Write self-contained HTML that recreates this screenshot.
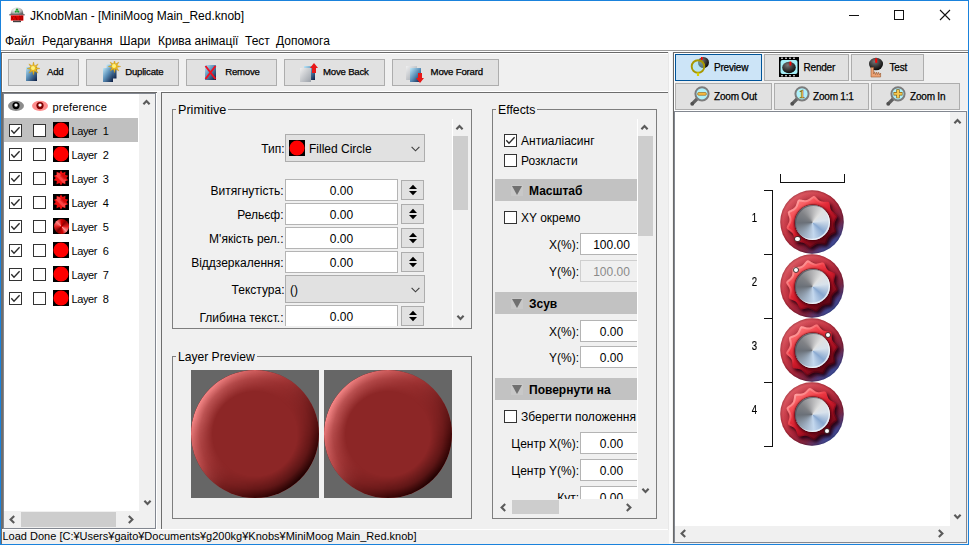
<!DOCTYPE html>
<html><head><meta charset="utf-8">
<style>
*{box-sizing:border-box;margin:0;padding:0}
html,body{width:969px;height:545px;overflow:hidden;background:#f0f0f0;font-family:"Liberation Sans",sans-serif;font-size:12px;color:#000}
div,span,svg{position:absolute}
.t{white-space:nowrap;line-height:14px}
.s10{font-size:10px;line-height:12px;letter-spacing:-0.2px;-webkit-text-stroke:0.25px #000}
.btn{background:#e1e1e1;border:1px solid #adadad}
.fld{background:#fff;border:1px solid #b4b4b4;text-align:center;line-height:22px;white-space:nowrap;overflow:hidden}
.cb{width:13px;height:13px;border:1px solid #333;background:#fff}
.hdr{background:#c2c2c2;height:22px}
.gb{border:1px solid #7e7e7e}
.thumb{background:#cdcdcd}
.lay{font-size:11px;letter-spacing:-0.4px;word-spacing:3px;line-height:14px;white-space:nowrap}
</style></head><body>

<div style="left:0;top:0;width:969px;height:545px;border:1px solid #1a82dc"></div>
<div style="left:1px;top:1px;width:967px;height:49px;background:#fff"></div>
<div style="left:1px;top:50px;width:967px;height:1px;background:#9a9a9a"></div>
<div style="left:1px;top:51px;width:967px;height:1px;background:#fff"></div>
<div style="left:1px;top:52px;width:668px;height:1px;background:#696969"></div>
<div style="left:1px;top:52px;width:1px;height:40px;background:#696969"></div>
<div style="left:2px;top:53px;width:666px;height:1px;background:#fff"></div>
<div style="left:2px;top:53px;width:1px;height:39px;background:#fff"></div>
<svg style="left:9px;top:7px" width="16" height="16" viewBox="0 0 16 16">
<defs><radialGradient id="dome" cx="0.38" cy="0.3" r="0.75"><stop offset="0" stop-color="#ffffff"/><stop offset="0.6" stop-color="#b8b8b8"/><stop offset="1" stop-color="#606060"/></radialGradient></defs>
<path d="M1.5 7.6 Q1.5 0.6 8 0.6 Q14.5 0.6 14.5 7.6 Z" fill="url(#dome)"/>
<rect x="0.3" y="7.2" width="15.4" height="1.2" fill="#5a5a5a"/>
<rect x="1.8" y="8.4" width="12.6" height="5.2" fill="#ff0000"/>
<path d="M2.8 9v4M3.3 11l1.5-2M3.3 11l1.5 2M6 9v4M6 9l2 4M8 9v4M10 9.2h1.2v3.6h-1.2zM12.2 9v4h1.3v-4z" stroke="#500000" stroke-width="0.45" fill="none"/>
<rect x="4" y="13.6" width="8" height="1.6" fill="#404040"/>
<circle cx="8" cy="2.6" r="1.2" fill="#1a9a2a"/><circle cx="6.8" cy="4.6" r="1.1" fill="#1a9a2a"/><circle cx="9.2" cy="4.6" r="1.1" fill="#1a9a2a"/>
</svg>
<div class="t" style="left:30px;top:9px">JKnobMan - [MiniMoog Main_Red.knob]</div>
<div style="left:849px;top:15px;width:10px;height:1px;background:#111"></div>
<div style="left:894px;top:10px;width:10px;height:10px;border:1px solid #111"></div>
<svg style="left:939px;top:9px" width="12" height="12" viewBox="0 0 12 12"><path d="M1 1L11 11M11 1L1 11" stroke="#111" stroke-width="1.1"/></svg>
<div class="t" style="left:5px;top:33.5px">Файл</div>
<div class="t" style="left:42px;top:33.5px">Редагування</div>
<div class="t" style="left:119.5px;top:33.5px">Шари</div>
<div class="t" style="left:158px;top:33.5px">Крива анімації</div>
<div class="t" style="left:245px;top:33.5px">Тест</div>
<div class="t" style="left:276px;top:33.5px">Допомога</div>
<div class="btn" style="left:8px;top:59px;width:71px;height:27px"></div>
<svg style="left:24px;top:62px" width="20" height="21"><defs><linearGradient id="g1" x1="0" y1="0" x2="1" y2="1"><stop offset="0" stop-color="#bfe8f8"/><stop offset="0.45" stop-color="#5a8fb8"/><stop offset="1" stop-color="#0a1a40"/></linearGradient></defs><rect x="2" y="5" width="11" height="14" fill="url(#g1)"/><path d="M9.50,0.00 L10.54,3.98 L14.10,1.90 L12.02,5.46 L16.00,6.50 L12.02,7.54 L14.10,11.10 L10.54,9.02 L9.50,13.00 L8.46,9.02 L4.90,11.10 L6.98,7.54 L3.00,6.50 L6.98,5.46 L4.90,1.90 L8.46,3.98Z" fill="#e8b820" stroke="#c89010" stroke-width="0.4"/><circle cx="9.0" cy="6.0" r="2" fill="#fff27a"/></svg>
<div class="t s10" style="left:47px;top:66.3px;font-size:9.6px">Add</div>
<div class="btn" style="left:86px;top:59px;width:93px;height:27px"></div>
<svg style="left:101px;top:61px" width="22" height="22"><defs><linearGradient id="g2b" x1="0" y1="0" x2="1" y2="1"><stop offset="0" stop-color="#bfe8f8"/><stop offset="0.45" stop-color="#5a8fb8"/><stop offset="1" stop-color="#0a1a40"/></linearGradient></defs><rect x="5.5" y="3.5" width="10" height="14" fill="url(#g2b)"/><defs><linearGradient id="g2a" x1="0" y1="0" x2="1" y2="1"><stop offset="0" stop-color="#bfe8f8"/><stop offset="0.45" stop-color="#5a8fb8"/><stop offset="1" stop-color="#0a1a40"/></linearGradient></defs><rect x="2" y="7" width="10" height="14" fill="url(#g2a)"/><path d="M13.50,-0.70 L14.50,3.09 L17.88,1.12 L15.91,4.50 L19.70,5.50 L15.91,6.50 L17.88,9.88 L14.50,7.91 L13.50,11.70 L12.50,7.91 L9.12,9.88 L11.09,6.50 L7.30,5.50 L11.09,4.50 L9.12,1.12 L12.50,3.09Z" fill="#e8b820" stroke="#c89010" stroke-width="0.4"/><circle cx="13.0" cy="5.0" r="2" fill="#fff27a"/></svg>
<div class="t s10" style="left:125.2px;top:66.3px;font-size:9.6px">Duplicate</div>
<div class="btn" style="left:186px;top:59px;width:91px;height:27px"></div>
<svg style="left:203px;top:63px" width="16" height="19"><defs><linearGradient id="g3" x1="0" y1="0" x2="1" y2="1"><stop offset="0" stop-color="#bfe8f8"/><stop offset="0.45" stop-color="#5a8fb8"/><stop offset="1" stop-color="#0a1a40"/></linearGradient></defs><rect x="2" y="2" width="11" height="15" fill="url(#g3)"/><path d="M2.5 3L12.5 16M12.5 3L2.5 16" stroke="#f01020" stroke-width="2"/></svg>
<div class="t s10" style="left:225.2px;top:66.3px;font-size:9.6px">Remove</div>
<div class="btn" style="left:284px;top:59px;width:101px;height:27px"></div>
<svg style="left:299px;top:62px" width="22" height="22"><defs><linearGradient id="g4" x1="0" y1="0" x2="1" y2="1"><stop offset="0" stop-color="#bfe8f8"/><stop offset="0.5" stop-color="#5a8fb8"/><stop offset="1" stop-color="#0a1a40"/></linearGradient><linearGradient id="g4g" x1="0" y1="0" x2="1" y2="1"><stop offset="0" stop-color="#f0f0f0"/><stop offset="1" stop-color="#9aa0a8"/></linearGradient></defs><rect x="5" y="4" width="11" height="14" fill="url(#g4)"/><rect x="1" y="6" width="11" height="14" fill="url(#g4g)"/><path d="M15 1L19 6H17V11H13V6H11Z" fill="#e81818"/></svg>
<div class="t s10" style="left:323px;top:66.3px;font-size:9.6px">Move Back</div>
<div class="btn" style="left:392px;top:59px;width:107px;height:27px"></div>
<svg style="left:405px;top:62px" width="22" height="22"><defs><linearGradient id="g5" x1="0" y1="0" x2="1" y2="1"><stop offset="0" stop-color="#bfe8f8"/><stop offset="0.5" stop-color="#5a8fb8"/><stop offset="1" stop-color="#0a1a40"/></linearGradient><linearGradient id="g5g" x1="0" y1="0" x2="1" y2="1"><stop offset="0" stop-color="#f0f0f0"/><stop offset="1" stop-color="#9aa0a8"/></linearGradient></defs><rect x="1" y="4" width="11" height="14" fill="url(#g5g)"/><rect x="5" y="6" width="11" height="14" fill="url(#g5)"/><path d="M15 21L19 16H17V11H13V16H11Z" fill="#e81818"/></svg>
<div class="t s10" style="left:430.6px;top:66.3px;font-size:9.6px">Move Forard</div>
<div style="left:2px;top:91px;width:666px;height:1px;background:#fff"></div>
<div style="left:1px;top:92px;width:2px;height:437px;background:#6d6d6d"></div>
<div style="left:3px;top:93px;width:153px;height:436px;border:1px solid #828790"></div>
<div style="left:156px;top:93px;width:1px;height:437px;background:#fff"></div>
<div style="left:1px;top:92px;width:156px;height:1px;background:#696969"></div>
<div style="left:1px;top:529px;width:667px;height:1px;background:#fff"></div>
<div style="left:1px;top:529px;width:1px;height:15px;background:#6d6d6d"></div>
<div style="left:4px;top:94px;width:135px;height:417px;background:#fff"></div>
<div style="left:139px;top:94px;width:16px;height:417px;background:#f0f0f0"></div>
<svg style="left:141.8px;top:99px" width="9" height="6" viewBox="0 0 9 6"><path d="M1.4 5.3L4.5 2L7.6 5.3" fill="none" stroke="#5a5a5a" stroke-width="2.1"/></svg>
<svg style="left:142.5px;top:499.5px" width="9" height="6" viewBox="0 0 9 6"><path d="M1.4 0.7L4.5 4L7.6 0.7" fill="none" stroke="#5a5a5a" stroke-width="2.1"/></svg>
<div style="left:4px;top:511px;width:151px;height:17px;background:#f0f0f0"></div>
<div class="thumb" style="left:21px;top:512px;width:95px;height:15px"></div>
<svg style="left:9px;top:515px" width="6" height="9" viewBox="0 0 6 9"><path d="M5.2 1.1L1.6 4.5L5.2 7.9" fill="none" stroke="#5a5a5a" stroke-width="2.1"/></svg>
<svg style="left:128px;top:515px" width="6" height="9" viewBox="0 0 6 9"><path d="M0.8 1.1L4.4 4.5L0.8 7.9" fill="none" stroke="#5a5a5a" stroke-width="2.1"/></svg>
<svg style="left:8px;top:100px" width="16" height="12" viewBox="0 0 16 12"><ellipse cx="8" cy="5.8" rx="8" ry="5.1" fill="#8c8c8c"/><circle cx="8" cy="5.6" r="3.6" fill="#000"/><circle cx="8" cy="5.1" r="1.7" fill="#fff"/></svg>
<svg style="left:32px;top:100px" width="16" height="12" viewBox="0 0 16 12"><ellipse cx="8" cy="5.8" rx="8" ry="5.1" fill="#ff8c8c"/><circle cx="8" cy="5.6" r="3.6" fill="#800000"/><circle cx="8" cy="5.1" r="1.7" fill="#fff"/></svg>
<div class="t" style="left:52.5px;top:100px;font-size:11px;letter-spacing:0.2px">preference</div>
<div style="left:4px;top:118px;width:134px;height:24px;background:#c0c0c0"></div>
<div class="cb" style="left:9px;top:124px"></div>
<svg style="left:9px;top:124px" width="13" height="13" viewBox="0 0 13 13"><path d="M2.3 6.3L5 9.3L10.6 3.2" fill="none" stroke="#2a2a2a" stroke-width="1.35"/></svg>
<div class="cb" style="left:33px;top:124px"></div>
<svg style="left:53px;top:122px" width="16" height="16" viewBox="0 0 16 16"><rect width="16" height="16" fill="#000"/><circle cx="8" cy="8" r="7.6" fill="#ff0000"/></svg>
<div class="lay" style="left:71.5px;top:123.5px">Layer 1</div>
<div class="cb" style="left:9px;top:148px"></div>
<svg style="left:9px;top:148px" width="13" height="13" viewBox="0 0 13 13"><path d="M2.3 6.3L5 9.3L10.6 3.2" fill="none" stroke="#2a2a2a" stroke-width="1.35"/></svg>
<div class="cb" style="left:33px;top:148px"></div>
<svg style="left:53px;top:146px" width="16" height="16" viewBox="0 0 16 16"><rect width="16" height="16" fill="#000"/><circle cx="8" cy="8" r="7.6" fill="#ff0000"/></svg>
<div class="lay" style="left:71.5px;top:147.5px">Layer 2</div>
<div class="cb" style="left:9px;top:172px"></div>
<svg style="left:9px;top:172px" width="13" height="13" viewBox="0 0 13 13"><path d="M2.3 6.3L5 9.3L10.6 3.2" fill="none" stroke="#2a2a2a" stroke-width="1.35"/></svg>
<div class="cb" style="left:33px;top:172px"></div>
<svg style="left:53px;top:170px" width="16" height="16" viewBox="0 0 16 16"><rect width="16" height="16" fill="#000"/><defs><clipPath id="bc2"><path d="M8.00,0.40 L9.61,3.05 L12.47,1.85 L12.21,4.94 L15.23,5.65 L13.20,8.00 L15.23,10.35 L12.21,11.06 L12.47,14.15 L9.61,12.95 L8.00,15.60 L6.39,12.95 L3.53,14.15 L3.79,11.06 L0.77,10.35 L2.80,8.00 L0.77,5.65 L3.79,4.94 L3.53,1.85 L6.39,3.05Z"/></clipPath></defs><path d="M8.00,0.40 L9.61,3.05 L12.47,1.85 L12.21,4.94 L15.23,5.65 L13.20,8.00 L15.23,10.35 L12.21,11.06 L12.47,14.15 L9.61,12.95 L8.00,15.60 L6.39,12.95 L3.53,14.15 L3.79,11.06 L0.77,10.35 L2.80,8.00 L0.77,5.65 L3.79,4.94 L3.53,1.85 L6.39,3.05Z" fill="#f01010"/><g clip-path="url(#bc2)"><path d="M2 5L5 2L14 11L11 14Z" fill="#ff5050" opacity="0.8"/><path d="M7 6L10 3L14 7L11 10Z" fill="#c00000" opacity="0.5"/></g></svg>
<div class="lay" style="left:71.5px;top:171.5px">Layer 3</div>
<div class="cb" style="left:9px;top:196px"></div>
<svg style="left:9px;top:196px" width="13" height="13" viewBox="0 0 13 13"><path d="M2.3 6.3L5 9.3L10.6 3.2" fill="none" stroke="#2a2a2a" stroke-width="1.35"/></svg>
<div class="cb" style="left:33px;top:196px"></div>
<svg style="left:53px;top:194px" width="16" height="16" viewBox="0 0 16 16"><rect width="16" height="16" fill="#000"/><defs><clipPath id="bc3"><path d="M8.00,0.40 L9.61,3.05 L12.47,1.85 L12.21,4.94 L15.23,5.65 L13.20,8.00 L15.23,10.35 L12.21,11.06 L12.47,14.15 L9.61,12.95 L8.00,15.60 L6.39,12.95 L3.53,14.15 L3.79,11.06 L0.77,10.35 L2.80,8.00 L0.77,5.65 L3.79,4.94 L3.53,1.85 L6.39,3.05Z"/></clipPath></defs><path d="M8.00,0.40 L9.61,3.05 L12.47,1.85 L12.21,4.94 L15.23,5.65 L13.20,8.00 L15.23,10.35 L12.21,11.06 L12.47,14.15 L9.61,12.95 L8.00,15.60 L6.39,12.95 L3.53,14.15 L3.79,11.06 L0.77,10.35 L2.80,8.00 L0.77,5.65 L3.79,4.94 L3.53,1.85 L6.39,3.05Z" fill="#f01010"/><g clip-path="url(#bc3)"><path d="M2 5L5 2L14 11L11 14Z" fill="#ff5050" opacity="0.8"/><path d="M7 6L10 3L14 7L11 10Z" fill="#c00000" opacity="0.5"/></g></svg>
<div class="lay" style="left:71.5px;top:195.5px">Layer 4</div>
<div class="cb" style="left:9px;top:220px"></div>
<svg style="left:9px;top:220px" width="13" height="13" viewBox="0 0 13 13"><path d="M2.3 6.3L5 9.3L10.6 3.2" fill="none" stroke="#2a2a2a" stroke-width="1.35"/></svg>
<div class="cb" style="left:33px;top:220px"></div>
<div style="left:53px;top:218px;width:16px;height:16px;background:#000"></div>
<div style="left:53.5px;top:218.5px;width:15px;height:15px;border-radius:50%;background:conic-gradient(from 0deg,#d00000 0deg,#900000 40deg,#e02020 90deg,#ff9090 135deg,#d00000 170deg,#800000 220deg,#e02020 270deg,#ff8080 315deg,#d00000 360deg)"></div>
<div class="lay" style="left:71.5px;top:219.5px">Layer 5</div>
<div class="cb" style="left:9px;top:244px"></div>
<svg style="left:9px;top:244px" width="13" height="13" viewBox="0 0 13 13"><path d="M2.3 6.3L5 9.3L10.6 3.2" fill="none" stroke="#2a2a2a" stroke-width="1.35"/></svg>
<div class="cb" style="left:33px;top:244px"></div>
<svg style="left:53px;top:242px" width="16" height="16" viewBox="0 0 16 16"><rect width="16" height="16" fill="#000"/><circle cx="8" cy="8" r="7.6" fill="#ff0000"/></svg>
<div class="lay" style="left:71.5px;top:243.5px">Layer 6</div>
<div class="cb" style="left:9px;top:268px"></div>
<svg style="left:9px;top:268px" width="13" height="13" viewBox="0 0 13 13"><path d="M2.3 6.3L5 9.3L10.6 3.2" fill="none" stroke="#2a2a2a" stroke-width="1.35"/></svg>
<div class="cb" style="left:33px;top:268px"></div>
<svg style="left:53px;top:266px" width="16" height="16" viewBox="0 0 16 16"><rect width="16" height="16" fill="#000"/><circle cx="8" cy="8" r="7.6" fill="#ff0000"/></svg>
<div class="lay" style="left:71.5px;top:267.5px">Layer 7</div>
<div class="cb" style="left:9px;top:292px"></div>
<svg style="left:9px;top:292px" width="13" height="13" viewBox="0 0 13 13"><path d="M2.3 6.3L5 9.3L10.6 3.2" fill="none" stroke="#2a2a2a" stroke-width="1.35"/></svg>
<div class="cb" style="left:33px;top:292px"></div>
<svg style="left:53px;top:290px" width="16" height="16" viewBox="0 0 16 16"><rect width="16" height="16" fill="#000"/><circle cx="8" cy="8" r="7.6" fill="#ff0000"/></svg>
<div class="lay" style="left:71.5px;top:291.5px">Layer 8</div>
<div style="left:161px;top:92px;width:507px;height:437px;border-left:1px solid #6d6d6d;border-top:1px solid #6d6d6d"></div>
<div class="gb" style="left:172px;top:109px;width:300px;height:220px"></div>
<div class="t" style="left:176px;top:104px;padding:0 2px;background:#f0f0f0;line-height:12px;font-size:12.6px">Primitive</div>
<div style="left:452px;top:119px;width:1px;height:208px;background:#fff"></div>
<div class="thumb" style="left:453px;top:136px;width:15px;height:74px"></div>
<svg style="left:455.3px;top:124px" width="9" height="6" viewBox="0 0 9 6"><path d="M1.4 5.3L4.5 2L7.6 5.3" fill="none" stroke="#5a5a5a" stroke-width="2.1"/></svg>
<svg style="left:456px;top:315px" width="9" height="6" viewBox="0 0 9 6"><path d="M1.4 0.7L4.5 4L7.6 0.7" fill="none" stroke="#5a5a5a" stroke-width="2.1"/></svg>
<div class="t" style="right:684.5px;top:142px;">Тип:</div>
<div class="btn" style="left:285px;top:134px;width:140px;height:28px"></div>
<svg style="left:289px;top:140px" width="16" height="16" viewBox="0 0 16 16"><rect width="16" height="16" fill="#000"/><circle cx="8" cy="8" r="7.6" fill="#ff0000"/></svg>
<div class="t" style="left:309px;top:142px">Filled Circle</div>
<svg style="left:410.5px;top:145.5px" width="9" height="6" viewBox="0 0 9 6"><path d="M0.6 0.8L4.5 4.8L8.4 0.8" fill="none" stroke="#404040" stroke-width="1.15"/></svg>
<div class="t" style="right:685.5px;top:184px;">Витягнутість:</div>
<div class="fld" style="left:285px;top:179px;width:113px;height:22px">0.00</div>
<div class="btn" style="left:401px;top:180px;width:23px;height:20px"></div><svg style="left:408px;top:184px" width="10" height="12" viewBox="0 0 10 12"><path d="M1 5L5 0.8L9 5Z M1 7L5 11.2L9 7Z" fill="#000"/></svg>
<div class="t" style="right:685.5px;top:208px;">Рельєф:</div>
<div class="fld" style="left:285px;top:203px;width:113px;height:22px">0.00</div>
<div class="btn" style="left:401px;top:204px;width:23px;height:20px"></div><svg style="left:408px;top:208px" width="10" height="12" viewBox="0 0 10 12"><path d="M1 5L5 0.8L9 5Z M1 7L5 11.2L9 7Z" fill="#000"/></svg>
<div class="t" style="right:685.5px;top:232px;">М'якість рел.:</div>
<div class="fld" style="left:285px;top:227px;width:113px;height:22px">0.00</div>
<div class="btn" style="left:401px;top:228px;width:23px;height:20px"></div><svg style="left:408px;top:232px" width="10" height="12" viewBox="0 0 10 12"><path d="M1 5L5 0.8L9 5Z M1 7L5 11.2L9 7Z" fill="#000"/></svg>
<div class="t" style="right:685.5px;top:256px;">Віддзеркалення:</div>
<div class="fld" style="left:285px;top:251px;width:113px;height:22px">0.00</div>
<div class="btn" style="left:401px;top:252px;width:23px;height:20px"></div><svg style="left:408px;top:256px" width="10" height="12" viewBox="0 0 10 12"><path d="M1 5L5 0.8L9 5Z M1 7L5 11.2L9 7Z" fill="#000"/></svg>
<div class="t" style="right:684.5px;top:283px;">Текстура:</div>
<div class="btn" style="left:285px;top:275px;width:140px;height:28px"></div>
<div class="t" style="left:290px;top:283px">()</div>
<svg style="left:410.5px;top:286.5px" width="9" height="6" viewBox="0 0 9 6"><path d="M0.6 0.8L4.5 4.8L8.4 0.8" fill="none" stroke="#404040" stroke-width="1.15"/></svg>
<div style="left:173px;top:303px;width:279px;height:23px;overflow:hidden">
<div class="t" style="right:168.5px;top:8px">Глибина текст.:</div>
<div class="fld" style="left:112px;top:2px;width:113px;height:22px">0.00</div>
<div class="btn" style="left:228px;top:3px;width:23px;height:20px"></div><svg style="left:235px;top:7px" width="10" height="12" viewBox="0 0 10 12"><path d="M1 5L5 0.8L9 5Z M1 7L5 11.2L9 7Z" fill="#000"/></svg>
</div>
<div class="gb" style="left:172px;top:356px;width:300px;height:163px"></div>
<div class="t" style="left:176px;top:351px;padding:0 2px;background:#f0f0f0;line-height:12px;font-size:12.1px">Layer Preview</div>
<div style="left:191px;top:370px;width:128px;height:128px;background:#666"></div>
<div style="left:191px;top:370px;width:128px;height:128px;border-radius:50%;background:#8c2626"></div>
<div style="left:191px;top:370px;width:128px;height:128px;border-radius:50%;background:conic-gradient(from 0deg, rgba(232,115,115,0.75) 0deg, rgba(205,85,85,0.35) 30deg, rgba(30,0,0,0.25) 60deg, rgba(40,0,0,0.85) 95deg, rgba(25,0,0,1) 135deg, rgba(40,0,0,0.85) 180deg, rgba(30,0,0,0.25) 212deg, rgba(240,120,120,0.45) 240deg, rgba(250,140,140,1) 285deg, rgba(250,140,140,0.95) 318deg, rgba(232,115,115,0.75) 360deg);-webkit-mask-image:radial-gradient(closest-side, transparent 66%, rgba(0,0,0,0.45) 86%, black 100%);mask-image:radial-gradient(closest-side, transparent 66%, rgba(0,0,0,0.45) 86%, black 100%)"></div>
<div style="left:324px;top:370px;width:128px;height:128px;background:#666"></div>
<div style="left:324px;top:370px;width:128px;height:128px;border-radius:50%;background:#8c2626"></div>
<div style="left:324px;top:370px;width:128px;height:128px;border-radius:50%;background:conic-gradient(from 0deg, rgba(232,115,115,0.75) 0deg, rgba(205,85,85,0.35) 30deg, rgba(30,0,0,0.25) 60deg, rgba(40,0,0,0.85) 95deg, rgba(25,0,0,1) 135deg, rgba(40,0,0,0.85) 180deg, rgba(30,0,0,0.25) 212deg, rgba(240,120,120,0.45) 240deg, rgba(250,140,140,1) 285deg, rgba(250,140,140,0.95) 318deg, rgba(232,115,115,0.75) 360deg);-webkit-mask-image:radial-gradient(closest-side, transparent 66%, rgba(0,0,0,0.45) 86%, black 100%);mask-image:radial-gradient(closest-side, transparent 66%, rgba(0,0,0,0.45) 86%, black 100%)"></div>
<div class="gb" style="left:492px;top:109px;width:165px;height:410px"></div>
<div class="t" style="left:496px;top:104px;padding:0 2px;background:#f0f0f0;line-height:12px;font-size:12.3px">Effects</div>
<div style="left:493px;top:119px;width:144px;height:380px;overflow:hidden">
<div class="cb" style="left:11px;top:15px"></div>
<svg style="left:11px;top:15px" width="13" height="13" viewBox="0 0 13 13"><path d="M2.3 6.3L5 9.3L10.6 3.2" fill="none" stroke="#2a2a2a" stroke-width="1.35"/></svg>
<div class="t" style="left:28px;top:15px">Антиаліасинг</div>
<div class="cb" style="left:11px;top:35px"></div>
<div class="t" style="left:28px;top:35px">Розкласти</div>
<div class="hdr" style="left:2px;top:60px;width:142px"></div>
<svg style="left:18px;top:66px" width="12" height="11" viewBox="0 0 12 11"><rect x="-1" y="-2" width="14" height="15" fill="#c8c8c8"/><path d="M1 1H11L6 10Z" fill="#707070"/></svg>
<div class="t" style="left:36px;top:65px;font-weight:bold">Масштаб</div>
<div class="cb" style="left:11px;top:92px"></div>
<div class="t" style="left:28px;top:92px">XY окремо</div>
<div class="t" style="right:58px;top:119px">X(%):</div>
<div class="fld" style="left:87px;top:114px;width:63px;height:22px;">100.00</div>
<div class="t" style="right:58px;top:146px">Y(%):</div>
<div class="fld" style="left:87px;top:141px;width:63px;height:22px;background:#f0f0f0;color:#8a8a8a;border-color:#cfcfcf">100.00</div>
<div class="hdr" style="left:2px;top:173px;width:142px"></div>
<svg style="left:18px;top:179px" width="12" height="11" viewBox="0 0 12 11"><rect x="-1" y="-2" width="14" height="15" fill="#c8c8c8"/><path d="M1 1H11L6 10Z" fill="#707070"/></svg>
<div class="t" style="left:36px;top:178px;font-weight:bold">Зсув</div>
<div class="t" style="right:58px;top:206px">X(%):</div>
<div class="fld" style="left:87px;top:201px;width:63px;height:22px;">0.00</div>
<div class="t" style="right:58px;top:232px">Y(%):</div>
<div class="fld" style="left:87px;top:227px;width:63px;height:22px;">0.00</div>
<div class="hdr" style="left:2px;top:259px;width:142px"></div>
<svg style="left:18px;top:265px" width="12" height="11" viewBox="0 0 12 11"><rect x="-1" y="-2" width="14" height="15" fill="#c8c8c8"/><path d="M1 1H11L6 10Z" fill="#707070"/></svg>
<div class="t" style="left:36px;top:264px;font-weight:bold">Повернути на</div>
<div class="cb" style="left:11px;top:291px"></div>
<div class="t" style="left:28px;top:291px">Зберегти положення</div>
<div class="t" style="right:58px;top:318px">Центр X(%):</div>
<div class="fld" style="left:87px;top:313px;width:63px;height:22px;">0.00</div>
<div class="t" style="right:58px;top:345px">Центр Y(%):</div>
<div class="fld" style="left:87px;top:340px;width:63px;height:22px;">0.00</div>
<div class="t" style="right:58px;top:372px">Кут:</div>
<div class="fld" style="left:87px;top:367px;width:63px;height:22px;">0.00</div>
</div>
<div style="left:637px;top:119px;width:1px;height:380px;background:#fff"></div>
<div class="thumb" style="left:638px;top:136px;width:15px;height:100px"></div>
<svg style="left:640.3px;top:124px" width="9" height="6" viewBox="0 0 9 6"><path d="M1.4 5.3L4.5 2L7.6 5.3" fill="none" stroke="#5a5a5a" stroke-width="2.1"/></svg>
<svg style="left:641px;top:488px" width="9" height="6" viewBox="0 0 9 6"><path d="M1.4 0.7L4.5 4L7.6 0.7" fill="none" stroke="#5a5a5a" stroke-width="2.1"/></svg>
<div class="thumb" style="left:512px;top:500px;width:47px;height:14px"></div>
<svg style="left:500px;top:502.5px" width="6" height="9" viewBox="0 0 6 9"><path d="M5.2 1.1L1.6 4.5L5.2 7.9" fill="none" stroke="#5a5a5a" stroke-width="2.1"/></svg>
<svg style="left:626px;top:502.5px" width="6" height="9" viewBox="0 0 6 9"><path d="M0.8 1.1L4.4 4.5L0.8 7.9" fill="none" stroke="#5a5a5a" stroke-width="2.1"/></svg>
<div style="left:668px;top:52px;width:1px;height:478px;background:#e8e8e8"></div>
<div style="left:669px;top:52px;width:3px;height:492px;background:#fbfbfb"></div>
<div style="left:673px;top:52px;width:295px;height:492px;background:#f0f0f0"></div>
<div style="left:673px;top:52px;width:295px;height:1px;background:#696969"></div>
<div style="left:673px;top:52px;width:1px;height:491px;background:#696969"></div>
<div style="left:674px;top:53px;width:293px;height:1px;background:#fff"></div>
<div style="left:674px;top:53px;width:1px;height:58px;background:#fff"></div>
<div class="btn" style="left:675px;top:54px;width:87px;height:27px;background:#cce4f7;border-color:#005499"></div>
<svg style="left:688px;top:56px" width="22" height="22" viewBox="0 0 22 22"><defs><radialGradient id="pb" cx="0.35" cy="0.3" r="0.7"><stop offset="0" stop-color="#777"/><stop offset="1" stop-color="#111"/></radialGradient></defs><circle cx="15.5" cy="6.5" r="5.5" fill="url(#pb)"/><rect x="13" y="1" width="1.6" height="3" fill="#f00"/><circle cx="10" cy="10.5" r="6.3" fill="#9ee3ee" fill-opacity="0.45" stroke="#a89800" stroke-width="1.9"/><path d="M10 16.5V20" stroke="#d8d000" stroke-width="2.2"/></svg>
<div class="t s10" style="left:714px;top:62px">Preview</div>
<div class="btn" style="left:764px;top:54px;width:85px;height:27px;"></div>
<svg style="left:779px;top:57px" width="20" height="20" viewBox="0 0 20 20"><rect width="20" height="20" fill="#000"/><path d="M2 1.2h2M6 1.2h2M10 1.2h2M14 1.2h2M2 18.8h2M6 18.8h2M10 18.8h2M14 18.8h2" stroke="#fff" stroke-width="1"/><rect x="1.5" y="3" width="17" height="14" rx="2" fill="#a6f0f8"/><defs><radialGradient id="rb" cx="0.4" cy="0.3" r="0.7"><stop offset="0" stop-color="#777"/><stop offset="1" stop-color="#0a0a0a"/></radialGradient></defs><ellipse cx="10" cy="10.5" rx="6.8" ry="5.8" fill="url(#rb)"/><rect x="10.5" y="4.5" width="1.8" height="4" fill="#f00"/></svg>
<div class="t s10" style="left:803.5px;top:62px">Render</div>
<div class="btn" style="left:851px;top:54px;width:73px;height:27px;"></div>
<svg style="left:867px;top:56px" width="18" height="22" viewBox="0 0 18 22"><defs><radialGradient id="tb" cx="0.4" cy="0.3" r="0.7"><stop offset="0" stop-color="#777"/><stop offset="1" stop-color="#0a0a0a"/></radialGradient></defs><ellipse cx="9" cy="8" rx="7" ry="6.3" fill="url(#tb)"/><rect x="8.2" y="2.3" width="2" height="4.5" fill="#f00"/><path d="M4 11.5H6.6V18L7.6 15.8L8.6 18.6L9.6 16L10.6 18.6L11.6 16.2L12.6 18.8L13.6 17V21H4Z" fill="#eca274" stroke="#9a5a30" stroke-width="0.6"/></svg>
<div class="t s10" style="left:889.5px;top:62px">Test</div>
<div class="btn" style="left:675px;top:83px;width:97px;height:27px;"></div>
<svg style="left:689px;top:85px" width="22" height="22" viewBox="0 0 22 22"><path d="M8.5 13.5L3 19" stroke="#606060" stroke-width="3.2"/><circle cx="3.2" cy="18.8" r="1.9" fill="#505050"/><circle cx="13" cy="8.8" r="6.6" fill="#aef0fa" stroke="#7c7c7c" stroke-width="2"/><rect x="8.6" y="7.5" width="8.8" height="2.8" rx="1.2" fill="#f4b840" stroke="#906010" stroke-width="0.6"/></svg>
<div class="t s10" style="left:714px;top:91px">Zoom Out</div>
<div class="btn" style="left:774px;top:83px;width:95px;height:27px;"></div>
<svg style="left:789px;top:85px" width="22" height="22" viewBox="0 0 22 22"><path d="M8.5 13.5L3 19" stroke="#606060" stroke-width="3.2"/><circle cx="3.2" cy="18.8" r="1.9" fill="#505050"/><circle cx="13" cy="8.8" r="6.6" fill="#aef0fa" stroke="#7c7c7c" stroke-width="2"/><text x="13" y="13.2" font-size="11.5" font-weight="bold" text-anchor="middle" fill="#f2c850" stroke="#7a5a10" stroke-width="0.5" font-family="Liberation Serif">1</text></svg>
<div class="t s10" style="left:813px;top:91px">Zoom 1:1</div>
<div class="btn" style="left:871px;top:83px;width:89px;height:27px;"></div>
<svg style="left:885px;top:85px" width="22" height="22" viewBox="0 0 22 22"><path d="M8.5 13.5L3 19" stroke="#606060" stroke-width="3.2"/><circle cx="3.2" cy="18.8" r="1.9" fill="#505050"/><circle cx="13" cy="8.8" r="6.6" fill="#aef0fa" stroke="#7c7c7c" stroke-width="2"/><path d="M13 4.3V13.3M8.5 8.8H17.5" stroke="#8a6010" stroke-width="3.4"/><path d="M13 4.9V12.7M9.1 8.8H16.9" stroke="#f4c850" stroke-width="2"/></svg>
<div class="t s10" style="left:910px;top:91px">Zoom In</div>
<div style="left:674px;top:110px;width:293px;height:1px;background:#fff"></div>
<div style="left:674px;top:111px;width:293px;height:432px;border:1px solid #828790"></div>
<div style="left:675px;top:112px;width:275px;height:414px;background:#fff"></div>
<svg style="left:953.3px;top:118px" width="9" height="6" viewBox="0 0 9 6"><path d="M1.4 5.3L4.5 2L7.6 5.3" fill="none" stroke="#5a5a5a" stroke-width="2.1"/></svg>
<svg style="left:953.3px;top:514px" width="9" height="6" viewBox="0 0 9 6"><path d="M1.4 0.7L4.5 4L7.6 0.7" fill="none" stroke="#5a5a5a" stroke-width="2.1"/></svg>
<svg style="left:680px;top:529px" width="6" height="9" viewBox="0 0 6 9"><path d="M5.2 1.1L1.6 4.5L5.2 7.9" fill="none" stroke="#5a5a5a" stroke-width="2.1"/></svg>
<svg style="left:938px;top:529px" width="6" height="9" viewBox="0 0 6 9"><path d="M0.8 1.1L4.4 4.5L0.8 7.9" fill="none" stroke="#5a5a5a" stroke-width="2.1"/></svg>
<div style="left:780px;top:174px;width:65px;height:9px;border:1px solid #111;border-top:none"></div>
<div style="left:772px;top:190px;width:1px;height:257px;background:#111"></div>
<div style="left:764px;top:190px;width:9px;height:1px;background:#111"></div>
<div style="left:764px;top:254px;width:9px;height:1px;background:#111"></div>
<div style="left:764px;top:318px;width:9px;height:1px;background:#111"></div>
<div style="left:764px;top:382px;width:9px;height:1px;background:#111"></div>
<div style="left:764px;top:446px;width:9px;height:1px;background:#111"></div>
<div class="t" style="left:750.5px;top:211px;font-size:12px;transform:scaleX(0.8);-webkit-text-stroke:0.2px #000">1</div>
<div class="t" style="left:750.5px;top:275px;font-size:12px;transform:scaleX(0.8);-webkit-text-stroke:0.2px #000">2</div>
<div class="t" style="left:750.5px;top:339px;font-size:12px;transform:scaleX(0.8);-webkit-text-stroke:0.2px #000">3</div>
<div class="t" style="left:750.5px;top:403px;font-size:12px;transform:scaleX(0.8);-webkit-text-stroke:0.2px #000">4</div>
<svg style="left:780px;top:190px" width="64" height="64" viewBox="0 0 64 64"><defs>
<linearGradient id="ko0" x1="0.15" y1="0.1" x2="0.85" y2="0.9"><stop offset="0" stop-color="#dc5a64"/><stop offset="0.35" stop-color="#c43442"/><stop offset="0.58" stop-color="#9c1c32"/><stop offset="0.76" stop-color="#6c1a3a"/><stop offset="0.9" stop-color="#383a84"/><stop offset="1" stop-color="#1a52b4"/></linearGradient>
<radialGradient id="kr0" cx="0.5" cy="0.5" r="0.5"><stop offset="0.62" stop-color="#400008" stop-opacity="0.35"/><stop offset="0.8" stop-color="#400008" stop-opacity="0.05"/><stop offset="0.9" stop-color="#ff9090" stop-opacity="0.06"/><stop offset="1" stop-color="#400008" stop-opacity="0.3"/></radialGradient>
<linearGradient id="kg0" x1="0.2" y1="0.08" x2="0.8" y2="0.92"><stop offset="0" stop-color="#ff7c7c"/><stop offset="0.28" stop-color="#f03c46"/><stop offset="0.5" stop-color="#d41c2c"/><stop offset="0.72" stop-color="#a00e20"/><stop offset="1" stop-color="#4c0616"/></linearGradient>
<linearGradient id="kh0" x1="0.1" y1="0.1" x2="0.7" y2="0.7"><stop offset="0" stop-color="#ffb0b0" stop-opacity="0.9"/><stop offset="0.6" stop-color="#ff9090" stop-opacity="0"/></linearGradient>
<linearGradient id="kd0" x1="0.3" y1="0.3" x2="0.9" y2="0.9"><stop offset="0.4" stop-color="#400010" stop-opacity="0"/><stop offset="1" stop-color="#400010" stop-opacity="0.8"/></linearGradient>
<clipPath id="kc0"><path d="M32.00,6.89 L32.40,6.63 L32.80,6.40 L33.22,6.22 L33.63,6.10 L34.04,6.08 L34.44,6.17 L34.83,6.36 L35.21,6.61 L35.57,6.91 L35.92,7.22 L36.27,7.55 L36.60,7.88 L36.93,8.21 L37.25,8.53 L37.56,8.84 L37.87,9.15 L38.17,9.44 L38.48,9.71 L38.78,9.97 L39.08,10.21 L39.39,10.43 L39.69,10.63 L40.01,10.81 L40.32,10.98 L40.65,11.12 L40.98,11.25 L41.32,11.35 L41.67,11.44 L42.04,11.52 L42.41,11.57 L42.79,11.62 L43.19,11.65 L43.60,11.67 L44.02,11.68 L44.45,11.68 L44.90,11.68 L45.35,11.67 L45.81,11.67 L46.28,11.67 L46.76,11.69 L47.23,11.71 L47.70,11.77 L48.14,11.86 L48.54,12.00 L48.89,12.23 L49.16,12.54 L49.36,12.92 L49.52,13.35 L49.64,13.80 L49.74,14.26 L49.82,14.73 L49.90,15.19 L49.97,15.65 L50.04,16.10 L50.11,16.53 L50.18,16.96 L50.26,17.37 L50.34,17.77 L50.43,18.16 L50.54,18.53 L50.66,18.89 L50.79,19.23 L50.93,19.56 L51.09,19.88 L51.27,20.19 L51.46,20.49 L51.68,20.78 L51.91,21.05 L52.16,21.33 L52.43,21.59 L52.71,21.85 L53.02,22.11 L53.34,22.37 L53.67,22.62 L54.02,22.88 L54.38,23.14 L54.75,23.40 L55.12,23.67 L55.50,23.95 L55.88,24.24 L56.25,24.54 L56.59,24.86 L56.90,25.19 L57.14,25.55 L57.28,25.93 L57.32,26.34 L57.26,26.77 L57.14,27.20 L56.97,27.64 L56.78,28.08 L56.57,28.50 L56.36,28.92 L56.15,29.33 L55.94,29.74 L55.74,30.13 L55.55,30.52 L55.37,30.90 L55.20,31.27 L55.05,31.64 L54.92,32.00 L54.80,32.36 L54.70,32.71 L54.62,33.07 L54.57,33.42 L54.53,33.77 L54.51,34.13 L54.52,34.49 L54.54,34.85 L54.58,35.21 L54.64,35.59 L54.72,35.97 L54.82,36.35 L54.92,36.75 L55.04,37.15 L55.17,37.56 L55.31,37.99 L55.46,38.42 L55.60,38.86 L55.74,39.30 L55.88,39.76 L56.00,40.22 L56.09,40.67 L56.15,41.12 L56.13,41.55 L56.02,41.95 L55.81,42.30 L55.51,42.62 L55.15,42.90 L54.76,43.15 L54.35,43.39 L53.94,43.61 L53.52,43.83 L53.10,44.04 L52.70,44.24 L52.30,44.44 L51.92,44.64 L51.55,44.84 L51.20,45.05 L50.86,45.26 L50.54,45.47 L50.23,45.69 L49.95,45.92 L49.68,46.16 L49.42,46.41 L49.19,46.68 L48.96,46.95 L48.76,47.25 L48.56,47.55 L48.38,47.87 L48.21,48.21 L48.05,48.56 L47.90,48.93 L47.75,49.31 L47.61,49.71 L47.48,50.12 L47.34,50.55 L47.20,50.98 L47.06,51.42 L46.92,51.87 L46.76,52.31 L46.59,52.76 L46.39,53.18 L46.17,53.57 L45.91,53.91 L45.58,54.17 L45.21,54.33 L44.78,54.41 L44.33,54.42 L43.86,54.40 L43.39,54.35 L42.92,54.29 L42.46,54.22 L42.00,54.14 L41.55,54.07 L41.11,54.00 L40.69,53.94 L40.27,53.88 L39.86,53.84 L39.47,53.81 L39.08,53.79 L38.70,53.79 L38.34,53.81 L37.98,53.85 L37.62,53.90 L37.28,53.98 L36.93,54.07 L36.59,54.18 L36.26,54.32 L35.92,54.47 L35.59,54.64 L35.25,54.84 L34.91,55.04 L34.57,55.27 L34.22,55.51 L33.87,55.76 L33.51,56.02 L33.15,56.29 L32.77,56.57 L32.39,56.84 L32.00,57.11 L31.60,57.37 L31.20,57.60 L30.78,57.78 L30.37,57.90 L29.96,57.92 L29.56,57.83 L29.17,57.64 L28.79,57.39 L28.43,57.09 L28.08,56.78 L27.73,56.45 L27.40,56.12 L27.07,55.79 L26.75,55.47 L26.44,55.16 L26.13,54.85 L25.83,54.56 L25.52,54.29 L25.22,54.03 L24.92,53.79 L24.61,53.57 L24.31,53.37 L23.99,53.19 L23.68,53.02 L23.35,52.88 L23.02,52.75 L22.68,52.65 L22.33,52.56 L21.96,52.48 L21.59,52.43 L21.21,52.38 L20.81,52.35 L20.40,52.33 L19.98,52.32 L19.55,52.32 L19.10,52.32 L18.65,52.33 L18.19,52.33 L17.72,52.33 L17.24,52.31 L16.77,52.29 L16.30,52.23 L15.86,52.14 L15.46,52.00 L15.11,51.77 L14.84,51.46 L14.64,51.08 L14.48,50.65 L14.36,50.20 L14.26,49.74 L14.18,49.27 L14.10,48.81 L14.03,48.35 L13.96,47.90 L13.89,47.47 L13.82,47.04 L13.74,46.63 L13.66,46.23 L13.57,45.84 L13.46,45.47 L13.34,45.11 L13.21,44.77 L13.07,44.44 L12.91,44.12 L12.73,43.81 L12.54,43.51 L12.32,43.22 L12.09,42.95 L11.84,42.67 L11.57,42.41 L11.29,42.15 L10.98,41.89 L10.66,41.63 L10.33,41.38 L9.98,41.12 L9.62,40.86 L9.25,40.60 L8.88,40.33 L8.50,40.05 L8.12,39.76 L7.75,39.46 L7.41,39.14 L7.10,38.81 L6.86,38.45 L6.72,38.07 L6.68,37.66 L6.74,37.23 L6.86,36.80 L7.03,36.36 L7.22,35.92 L7.43,35.50 L7.64,35.08 L7.85,34.67 L8.06,34.26 L8.26,33.87 L8.45,33.48 L8.63,33.10 L8.80,32.73 L8.95,32.36 L9.08,32.00 L9.20,31.64 L9.30,31.29 L9.38,30.93 L9.43,30.58 L9.47,30.23 L9.49,29.87 L9.48,29.51 L9.46,29.15 L9.42,28.79 L9.36,28.41 L9.28,28.03 L9.18,27.65 L9.08,27.25 L8.96,26.85 L8.83,26.44 L8.69,26.01 L8.54,25.58 L8.40,25.14 L8.26,24.70 L8.12,24.24 L8.00,23.78 L7.91,23.33 L7.85,22.88 L7.87,22.45 L7.98,22.05 L8.19,21.70 L8.49,21.38 L8.85,21.10 L9.24,20.85 L9.65,20.61 L10.06,20.39 L10.48,20.17 L10.90,19.96 L11.30,19.76 L11.70,19.56 L12.08,19.36 L12.45,19.16 L12.80,18.95 L13.14,18.74 L13.46,18.53 L13.77,18.31 L14.05,18.08 L14.32,17.84 L14.58,17.59 L14.81,17.32 L15.04,17.05 L15.24,16.75 L15.44,16.45 L15.62,16.13 L15.79,15.79 L15.95,15.44 L16.10,15.07 L16.25,14.69 L16.39,14.29 L16.52,13.88 L16.66,13.45 L16.80,13.02 L16.94,12.58 L17.08,12.13 L17.24,11.69 L17.41,11.24 L17.61,10.82 L17.83,10.43 L18.09,10.09 L18.42,9.83 L18.79,9.67 L19.22,9.59 L19.67,9.58 L20.14,9.60 L20.61,9.65 L21.08,9.71 L21.54,9.78 L22.00,9.86 L22.45,9.93 L22.89,10.00 L23.31,10.06 L23.73,10.12 L24.14,10.16 L24.53,10.19 L24.92,10.21 L25.30,10.21 L25.66,10.19 L26.02,10.15 L26.38,10.10 L26.72,10.02 L27.07,9.93 L27.41,9.82 L27.74,9.68 L28.08,9.53 L28.41,9.36 L28.75,9.16 L29.09,8.96 L29.43,8.73 L29.78,8.49 L30.13,8.24 L30.49,7.98 L30.85,7.71 L31.23,7.43 L31.61,7.16Z"/></clipPath>
<filter id="kb0" x="-30%" y="-30%" width="160%" height="160%"><feGaussianBlur stdDeviation="1.8"/></filter>
<filter id="ke0" x="-30%" y="-30%" width="160%" height="160%"><feGaussianBlur stdDeviation="1.1"/></filter>
</defs>
<circle cx="32" cy="32" r="31.7" fill="url(#ko0)"/>
<circle cx="32" cy="32" r="31.7" fill="url(#kr0)"/>
<path d="M32.00,6.89 L32.40,6.63 L32.80,6.40 L33.22,6.22 L33.63,6.10 L34.04,6.08 L34.44,6.17 L34.83,6.36 L35.21,6.61 L35.57,6.91 L35.92,7.22 L36.27,7.55 L36.60,7.88 L36.93,8.21 L37.25,8.53 L37.56,8.84 L37.87,9.15 L38.17,9.44 L38.48,9.71 L38.78,9.97 L39.08,10.21 L39.39,10.43 L39.69,10.63 L40.01,10.81 L40.32,10.98 L40.65,11.12 L40.98,11.25 L41.32,11.35 L41.67,11.44 L42.04,11.52 L42.41,11.57 L42.79,11.62 L43.19,11.65 L43.60,11.67 L44.02,11.68 L44.45,11.68 L44.90,11.68 L45.35,11.67 L45.81,11.67 L46.28,11.67 L46.76,11.69 L47.23,11.71 L47.70,11.77 L48.14,11.86 L48.54,12.00 L48.89,12.23 L49.16,12.54 L49.36,12.92 L49.52,13.35 L49.64,13.80 L49.74,14.26 L49.82,14.73 L49.90,15.19 L49.97,15.65 L50.04,16.10 L50.11,16.53 L50.18,16.96 L50.26,17.37 L50.34,17.77 L50.43,18.16 L50.54,18.53 L50.66,18.89 L50.79,19.23 L50.93,19.56 L51.09,19.88 L51.27,20.19 L51.46,20.49 L51.68,20.78 L51.91,21.05 L52.16,21.33 L52.43,21.59 L52.71,21.85 L53.02,22.11 L53.34,22.37 L53.67,22.62 L54.02,22.88 L54.38,23.14 L54.75,23.40 L55.12,23.67 L55.50,23.95 L55.88,24.24 L56.25,24.54 L56.59,24.86 L56.90,25.19 L57.14,25.55 L57.28,25.93 L57.32,26.34 L57.26,26.77 L57.14,27.20 L56.97,27.64 L56.78,28.08 L56.57,28.50 L56.36,28.92 L56.15,29.33 L55.94,29.74 L55.74,30.13 L55.55,30.52 L55.37,30.90 L55.20,31.27 L55.05,31.64 L54.92,32.00 L54.80,32.36 L54.70,32.71 L54.62,33.07 L54.57,33.42 L54.53,33.77 L54.51,34.13 L54.52,34.49 L54.54,34.85 L54.58,35.21 L54.64,35.59 L54.72,35.97 L54.82,36.35 L54.92,36.75 L55.04,37.15 L55.17,37.56 L55.31,37.99 L55.46,38.42 L55.60,38.86 L55.74,39.30 L55.88,39.76 L56.00,40.22 L56.09,40.67 L56.15,41.12 L56.13,41.55 L56.02,41.95 L55.81,42.30 L55.51,42.62 L55.15,42.90 L54.76,43.15 L54.35,43.39 L53.94,43.61 L53.52,43.83 L53.10,44.04 L52.70,44.24 L52.30,44.44 L51.92,44.64 L51.55,44.84 L51.20,45.05 L50.86,45.26 L50.54,45.47 L50.23,45.69 L49.95,45.92 L49.68,46.16 L49.42,46.41 L49.19,46.68 L48.96,46.95 L48.76,47.25 L48.56,47.55 L48.38,47.87 L48.21,48.21 L48.05,48.56 L47.90,48.93 L47.75,49.31 L47.61,49.71 L47.48,50.12 L47.34,50.55 L47.20,50.98 L47.06,51.42 L46.92,51.87 L46.76,52.31 L46.59,52.76 L46.39,53.18 L46.17,53.57 L45.91,53.91 L45.58,54.17 L45.21,54.33 L44.78,54.41 L44.33,54.42 L43.86,54.40 L43.39,54.35 L42.92,54.29 L42.46,54.22 L42.00,54.14 L41.55,54.07 L41.11,54.00 L40.69,53.94 L40.27,53.88 L39.86,53.84 L39.47,53.81 L39.08,53.79 L38.70,53.79 L38.34,53.81 L37.98,53.85 L37.62,53.90 L37.28,53.98 L36.93,54.07 L36.59,54.18 L36.26,54.32 L35.92,54.47 L35.59,54.64 L35.25,54.84 L34.91,55.04 L34.57,55.27 L34.22,55.51 L33.87,55.76 L33.51,56.02 L33.15,56.29 L32.77,56.57 L32.39,56.84 L32.00,57.11 L31.60,57.37 L31.20,57.60 L30.78,57.78 L30.37,57.90 L29.96,57.92 L29.56,57.83 L29.17,57.64 L28.79,57.39 L28.43,57.09 L28.08,56.78 L27.73,56.45 L27.40,56.12 L27.07,55.79 L26.75,55.47 L26.44,55.16 L26.13,54.85 L25.83,54.56 L25.52,54.29 L25.22,54.03 L24.92,53.79 L24.61,53.57 L24.31,53.37 L23.99,53.19 L23.68,53.02 L23.35,52.88 L23.02,52.75 L22.68,52.65 L22.33,52.56 L21.96,52.48 L21.59,52.43 L21.21,52.38 L20.81,52.35 L20.40,52.33 L19.98,52.32 L19.55,52.32 L19.10,52.32 L18.65,52.33 L18.19,52.33 L17.72,52.33 L17.24,52.31 L16.77,52.29 L16.30,52.23 L15.86,52.14 L15.46,52.00 L15.11,51.77 L14.84,51.46 L14.64,51.08 L14.48,50.65 L14.36,50.20 L14.26,49.74 L14.18,49.27 L14.10,48.81 L14.03,48.35 L13.96,47.90 L13.89,47.47 L13.82,47.04 L13.74,46.63 L13.66,46.23 L13.57,45.84 L13.46,45.47 L13.34,45.11 L13.21,44.77 L13.07,44.44 L12.91,44.12 L12.73,43.81 L12.54,43.51 L12.32,43.22 L12.09,42.95 L11.84,42.67 L11.57,42.41 L11.29,42.15 L10.98,41.89 L10.66,41.63 L10.33,41.38 L9.98,41.12 L9.62,40.86 L9.25,40.60 L8.88,40.33 L8.50,40.05 L8.12,39.76 L7.75,39.46 L7.41,39.14 L7.10,38.81 L6.86,38.45 L6.72,38.07 L6.68,37.66 L6.74,37.23 L6.86,36.80 L7.03,36.36 L7.22,35.92 L7.43,35.50 L7.64,35.08 L7.85,34.67 L8.06,34.26 L8.26,33.87 L8.45,33.48 L8.63,33.10 L8.80,32.73 L8.95,32.36 L9.08,32.00 L9.20,31.64 L9.30,31.29 L9.38,30.93 L9.43,30.58 L9.47,30.23 L9.49,29.87 L9.48,29.51 L9.46,29.15 L9.42,28.79 L9.36,28.41 L9.28,28.03 L9.18,27.65 L9.08,27.25 L8.96,26.85 L8.83,26.44 L8.69,26.01 L8.54,25.58 L8.40,25.14 L8.26,24.70 L8.12,24.24 L8.00,23.78 L7.91,23.33 L7.85,22.88 L7.87,22.45 L7.98,22.05 L8.19,21.70 L8.49,21.38 L8.85,21.10 L9.24,20.85 L9.65,20.61 L10.06,20.39 L10.48,20.17 L10.90,19.96 L11.30,19.76 L11.70,19.56 L12.08,19.36 L12.45,19.16 L12.80,18.95 L13.14,18.74 L13.46,18.53 L13.77,18.31 L14.05,18.08 L14.32,17.84 L14.58,17.59 L14.81,17.32 L15.04,17.05 L15.24,16.75 L15.44,16.45 L15.62,16.13 L15.79,15.79 L15.95,15.44 L16.10,15.07 L16.25,14.69 L16.39,14.29 L16.52,13.88 L16.66,13.45 L16.80,13.02 L16.94,12.58 L17.08,12.13 L17.24,11.69 L17.41,11.24 L17.61,10.82 L17.83,10.43 L18.09,10.09 L18.42,9.83 L18.79,9.67 L19.22,9.59 L19.67,9.58 L20.14,9.60 L20.61,9.65 L21.08,9.71 L21.54,9.78 L22.00,9.86 L22.45,9.93 L22.89,10.00 L23.31,10.06 L23.73,10.12 L24.14,10.16 L24.53,10.19 L24.92,10.21 L25.30,10.21 L25.66,10.19 L26.02,10.15 L26.38,10.10 L26.72,10.02 L27.07,9.93 L27.41,9.82 L27.74,9.68 L28.08,9.53 L28.41,9.36 L28.75,9.16 L29.09,8.96 L29.43,8.73 L29.78,8.49 L30.13,8.24 L30.49,7.98 L30.85,7.71 L31.23,7.43 L31.61,7.16Z" transform="translate(2,2.5)" fill="#200410" opacity="0.85" filter="url(#kb0)"/>
<path d="M32.00,6.89 L32.40,6.63 L32.80,6.40 L33.22,6.22 L33.63,6.10 L34.04,6.08 L34.44,6.17 L34.83,6.36 L35.21,6.61 L35.57,6.91 L35.92,7.22 L36.27,7.55 L36.60,7.88 L36.93,8.21 L37.25,8.53 L37.56,8.84 L37.87,9.15 L38.17,9.44 L38.48,9.71 L38.78,9.97 L39.08,10.21 L39.39,10.43 L39.69,10.63 L40.01,10.81 L40.32,10.98 L40.65,11.12 L40.98,11.25 L41.32,11.35 L41.67,11.44 L42.04,11.52 L42.41,11.57 L42.79,11.62 L43.19,11.65 L43.60,11.67 L44.02,11.68 L44.45,11.68 L44.90,11.68 L45.35,11.67 L45.81,11.67 L46.28,11.67 L46.76,11.69 L47.23,11.71 L47.70,11.77 L48.14,11.86 L48.54,12.00 L48.89,12.23 L49.16,12.54 L49.36,12.92 L49.52,13.35 L49.64,13.80 L49.74,14.26 L49.82,14.73 L49.90,15.19 L49.97,15.65 L50.04,16.10 L50.11,16.53 L50.18,16.96 L50.26,17.37 L50.34,17.77 L50.43,18.16 L50.54,18.53 L50.66,18.89 L50.79,19.23 L50.93,19.56 L51.09,19.88 L51.27,20.19 L51.46,20.49 L51.68,20.78 L51.91,21.05 L52.16,21.33 L52.43,21.59 L52.71,21.85 L53.02,22.11 L53.34,22.37 L53.67,22.62 L54.02,22.88 L54.38,23.14 L54.75,23.40 L55.12,23.67 L55.50,23.95 L55.88,24.24 L56.25,24.54 L56.59,24.86 L56.90,25.19 L57.14,25.55 L57.28,25.93 L57.32,26.34 L57.26,26.77 L57.14,27.20 L56.97,27.64 L56.78,28.08 L56.57,28.50 L56.36,28.92 L56.15,29.33 L55.94,29.74 L55.74,30.13 L55.55,30.52 L55.37,30.90 L55.20,31.27 L55.05,31.64 L54.92,32.00 L54.80,32.36 L54.70,32.71 L54.62,33.07 L54.57,33.42 L54.53,33.77 L54.51,34.13 L54.52,34.49 L54.54,34.85 L54.58,35.21 L54.64,35.59 L54.72,35.97 L54.82,36.35 L54.92,36.75 L55.04,37.15 L55.17,37.56 L55.31,37.99 L55.46,38.42 L55.60,38.86 L55.74,39.30 L55.88,39.76 L56.00,40.22 L56.09,40.67 L56.15,41.12 L56.13,41.55 L56.02,41.95 L55.81,42.30 L55.51,42.62 L55.15,42.90 L54.76,43.15 L54.35,43.39 L53.94,43.61 L53.52,43.83 L53.10,44.04 L52.70,44.24 L52.30,44.44 L51.92,44.64 L51.55,44.84 L51.20,45.05 L50.86,45.26 L50.54,45.47 L50.23,45.69 L49.95,45.92 L49.68,46.16 L49.42,46.41 L49.19,46.68 L48.96,46.95 L48.76,47.25 L48.56,47.55 L48.38,47.87 L48.21,48.21 L48.05,48.56 L47.90,48.93 L47.75,49.31 L47.61,49.71 L47.48,50.12 L47.34,50.55 L47.20,50.98 L47.06,51.42 L46.92,51.87 L46.76,52.31 L46.59,52.76 L46.39,53.18 L46.17,53.57 L45.91,53.91 L45.58,54.17 L45.21,54.33 L44.78,54.41 L44.33,54.42 L43.86,54.40 L43.39,54.35 L42.92,54.29 L42.46,54.22 L42.00,54.14 L41.55,54.07 L41.11,54.00 L40.69,53.94 L40.27,53.88 L39.86,53.84 L39.47,53.81 L39.08,53.79 L38.70,53.79 L38.34,53.81 L37.98,53.85 L37.62,53.90 L37.28,53.98 L36.93,54.07 L36.59,54.18 L36.26,54.32 L35.92,54.47 L35.59,54.64 L35.25,54.84 L34.91,55.04 L34.57,55.27 L34.22,55.51 L33.87,55.76 L33.51,56.02 L33.15,56.29 L32.77,56.57 L32.39,56.84 L32.00,57.11 L31.60,57.37 L31.20,57.60 L30.78,57.78 L30.37,57.90 L29.96,57.92 L29.56,57.83 L29.17,57.64 L28.79,57.39 L28.43,57.09 L28.08,56.78 L27.73,56.45 L27.40,56.12 L27.07,55.79 L26.75,55.47 L26.44,55.16 L26.13,54.85 L25.83,54.56 L25.52,54.29 L25.22,54.03 L24.92,53.79 L24.61,53.57 L24.31,53.37 L23.99,53.19 L23.68,53.02 L23.35,52.88 L23.02,52.75 L22.68,52.65 L22.33,52.56 L21.96,52.48 L21.59,52.43 L21.21,52.38 L20.81,52.35 L20.40,52.33 L19.98,52.32 L19.55,52.32 L19.10,52.32 L18.65,52.33 L18.19,52.33 L17.72,52.33 L17.24,52.31 L16.77,52.29 L16.30,52.23 L15.86,52.14 L15.46,52.00 L15.11,51.77 L14.84,51.46 L14.64,51.08 L14.48,50.65 L14.36,50.20 L14.26,49.74 L14.18,49.27 L14.10,48.81 L14.03,48.35 L13.96,47.90 L13.89,47.47 L13.82,47.04 L13.74,46.63 L13.66,46.23 L13.57,45.84 L13.46,45.47 L13.34,45.11 L13.21,44.77 L13.07,44.44 L12.91,44.12 L12.73,43.81 L12.54,43.51 L12.32,43.22 L12.09,42.95 L11.84,42.67 L11.57,42.41 L11.29,42.15 L10.98,41.89 L10.66,41.63 L10.33,41.38 L9.98,41.12 L9.62,40.86 L9.25,40.60 L8.88,40.33 L8.50,40.05 L8.12,39.76 L7.75,39.46 L7.41,39.14 L7.10,38.81 L6.86,38.45 L6.72,38.07 L6.68,37.66 L6.74,37.23 L6.86,36.80 L7.03,36.36 L7.22,35.92 L7.43,35.50 L7.64,35.08 L7.85,34.67 L8.06,34.26 L8.26,33.87 L8.45,33.48 L8.63,33.10 L8.80,32.73 L8.95,32.36 L9.08,32.00 L9.20,31.64 L9.30,31.29 L9.38,30.93 L9.43,30.58 L9.47,30.23 L9.49,29.87 L9.48,29.51 L9.46,29.15 L9.42,28.79 L9.36,28.41 L9.28,28.03 L9.18,27.65 L9.08,27.25 L8.96,26.85 L8.83,26.44 L8.69,26.01 L8.54,25.58 L8.40,25.14 L8.26,24.70 L8.12,24.24 L8.00,23.78 L7.91,23.33 L7.85,22.88 L7.87,22.45 L7.98,22.05 L8.19,21.70 L8.49,21.38 L8.85,21.10 L9.24,20.85 L9.65,20.61 L10.06,20.39 L10.48,20.17 L10.90,19.96 L11.30,19.76 L11.70,19.56 L12.08,19.36 L12.45,19.16 L12.80,18.95 L13.14,18.74 L13.46,18.53 L13.77,18.31 L14.05,18.08 L14.32,17.84 L14.58,17.59 L14.81,17.32 L15.04,17.05 L15.24,16.75 L15.44,16.45 L15.62,16.13 L15.79,15.79 L15.95,15.44 L16.10,15.07 L16.25,14.69 L16.39,14.29 L16.52,13.88 L16.66,13.45 L16.80,13.02 L16.94,12.58 L17.08,12.13 L17.24,11.69 L17.41,11.24 L17.61,10.82 L17.83,10.43 L18.09,10.09 L18.42,9.83 L18.79,9.67 L19.22,9.59 L19.67,9.58 L20.14,9.60 L20.61,9.65 L21.08,9.71 L21.54,9.78 L22.00,9.86 L22.45,9.93 L22.89,10.00 L23.31,10.06 L23.73,10.12 L24.14,10.16 L24.53,10.19 L24.92,10.21 L25.30,10.21 L25.66,10.19 L26.02,10.15 L26.38,10.10 L26.72,10.02 L27.07,9.93 L27.41,9.82 L27.74,9.68 L28.08,9.53 L28.41,9.36 L28.75,9.16 L29.09,8.96 L29.43,8.73 L29.78,8.49 L30.13,8.24 L30.49,7.98 L30.85,7.71 L31.23,7.43 L31.61,7.16Z" fill="url(#kg0)"/>
<g clip-path="url(#kc0)"><path d="M32.00,6.89 L32.40,6.63 L32.80,6.40 L33.22,6.22 L33.63,6.10 L34.04,6.08 L34.44,6.17 L34.83,6.36 L35.21,6.61 L35.57,6.91 L35.92,7.22 L36.27,7.55 L36.60,7.88 L36.93,8.21 L37.25,8.53 L37.56,8.84 L37.87,9.15 L38.17,9.44 L38.48,9.71 L38.78,9.97 L39.08,10.21 L39.39,10.43 L39.69,10.63 L40.01,10.81 L40.32,10.98 L40.65,11.12 L40.98,11.25 L41.32,11.35 L41.67,11.44 L42.04,11.52 L42.41,11.57 L42.79,11.62 L43.19,11.65 L43.60,11.67 L44.02,11.68 L44.45,11.68 L44.90,11.68 L45.35,11.67 L45.81,11.67 L46.28,11.67 L46.76,11.69 L47.23,11.71 L47.70,11.77 L48.14,11.86 L48.54,12.00 L48.89,12.23 L49.16,12.54 L49.36,12.92 L49.52,13.35 L49.64,13.80 L49.74,14.26 L49.82,14.73 L49.90,15.19 L49.97,15.65 L50.04,16.10 L50.11,16.53 L50.18,16.96 L50.26,17.37 L50.34,17.77 L50.43,18.16 L50.54,18.53 L50.66,18.89 L50.79,19.23 L50.93,19.56 L51.09,19.88 L51.27,20.19 L51.46,20.49 L51.68,20.78 L51.91,21.05 L52.16,21.33 L52.43,21.59 L52.71,21.85 L53.02,22.11 L53.34,22.37 L53.67,22.62 L54.02,22.88 L54.38,23.14 L54.75,23.40 L55.12,23.67 L55.50,23.95 L55.88,24.24 L56.25,24.54 L56.59,24.86 L56.90,25.19 L57.14,25.55 L57.28,25.93 L57.32,26.34 L57.26,26.77 L57.14,27.20 L56.97,27.64 L56.78,28.08 L56.57,28.50 L56.36,28.92 L56.15,29.33 L55.94,29.74 L55.74,30.13 L55.55,30.52 L55.37,30.90 L55.20,31.27 L55.05,31.64 L54.92,32.00 L54.80,32.36 L54.70,32.71 L54.62,33.07 L54.57,33.42 L54.53,33.77 L54.51,34.13 L54.52,34.49 L54.54,34.85 L54.58,35.21 L54.64,35.59 L54.72,35.97 L54.82,36.35 L54.92,36.75 L55.04,37.15 L55.17,37.56 L55.31,37.99 L55.46,38.42 L55.60,38.86 L55.74,39.30 L55.88,39.76 L56.00,40.22 L56.09,40.67 L56.15,41.12 L56.13,41.55 L56.02,41.95 L55.81,42.30 L55.51,42.62 L55.15,42.90 L54.76,43.15 L54.35,43.39 L53.94,43.61 L53.52,43.83 L53.10,44.04 L52.70,44.24 L52.30,44.44 L51.92,44.64 L51.55,44.84 L51.20,45.05 L50.86,45.26 L50.54,45.47 L50.23,45.69 L49.95,45.92 L49.68,46.16 L49.42,46.41 L49.19,46.68 L48.96,46.95 L48.76,47.25 L48.56,47.55 L48.38,47.87 L48.21,48.21 L48.05,48.56 L47.90,48.93 L47.75,49.31 L47.61,49.71 L47.48,50.12 L47.34,50.55 L47.20,50.98 L47.06,51.42 L46.92,51.87 L46.76,52.31 L46.59,52.76 L46.39,53.18 L46.17,53.57 L45.91,53.91 L45.58,54.17 L45.21,54.33 L44.78,54.41 L44.33,54.42 L43.86,54.40 L43.39,54.35 L42.92,54.29 L42.46,54.22 L42.00,54.14 L41.55,54.07 L41.11,54.00 L40.69,53.94 L40.27,53.88 L39.86,53.84 L39.47,53.81 L39.08,53.79 L38.70,53.79 L38.34,53.81 L37.98,53.85 L37.62,53.90 L37.28,53.98 L36.93,54.07 L36.59,54.18 L36.26,54.32 L35.92,54.47 L35.59,54.64 L35.25,54.84 L34.91,55.04 L34.57,55.27 L34.22,55.51 L33.87,55.76 L33.51,56.02 L33.15,56.29 L32.77,56.57 L32.39,56.84 L32.00,57.11 L31.60,57.37 L31.20,57.60 L30.78,57.78 L30.37,57.90 L29.96,57.92 L29.56,57.83 L29.17,57.64 L28.79,57.39 L28.43,57.09 L28.08,56.78 L27.73,56.45 L27.40,56.12 L27.07,55.79 L26.75,55.47 L26.44,55.16 L26.13,54.85 L25.83,54.56 L25.52,54.29 L25.22,54.03 L24.92,53.79 L24.61,53.57 L24.31,53.37 L23.99,53.19 L23.68,53.02 L23.35,52.88 L23.02,52.75 L22.68,52.65 L22.33,52.56 L21.96,52.48 L21.59,52.43 L21.21,52.38 L20.81,52.35 L20.40,52.33 L19.98,52.32 L19.55,52.32 L19.10,52.32 L18.65,52.33 L18.19,52.33 L17.72,52.33 L17.24,52.31 L16.77,52.29 L16.30,52.23 L15.86,52.14 L15.46,52.00 L15.11,51.77 L14.84,51.46 L14.64,51.08 L14.48,50.65 L14.36,50.20 L14.26,49.74 L14.18,49.27 L14.10,48.81 L14.03,48.35 L13.96,47.90 L13.89,47.47 L13.82,47.04 L13.74,46.63 L13.66,46.23 L13.57,45.84 L13.46,45.47 L13.34,45.11 L13.21,44.77 L13.07,44.44 L12.91,44.12 L12.73,43.81 L12.54,43.51 L12.32,43.22 L12.09,42.95 L11.84,42.67 L11.57,42.41 L11.29,42.15 L10.98,41.89 L10.66,41.63 L10.33,41.38 L9.98,41.12 L9.62,40.86 L9.25,40.60 L8.88,40.33 L8.50,40.05 L8.12,39.76 L7.75,39.46 L7.41,39.14 L7.10,38.81 L6.86,38.45 L6.72,38.07 L6.68,37.66 L6.74,37.23 L6.86,36.80 L7.03,36.36 L7.22,35.92 L7.43,35.50 L7.64,35.08 L7.85,34.67 L8.06,34.26 L8.26,33.87 L8.45,33.48 L8.63,33.10 L8.80,32.73 L8.95,32.36 L9.08,32.00 L9.20,31.64 L9.30,31.29 L9.38,30.93 L9.43,30.58 L9.47,30.23 L9.49,29.87 L9.48,29.51 L9.46,29.15 L9.42,28.79 L9.36,28.41 L9.28,28.03 L9.18,27.65 L9.08,27.25 L8.96,26.85 L8.83,26.44 L8.69,26.01 L8.54,25.58 L8.40,25.14 L8.26,24.70 L8.12,24.24 L8.00,23.78 L7.91,23.33 L7.85,22.88 L7.87,22.45 L7.98,22.05 L8.19,21.70 L8.49,21.38 L8.85,21.10 L9.24,20.85 L9.65,20.61 L10.06,20.39 L10.48,20.17 L10.90,19.96 L11.30,19.76 L11.70,19.56 L12.08,19.36 L12.45,19.16 L12.80,18.95 L13.14,18.74 L13.46,18.53 L13.77,18.31 L14.05,18.08 L14.32,17.84 L14.58,17.59 L14.81,17.32 L15.04,17.05 L15.24,16.75 L15.44,16.45 L15.62,16.13 L15.79,15.79 L15.95,15.44 L16.10,15.07 L16.25,14.69 L16.39,14.29 L16.52,13.88 L16.66,13.45 L16.80,13.02 L16.94,12.58 L17.08,12.13 L17.24,11.69 L17.41,11.24 L17.61,10.82 L17.83,10.43 L18.09,10.09 L18.42,9.83 L18.79,9.67 L19.22,9.59 L19.67,9.58 L20.14,9.60 L20.61,9.65 L21.08,9.71 L21.54,9.78 L22.00,9.86 L22.45,9.93 L22.89,10.00 L23.31,10.06 L23.73,10.12 L24.14,10.16 L24.53,10.19 L24.92,10.21 L25.30,10.21 L25.66,10.19 L26.02,10.15 L26.38,10.10 L26.72,10.02 L27.07,9.93 L27.41,9.82 L27.74,9.68 L28.08,9.53 L28.41,9.36 L28.75,9.16 L29.09,8.96 L29.43,8.73 L29.78,8.49 L30.13,8.24 L30.49,7.98 L30.85,7.71 L31.23,7.43 L31.61,7.16Z" fill="none" stroke="url(#kh0)" stroke-width="4"/><path d="M32.00,6.89 L32.40,6.63 L32.80,6.40 L33.22,6.22 L33.63,6.10 L34.04,6.08 L34.44,6.17 L34.83,6.36 L35.21,6.61 L35.57,6.91 L35.92,7.22 L36.27,7.55 L36.60,7.88 L36.93,8.21 L37.25,8.53 L37.56,8.84 L37.87,9.15 L38.17,9.44 L38.48,9.71 L38.78,9.97 L39.08,10.21 L39.39,10.43 L39.69,10.63 L40.01,10.81 L40.32,10.98 L40.65,11.12 L40.98,11.25 L41.32,11.35 L41.67,11.44 L42.04,11.52 L42.41,11.57 L42.79,11.62 L43.19,11.65 L43.60,11.67 L44.02,11.68 L44.45,11.68 L44.90,11.68 L45.35,11.67 L45.81,11.67 L46.28,11.67 L46.76,11.69 L47.23,11.71 L47.70,11.77 L48.14,11.86 L48.54,12.00 L48.89,12.23 L49.16,12.54 L49.36,12.92 L49.52,13.35 L49.64,13.80 L49.74,14.26 L49.82,14.73 L49.90,15.19 L49.97,15.65 L50.04,16.10 L50.11,16.53 L50.18,16.96 L50.26,17.37 L50.34,17.77 L50.43,18.16 L50.54,18.53 L50.66,18.89 L50.79,19.23 L50.93,19.56 L51.09,19.88 L51.27,20.19 L51.46,20.49 L51.68,20.78 L51.91,21.05 L52.16,21.33 L52.43,21.59 L52.71,21.85 L53.02,22.11 L53.34,22.37 L53.67,22.62 L54.02,22.88 L54.38,23.14 L54.75,23.40 L55.12,23.67 L55.50,23.95 L55.88,24.24 L56.25,24.54 L56.59,24.86 L56.90,25.19 L57.14,25.55 L57.28,25.93 L57.32,26.34 L57.26,26.77 L57.14,27.20 L56.97,27.64 L56.78,28.08 L56.57,28.50 L56.36,28.92 L56.15,29.33 L55.94,29.74 L55.74,30.13 L55.55,30.52 L55.37,30.90 L55.20,31.27 L55.05,31.64 L54.92,32.00 L54.80,32.36 L54.70,32.71 L54.62,33.07 L54.57,33.42 L54.53,33.77 L54.51,34.13 L54.52,34.49 L54.54,34.85 L54.58,35.21 L54.64,35.59 L54.72,35.97 L54.82,36.35 L54.92,36.75 L55.04,37.15 L55.17,37.56 L55.31,37.99 L55.46,38.42 L55.60,38.86 L55.74,39.30 L55.88,39.76 L56.00,40.22 L56.09,40.67 L56.15,41.12 L56.13,41.55 L56.02,41.95 L55.81,42.30 L55.51,42.62 L55.15,42.90 L54.76,43.15 L54.35,43.39 L53.94,43.61 L53.52,43.83 L53.10,44.04 L52.70,44.24 L52.30,44.44 L51.92,44.64 L51.55,44.84 L51.20,45.05 L50.86,45.26 L50.54,45.47 L50.23,45.69 L49.95,45.92 L49.68,46.16 L49.42,46.41 L49.19,46.68 L48.96,46.95 L48.76,47.25 L48.56,47.55 L48.38,47.87 L48.21,48.21 L48.05,48.56 L47.90,48.93 L47.75,49.31 L47.61,49.71 L47.48,50.12 L47.34,50.55 L47.20,50.98 L47.06,51.42 L46.92,51.87 L46.76,52.31 L46.59,52.76 L46.39,53.18 L46.17,53.57 L45.91,53.91 L45.58,54.17 L45.21,54.33 L44.78,54.41 L44.33,54.42 L43.86,54.40 L43.39,54.35 L42.92,54.29 L42.46,54.22 L42.00,54.14 L41.55,54.07 L41.11,54.00 L40.69,53.94 L40.27,53.88 L39.86,53.84 L39.47,53.81 L39.08,53.79 L38.70,53.79 L38.34,53.81 L37.98,53.85 L37.62,53.90 L37.28,53.98 L36.93,54.07 L36.59,54.18 L36.26,54.32 L35.92,54.47 L35.59,54.64 L35.25,54.84 L34.91,55.04 L34.57,55.27 L34.22,55.51 L33.87,55.76 L33.51,56.02 L33.15,56.29 L32.77,56.57 L32.39,56.84 L32.00,57.11 L31.60,57.37 L31.20,57.60 L30.78,57.78 L30.37,57.90 L29.96,57.92 L29.56,57.83 L29.17,57.64 L28.79,57.39 L28.43,57.09 L28.08,56.78 L27.73,56.45 L27.40,56.12 L27.07,55.79 L26.75,55.47 L26.44,55.16 L26.13,54.85 L25.83,54.56 L25.52,54.29 L25.22,54.03 L24.92,53.79 L24.61,53.57 L24.31,53.37 L23.99,53.19 L23.68,53.02 L23.35,52.88 L23.02,52.75 L22.68,52.65 L22.33,52.56 L21.96,52.48 L21.59,52.43 L21.21,52.38 L20.81,52.35 L20.40,52.33 L19.98,52.32 L19.55,52.32 L19.10,52.32 L18.65,52.33 L18.19,52.33 L17.72,52.33 L17.24,52.31 L16.77,52.29 L16.30,52.23 L15.86,52.14 L15.46,52.00 L15.11,51.77 L14.84,51.46 L14.64,51.08 L14.48,50.65 L14.36,50.20 L14.26,49.74 L14.18,49.27 L14.10,48.81 L14.03,48.35 L13.96,47.90 L13.89,47.47 L13.82,47.04 L13.74,46.63 L13.66,46.23 L13.57,45.84 L13.46,45.47 L13.34,45.11 L13.21,44.77 L13.07,44.44 L12.91,44.12 L12.73,43.81 L12.54,43.51 L12.32,43.22 L12.09,42.95 L11.84,42.67 L11.57,42.41 L11.29,42.15 L10.98,41.89 L10.66,41.63 L10.33,41.38 L9.98,41.12 L9.62,40.86 L9.25,40.60 L8.88,40.33 L8.50,40.05 L8.12,39.76 L7.75,39.46 L7.41,39.14 L7.10,38.81 L6.86,38.45 L6.72,38.07 L6.68,37.66 L6.74,37.23 L6.86,36.80 L7.03,36.36 L7.22,35.92 L7.43,35.50 L7.64,35.08 L7.85,34.67 L8.06,34.26 L8.26,33.87 L8.45,33.48 L8.63,33.10 L8.80,32.73 L8.95,32.36 L9.08,32.00 L9.20,31.64 L9.30,31.29 L9.38,30.93 L9.43,30.58 L9.47,30.23 L9.49,29.87 L9.48,29.51 L9.46,29.15 L9.42,28.79 L9.36,28.41 L9.28,28.03 L9.18,27.65 L9.08,27.25 L8.96,26.85 L8.83,26.44 L8.69,26.01 L8.54,25.58 L8.40,25.14 L8.26,24.70 L8.12,24.24 L8.00,23.78 L7.91,23.33 L7.85,22.88 L7.87,22.45 L7.98,22.05 L8.19,21.70 L8.49,21.38 L8.85,21.10 L9.24,20.85 L9.65,20.61 L10.06,20.39 L10.48,20.17 L10.90,19.96 L11.30,19.76 L11.70,19.56 L12.08,19.36 L12.45,19.16 L12.80,18.95 L13.14,18.74 L13.46,18.53 L13.77,18.31 L14.05,18.08 L14.32,17.84 L14.58,17.59 L14.81,17.32 L15.04,17.05 L15.24,16.75 L15.44,16.45 L15.62,16.13 L15.79,15.79 L15.95,15.44 L16.10,15.07 L16.25,14.69 L16.39,14.29 L16.52,13.88 L16.66,13.45 L16.80,13.02 L16.94,12.58 L17.08,12.13 L17.24,11.69 L17.41,11.24 L17.61,10.82 L17.83,10.43 L18.09,10.09 L18.42,9.83 L18.79,9.67 L19.22,9.59 L19.67,9.58 L20.14,9.60 L20.61,9.65 L21.08,9.71 L21.54,9.78 L22.00,9.86 L22.45,9.93 L22.89,10.00 L23.31,10.06 L23.73,10.12 L24.14,10.16 L24.53,10.19 L24.92,10.21 L25.30,10.21 L25.66,10.19 L26.02,10.15 L26.38,10.10 L26.72,10.02 L27.07,9.93 L27.41,9.82 L27.74,9.68 L28.08,9.53 L28.41,9.36 L28.75,9.16 L29.09,8.96 L29.43,8.73 L29.78,8.49 L30.13,8.24 L30.49,7.98 L30.85,7.71 L31.23,7.43 L31.61,7.16Z" fill="none" stroke="url(#kd0)" stroke-width="3"/>
<circle cx="33" cy="33.5" r="19" fill="#500010" opacity="0.75" filter="url(#ke0)"/></g>
</svg>
<div style="left:794.5px;top:204.5px;width:35px;height:35px;border-radius:50%;background:conic-gradient(from 0deg,#b4b4b6 0deg,#e0e0e0 40deg,#d8e2ec 80deg,#88a8d0 130deg,#c4d8ee 175deg,#9cacbe 215deg,#6a7078 268deg,#808286 312deg,#b4b4b6 360deg);box-shadow:inset -1px -1px 0 0.2px rgba(255,255,255,0.7),inset 1px 1px 0 0 rgba(70,70,80,0.6),0 0 0 0.5px rgba(60,0,0,0.5)"></div>
<div style="left:795.3px;top:236.8px;width:4.4px;height:4.4px;border-radius:50%;background:#fff;box-shadow:0 0 0 0.8px #333"></div>
<svg style="left:780px;top:254px" width="64" height="64" viewBox="0 0 64 64"><defs>
<linearGradient id="ko1" x1="0.15" y1="0.1" x2="0.85" y2="0.9"><stop offset="0" stop-color="#dc5a64"/><stop offset="0.35" stop-color="#c43442"/><stop offset="0.58" stop-color="#9c1c32"/><stop offset="0.76" stop-color="#6c1a3a"/><stop offset="0.9" stop-color="#383a84"/><stop offset="1" stop-color="#1a52b4"/></linearGradient>
<radialGradient id="kr1" cx="0.5" cy="0.5" r="0.5"><stop offset="0.62" stop-color="#400008" stop-opacity="0.35"/><stop offset="0.8" stop-color="#400008" stop-opacity="0.05"/><stop offset="0.9" stop-color="#ff9090" stop-opacity="0.06"/><stop offset="1" stop-color="#400008" stop-opacity="0.3"/></radialGradient>
<linearGradient id="kg1" x1="0.2" y1="0.08" x2="0.8" y2="0.92"><stop offset="0" stop-color="#ff7c7c"/><stop offset="0.28" stop-color="#f03c46"/><stop offset="0.5" stop-color="#d41c2c"/><stop offset="0.72" stop-color="#a00e20"/><stop offset="1" stop-color="#4c0616"/></linearGradient>
<linearGradient id="kh1" x1="0.1" y1="0.1" x2="0.7" y2="0.7"><stop offset="0" stop-color="#ffb0b0" stop-opacity="0.9"/><stop offset="0.6" stop-color="#ff9090" stop-opacity="0"/></linearGradient>
<linearGradient id="kd1" x1="0.3" y1="0.3" x2="0.9" y2="0.9"><stop offset="0.4" stop-color="#400010" stop-opacity="0"/><stop offset="1" stop-color="#400010" stop-opacity="0.8"/></linearGradient>
<clipPath id="kc1"><path d="M32.00,8.40 L32.37,8.60 L32.73,8.79 L33.09,8.97 L33.44,9.12 L33.79,9.26 L34.14,9.38 L34.49,9.48 L34.83,9.57 L35.18,9.63 L35.54,9.67 L35.89,9.69 L36.26,9.69 L36.62,9.67 L37.00,9.63 L37.38,9.58 L37.77,9.51 L38.17,9.43 L38.58,9.34 L39.00,9.23 L39.43,9.12 L39.87,9.01 L40.32,8.89 L40.78,8.77 L41.24,8.67 L41.70,8.57 L42.17,8.51 L42.62,8.48 L43.05,8.52 L43.44,8.65 L43.78,8.88 L44.08,9.19 L44.33,9.57 L44.56,9.97 L44.78,10.40 L44.98,10.83 L45.16,11.26 L45.35,11.68 L45.52,12.10 L45.70,12.51 L45.87,12.90 L46.05,13.29 L46.23,13.65 L46.42,14.00 L46.61,14.34 L46.81,14.66 L47.02,14.96 L47.25,15.25 L47.48,15.52 L47.73,15.77 L47.99,16.01 L48.27,16.24 L48.56,16.45 L48.87,16.65 L49.19,16.84 L49.53,17.03 L49.89,17.20 L50.26,17.37 L50.65,17.53 L51.05,17.70 L51.46,17.86 L51.89,18.02 L52.32,18.19 L52.75,18.37 L53.19,18.55 L53.62,18.75 L54.03,18.97 L54.41,19.22 L54.74,19.50 L54.98,19.83 L55.12,20.22 L55.17,20.65 L55.16,21.10 L55.11,21.56 L55.04,22.03 L54.94,22.50 L54.84,22.96 L54.74,23.41 L54.64,23.85 L54.54,24.28 L54.45,24.71 L54.37,25.12 L54.30,25.52 L54.24,25.92 L54.20,26.30 L54.18,26.68 L54.17,27.04 L54.18,27.41 L54.21,27.76 L54.26,28.11 L54.33,28.46 L54.43,28.81 L54.54,29.15 L54.67,29.50 L54.82,29.84 L54.99,30.19 L55.17,30.54 L55.37,30.90 L55.59,31.26 L55.82,31.63 L56.06,32.00 L56.30,32.38 L56.55,32.77 L56.80,33.17 L57.05,33.58 L57.28,33.99 L57.48,34.41 L57.65,34.83 L57.74,35.25 L57.74,35.66 L57.63,36.06 L57.42,36.44 L57.15,36.80 L56.83,37.14 L56.50,37.48 L56.15,37.80 L55.80,38.11 L55.45,38.41 L55.10,38.71 L54.77,39.01 L54.45,39.29 L54.14,39.58 L53.85,39.87 L53.57,40.15 L53.31,40.44 L53.07,40.73 L52.85,41.02 L52.65,41.32 L52.46,41.63 L52.30,41.94 L52.15,42.27 L52.02,42.60 L51.91,42.94 L51.81,43.30 L51.73,43.67 L51.66,44.05 L51.60,44.44 L51.56,44.85 L51.52,45.27 L51.49,45.70 L51.46,46.14 L51.44,46.59 L51.41,47.06 L51.38,47.52 L51.34,48.00 L51.28,48.47 L51.20,48.93 L51.08,49.37 L50.91,49.76 L50.67,50.09 L50.35,50.35 L49.96,50.53 L49.53,50.66 L49.07,50.76 L48.60,50.83 L48.13,50.88 L47.66,50.93 L47.20,50.97 L46.75,51.01 L46.30,51.05 L45.87,51.10 L45.46,51.15 L45.05,51.21 L44.66,51.27 L44.28,51.35 L43.92,51.45 L43.56,51.55 L43.22,51.68 L42.89,51.82 L42.58,51.97 L42.27,52.15 L41.97,52.34 L41.67,52.55 L41.38,52.79 L41.10,53.03 L40.82,53.30 L40.55,53.59 L40.27,53.89 L39.99,54.21 L39.72,54.54 L39.43,54.88 L39.15,55.23 L38.85,55.59 L38.55,55.95 L38.24,56.31 L37.92,56.66 L37.58,56.98 L37.23,57.27 L36.86,57.49 L36.47,57.61 L36.06,57.63 L35.64,57.55 L35.21,57.40 L34.78,57.21 L34.36,56.99 L33.95,56.76 L33.54,56.52 L33.15,56.28 L32.76,56.05 L32.37,55.82 L32.00,55.60 L31.63,55.40 L31.27,55.21 L30.91,55.03 L30.56,54.88 L30.21,54.74 L29.86,54.62 L29.51,54.52 L29.17,54.43 L28.82,54.37 L28.46,54.33 L28.11,54.31 L27.74,54.31 L27.38,54.33 L27.00,54.37 L26.62,54.42 L26.23,54.49 L25.83,54.57 L25.42,54.66 L25.00,54.77 L24.57,54.88 L24.13,54.99 L23.68,55.11 L23.22,55.23 L22.76,55.33 L22.30,55.43 L21.83,55.49 L21.38,55.52 L20.95,55.48 L20.56,55.35 L20.22,55.12 L19.92,54.81 L19.67,54.43 L19.44,54.03 L19.22,53.60 L19.02,53.17 L18.84,52.74 L18.65,52.32 L18.48,51.90 L18.30,51.49 L18.13,51.10 L17.95,50.71 L17.77,50.35 L17.58,50.00 L17.39,49.66 L17.19,49.34 L16.98,49.04 L16.75,48.75 L16.52,48.48 L16.27,48.23 L16.01,47.99 L15.73,47.76 L15.44,47.55 L15.13,47.35 L14.81,47.16 L14.47,46.97 L14.11,46.80 L13.74,46.63 L13.35,46.47 L12.95,46.30 L12.54,46.14 L12.11,45.98 L11.68,45.81 L11.25,45.63 L10.81,45.45 L10.38,45.25 L9.97,45.03 L9.59,44.78 L9.26,44.50 L9.02,44.17 L8.88,43.78 L8.83,43.35 L8.84,42.90 L8.89,42.44 L8.96,41.97 L9.06,41.50 L9.16,41.04 L9.26,40.59 L9.36,40.15 L9.46,39.72 L9.55,39.29 L9.63,38.88 L9.70,38.48 L9.76,38.08 L9.80,37.70 L9.82,37.32 L9.83,36.96 L9.82,36.59 L9.79,36.24 L9.74,35.89 L9.67,35.54 L9.57,35.19 L9.46,34.85 L9.33,34.50 L9.18,34.16 L9.01,33.81 L8.83,33.46 L8.63,33.10 L8.41,32.74 L8.18,32.37 L7.94,32.00 L7.70,31.62 L7.45,31.23 L7.20,30.83 L6.95,30.42 L6.72,30.01 L6.52,29.59 L6.35,29.17 L6.26,28.75 L6.26,28.34 L6.37,27.94 L6.58,27.56 L6.85,27.20 L7.17,26.86 L7.50,26.52 L7.85,26.20 L8.20,25.89 L8.55,25.59 L8.90,25.29 L9.23,24.99 L9.55,24.71 L9.86,24.42 L10.15,24.13 L10.43,23.85 L10.69,23.56 L10.93,23.27 L11.15,22.98 L11.35,22.68 L11.54,22.37 L11.70,22.06 L11.85,21.73 L11.98,21.40 L12.09,21.06 L12.19,20.70 L12.27,20.33 L12.34,19.95 L12.40,19.56 L12.44,19.15 L12.48,18.73 L12.51,18.30 L12.54,17.86 L12.56,17.41 L12.59,16.94 L12.62,16.48 L12.66,16.00 L12.72,15.53 L12.80,15.07 L12.92,14.63 L13.09,14.24 L13.33,13.91 L13.65,13.65 L14.04,13.47 L14.47,13.34 L14.93,13.24 L15.40,13.17 L15.87,13.12 L16.34,13.07 L16.80,13.03 L17.25,12.99 L17.70,12.95 L18.13,12.90 L18.54,12.85 L18.95,12.79 L19.34,12.73 L19.72,12.65 L20.08,12.55 L20.44,12.45 L20.78,12.32 L21.11,12.18 L21.42,12.03 L21.73,11.85 L22.03,11.66 L22.33,11.45 L22.62,11.21 L22.90,10.97 L23.18,10.70 L23.45,10.41 L23.73,10.11 L24.01,9.79 L24.28,9.46 L24.57,9.12 L24.85,8.77 L25.15,8.41 L25.45,8.05 L25.76,7.69 L26.08,7.34 L26.42,7.02 L26.77,6.73 L27.14,6.51 L27.53,6.39 L27.94,6.37 L28.36,6.45 L28.79,6.60 L29.22,6.79 L29.64,7.01 L30.05,7.24 L30.46,7.48 L30.85,7.72 L31.24,7.95 L31.63,8.18Z"/></clipPath>
<filter id="kb1" x="-30%" y="-30%" width="160%" height="160%"><feGaussianBlur stdDeviation="1.8"/></filter>
<filter id="ke1" x="-30%" y="-30%" width="160%" height="160%"><feGaussianBlur stdDeviation="1.1"/></filter>
</defs>
<circle cx="32" cy="32" r="31.7" fill="url(#ko1)"/>
<circle cx="32" cy="32" r="31.7" fill="url(#kr1)"/>
<path d="M32.00,8.40 L32.37,8.60 L32.73,8.79 L33.09,8.97 L33.44,9.12 L33.79,9.26 L34.14,9.38 L34.49,9.48 L34.83,9.57 L35.18,9.63 L35.54,9.67 L35.89,9.69 L36.26,9.69 L36.62,9.67 L37.00,9.63 L37.38,9.58 L37.77,9.51 L38.17,9.43 L38.58,9.34 L39.00,9.23 L39.43,9.12 L39.87,9.01 L40.32,8.89 L40.78,8.77 L41.24,8.67 L41.70,8.57 L42.17,8.51 L42.62,8.48 L43.05,8.52 L43.44,8.65 L43.78,8.88 L44.08,9.19 L44.33,9.57 L44.56,9.97 L44.78,10.40 L44.98,10.83 L45.16,11.26 L45.35,11.68 L45.52,12.10 L45.70,12.51 L45.87,12.90 L46.05,13.29 L46.23,13.65 L46.42,14.00 L46.61,14.34 L46.81,14.66 L47.02,14.96 L47.25,15.25 L47.48,15.52 L47.73,15.77 L47.99,16.01 L48.27,16.24 L48.56,16.45 L48.87,16.65 L49.19,16.84 L49.53,17.03 L49.89,17.20 L50.26,17.37 L50.65,17.53 L51.05,17.70 L51.46,17.86 L51.89,18.02 L52.32,18.19 L52.75,18.37 L53.19,18.55 L53.62,18.75 L54.03,18.97 L54.41,19.22 L54.74,19.50 L54.98,19.83 L55.12,20.22 L55.17,20.65 L55.16,21.10 L55.11,21.56 L55.04,22.03 L54.94,22.50 L54.84,22.96 L54.74,23.41 L54.64,23.85 L54.54,24.28 L54.45,24.71 L54.37,25.12 L54.30,25.52 L54.24,25.92 L54.20,26.30 L54.18,26.68 L54.17,27.04 L54.18,27.41 L54.21,27.76 L54.26,28.11 L54.33,28.46 L54.43,28.81 L54.54,29.15 L54.67,29.50 L54.82,29.84 L54.99,30.19 L55.17,30.54 L55.37,30.90 L55.59,31.26 L55.82,31.63 L56.06,32.00 L56.30,32.38 L56.55,32.77 L56.80,33.17 L57.05,33.58 L57.28,33.99 L57.48,34.41 L57.65,34.83 L57.74,35.25 L57.74,35.66 L57.63,36.06 L57.42,36.44 L57.15,36.80 L56.83,37.14 L56.50,37.48 L56.15,37.80 L55.80,38.11 L55.45,38.41 L55.10,38.71 L54.77,39.01 L54.45,39.29 L54.14,39.58 L53.85,39.87 L53.57,40.15 L53.31,40.44 L53.07,40.73 L52.85,41.02 L52.65,41.32 L52.46,41.63 L52.30,41.94 L52.15,42.27 L52.02,42.60 L51.91,42.94 L51.81,43.30 L51.73,43.67 L51.66,44.05 L51.60,44.44 L51.56,44.85 L51.52,45.27 L51.49,45.70 L51.46,46.14 L51.44,46.59 L51.41,47.06 L51.38,47.52 L51.34,48.00 L51.28,48.47 L51.20,48.93 L51.08,49.37 L50.91,49.76 L50.67,50.09 L50.35,50.35 L49.96,50.53 L49.53,50.66 L49.07,50.76 L48.60,50.83 L48.13,50.88 L47.66,50.93 L47.20,50.97 L46.75,51.01 L46.30,51.05 L45.87,51.10 L45.46,51.15 L45.05,51.21 L44.66,51.27 L44.28,51.35 L43.92,51.45 L43.56,51.55 L43.22,51.68 L42.89,51.82 L42.58,51.97 L42.27,52.15 L41.97,52.34 L41.67,52.55 L41.38,52.79 L41.10,53.03 L40.82,53.30 L40.55,53.59 L40.27,53.89 L39.99,54.21 L39.72,54.54 L39.43,54.88 L39.15,55.23 L38.85,55.59 L38.55,55.95 L38.24,56.31 L37.92,56.66 L37.58,56.98 L37.23,57.27 L36.86,57.49 L36.47,57.61 L36.06,57.63 L35.64,57.55 L35.21,57.40 L34.78,57.21 L34.36,56.99 L33.95,56.76 L33.54,56.52 L33.15,56.28 L32.76,56.05 L32.37,55.82 L32.00,55.60 L31.63,55.40 L31.27,55.21 L30.91,55.03 L30.56,54.88 L30.21,54.74 L29.86,54.62 L29.51,54.52 L29.17,54.43 L28.82,54.37 L28.46,54.33 L28.11,54.31 L27.74,54.31 L27.38,54.33 L27.00,54.37 L26.62,54.42 L26.23,54.49 L25.83,54.57 L25.42,54.66 L25.00,54.77 L24.57,54.88 L24.13,54.99 L23.68,55.11 L23.22,55.23 L22.76,55.33 L22.30,55.43 L21.83,55.49 L21.38,55.52 L20.95,55.48 L20.56,55.35 L20.22,55.12 L19.92,54.81 L19.67,54.43 L19.44,54.03 L19.22,53.60 L19.02,53.17 L18.84,52.74 L18.65,52.32 L18.48,51.90 L18.30,51.49 L18.13,51.10 L17.95,50.71 L17.77,50.35 L17.58,50.00 L17.39,49.66 L17.19,49.34 L16.98,49.04 L16.75,48.75 L16.52,48.48 L16.27,48.23 L16.01,47.99 L15.73,47.76 L15.44,47.55 L15.13,47.35 L14.81,47.16 L14.47,46.97 L14.11,46.80 L13.74,46.63 L13.35,46.47 L12.95,46.30 L12.54,46.14 L12.11,45.98 L11.68,45.81 L11.25,45.63 L10.81,45.45 L10.38,45.25 L9.97,45.03 L9.59,44.78 L9.26,44.50 L9.02,44.17 L8.88,43.78 L8.83,43.35 L8.84,42.90 L8.89,42.44 L8.96,41.97 L9.06,41.50 L9.16,41.04 L9.26,40.59 L9.36,40.15 L9.46,39.72 L9.55,39.29 L9.63,38.88 L9.70,38.48 L9.76,38.08 L9.80,37.70 L9.82,37.32 L9.83,36.96 L9.82,36.59 L9.79,36.24 L9.74,35.89 L9.67,35.54 L9.57,35.19 L9.46,34.85 L9.33,34.50 L9.18,34.16 L9.01,33.81 L8.83,33.46 L8.63,33.10 L8.41,32.74 L8.18,32.37 L7.94,32.00 L7.70,31.62 L7.45,31.23 L7.20,30.83 L6.95,30.42 L6.72,30.01 L6.52,29.59 L6.35,29.17 L6.26,28.75 L6.26,28.34 L6.37,27.94 L6.58,27.56 L6.85,27.20 L7.17,26.86 L7.50,26.52 L7.85,26.20 L8.20,25.89 L8.55,25.59 L8.90,25.29 L9.23,24.99 L9.55,24.71 L9.86,24.42 L10.15,24.13 L10.43,23.85 L10.69,23.56 L10.93,23.27 L11.15,22.98 L11.35,22.68 L11.54,22.37 L11.70,22.06 L11.85,21.73 L11.98,21.40 L12.09,21.06 L12.19,20.70 L12.27,20.33 L12.34,19.95 L12.40,19.56 L12.44,19.15 L12.48,18.73 L12.51,18.30 L12.54,17.86 L12.56,17.41 L12.59,16.94 L12.62,16.48 L12.66,16.00 L12.72,15.53 L12.80,15.07 L12.92,14.63 L13.09,14.24 L13.33,13.91 L13.65,13.65 L14.04,13.47 L14.47,13.34 L14.93,13.24 L15.40,13.17 L15.87,13.12 L16.34,13.07 L16.80,13.03 L17.25,12.99 L17.70,12.95 L18.13,12.90 L18.54,12.85 L18.95,12.79 L19.34,12.73 L19.72,12.65 L20.08,12.55 L20.44,12.45 L20.78,12.32 L21.11,12.18 L21.42,12.03 L21.73,11.85 L22.03,11.66 L22.33,11.45 L22.62,11.21 L22.90,10.97 L23.18,10.70 L23.45,10.41 L23.73,10.11 L24.01,9.79 L24.28,9.46 L24.57,9.12 L24.85,8.77 L25.15,8.41 L25.45,8.05 L25.76,7.69 L26.08,7.34 L26.42,7.02 L26.77,6.73 L27.14,6.51 L27.53,6.39 L27.94,6.37 L28.36,6.45 L28.79,6.60 L29.22,6.79 L29.64,7.01 L30.05,7.24 L30.46,7.48 L30.85,7.72 L31.24,7.95 L31.63,8.18Z" transform="translate(2,2.5)" fill="#200410" opacity="0.85" filter="url(#kb1)"/>
<path d="M32.00,8.40 L32.37,8.60 L32.73,8.79 L33.09,8.97 L33.44,9.12 L33.79,9.26 L34.14,9.38 L34.49,9.48 L34.83,9.57 L35.18,9.63 L35.54,9.67 L35.89,9.69 L36.26,9.69 L36.62,9.67 L37.00,9.63 L37.38,9.58 L37.77,9.51 L38.17,9.43 L38.58,9.34 L39.00,9.23 L39.43,9.12 L39.87,9.01 L40.32,8.89 L40.78,8.77 L41.24,8.67 L41.70,8.57 L42.17,8.51 L42.62,8.48 L43.05,8.52 L43.44,8.65 L43.78,8.88 L44.08,9.19 L44.33,9.57 L44.56,9.97 L44.78,10.40 L44.98,10.83 L45.16,11.26 L45.35,11.68 L45.52,12.10 L45.70,12.51 L45.87,12.90 L46.05,13.29 L46.23,13.65 L46.42,14.00 L46.61,14.34 L46.81,14.66 L47.02,14.96 L47.25,15.25 L47.48,15.52 L47.73,15.77 L47.99,16.01 L48.27,16.24 L48.56,16.45 L48.87,16.65 L49.19,16.84 L49.53,17.03 L49.89,17.20 L50.26,17.37 L50.65,17.53 L51.05,17.70 L51.46,17.86 L51.89,18.02 L52.32,18.19 L52.75,18.37 L53.19,18.55 L53.62,18.75 L54.03,18.97 L54.41,19.22 L54.74,19.50 L54.98,19.83 L55.12,20.22 L55.17,20.65 L55.16,21.10 L55.11,21.56 L55.04,22.03 L54.94,22.50 L54.84,22.96 L54.74,23.41 L54.64,23.85 L54.54,24.28 L54.45,24.71 L54.37,25.12 L54.30,25.52 L54.24,25.92 L54.20,26.30 L54.18,26.68 L54.17,27.04 L54.18,27.41 L54.21,27.76 L54.26,28.11 L54.33,28.46 L54.43,28.81 L54.54,29.15 L54.67,29.50 L54.82,29.84 L54.99,30.19 L55.17,30.54 L55.37,30.90 L55.59,31.26 L55.82,31.63 L56.06,32.00 L56.30,32.38 L56.55,32.77 L56.80,33.17 L57.05,33.58 L57.28,33.99 L57.48,34.41 L57.65,34.83 L57.74,35.25 L57.74,35.66 L57.63,36.06 L57.42,36.44 L57.15,36.80 L56.83,37.14 L56.50,37.48 L56.15,37.80 L55.80,38.11 L55.45,38.41 L55.10,38.71 L54.77,39.01 L54.45,39.29 L54.14,39.58 L53.85,39.87 L53.57,40.15 L53.31,40.44 L53.07,40.73 L52.85,41.02 L52.65,41.32 L52.46,41.63 L52.30,41.94 L52.15,42.27 L52.02,42.60 L51.91,42.94 L51.81,43.30 L51.73,43.67 L51.66,44.05 L51.60,44.44 L51.56,44.85 L51.52,45.27 L51.49,45.70 L51.46,46.14 L51.44,46.59 L51.41,47.06 L51.38,47.52 L51.34,48.00 L51.28,48.47 L51.20,48.93 L51.08,49.37 L50.91,49.76 L50.67,50.09 L50.35,50.35 L49.96,50.53 L49.53,50.66 L49.07,50.76 L48.60,50.83 L48.13,50.88 L47.66,50.93 L47.20,50.97 L46.75,51.01 L46.30,51.05 L45.87,51.10 L45.46,51.15 L45.05,51.21 L44.66,51.27 L44.28,51.35 L43.92,51.45 L43.56,51.55 L43.22,51.68 L42.89,51.82 L42.58,51.97 L42.27,52.15 L41.97,52.34 L41.67,52.55 L41.38,52.79 L41.10,53.03 L40.82,53.30 L40.55,53.59 L40.27,53.89 L39.99,54.21 L39.72,54.54 L39.43,54.88 L39.15,55.23 L38.85,55.59 L38.55,55.95 L38.24,56.31 L37.92,56.66 L37.58,56.98 L37.23,57.27 L36.86,57.49 L36.47,57.61 L36.06,57.63 L35.64,57.55 L35.21,57.40 L34.78,57.21 L34.36,56.99 L33.95,56.76 L33.54,56.52 L33.15,56.28 L32.76,56.05 L32.37,55.82 L32.00,55.60 L31.63,55.40 L31.27,55.21 L30.91,55.03 L30.56,54.88 L30.21,54.74 L29.86,54.62 L29.51,54.52 L29.17,54.43 L28.82,54.37 L28.46,54.33 L28.11,54.31 L27.74,54.31 L27.38,54.33 L27.00,54.37 L26.62,54.42 L26.23,54.49 L25.83,54.57 L25.42,54.66 L25.00,54.77 L24.57,54.88 L24.13,54.99 L23.68,55.11 L23.22,55.23 L22.76,55.33 L22.30,55.43 L21.83,55.49 L21.38,55.52 L20.95,55.48 L20.56,55.35 L20.22,55.12 L19.92,54.81 L19.67,54.43 L19.44,54.03 L19.22,53.60 L19.02,53.17 L18.84,52.74 L18.65,52.32 L18.48,51.90 L18.30,51.49 L18.13,51.10 L17.95,50.71 L17.77,50.35 L17.58,50.00 L17.39,49.66 L17.19,49.34 L16.98,49.04 L16.75,48.75 L16.52,48.48 L16.27,48.23 L16.01,47.99 L15.73,47.76 L15.44,47.55 L15.13,47.35 L14.81,47.16 L14.47,46.97 L14.11,46.80 L13.74,46.63 L13.35,46.47 L12.95,46.30 L12.54,46.14 L12.11,45.98 L11.68,45.81 L11.25,45.63 L10.81,45.45 L10.38,45.25 L9.97,45.03 L9.59,44.78 L9.26,44.50 L9.02,44.17 L8.88,43.78 L8.83,43.35 L8.84,42.90 L8.89,42.44 L8.96,41.97 L9.06,41.50 L9.16,41.04 L9.26,40.59 L9.36,40.15 L9.46,39.72 L9.55,39.29 L9.63,38.88 L9.70,38.48 L9.76,38.08 L9.80,37.70 L9.82,37.32 L9.83,36.96 L9.82,36.59 L9.79,36.24 L9.74,35.89 L9.67,35.54 L9.57,35.19 L9.46,34.85 L9.33,34.50 L9.18,34.16 L9.01,33.81 L8.83,33.46 L8.63,33.10 L8.41,32.74 L8.18,32.37 L7.94,32.00 L7.70,31.62 L7.45,31.23 L7.20,30.83 L6.95,30.42 L6.72,30.01 L6.52,29.59 L6.35,29.17 L6.26,28.75 L6.26,28.34 L6.37,27.94 L6.58,27.56 L6.85,27.20 L7.17,26.86 L7.50,26.52 L7.85,26.20 L8.20,25.89 L8.55,25.59 L8.90,25.29 L9.23,24.99 L9.55,24.71 L9.86,24.42 L10.15,24.13 L10.43,23.85 L10.69,23.56 L10.93,23.27 L11.15,22.98 L11.35,22.68 L11.54,22.37 L11.70,22.06 L11.85,21.73 L11.98,21.40 L12.09,21.06 L12.19,20.70 L12.27,20.33 L12.34,19.95 L12.40,19.56 L12.44,19.15 L12.48,18.73 L12.51,18.30 L12.54,17.86 L12.56,17.41 L12.59,16.94 L12.62,16.48 L12.66,16.00 L12.72,15.53 L12.80,15.07 L12.92,14.63 L13.09,14.24 L13.33,13.91 L13.65,13.65 L14.04,13.47 L14.47,13.34 L14.93,13.24 L15.40,13.17 L15.87,13.12 L16.34,13.07 L16.80,13.03 L17.25,12.99 L17.70,12.95 L18.13,12.90 L18.54,12.85 L18.95,12.79 L19.34,12.73 L19.72,12.65 L20.08,12.55 L20.44,12.45 L20.78,12.32 L21.11,12.18 L21.42,12.03 L21.73,11.85 L22.03,11.66 L22.33,11.45 L22.62,11.21 L22.90,10.97 L23.18,10.70 L23.45,10.41 L23.73,10.11 L24.01,9.79 L24.28,9.46 L24.57,9.12 L24.85,8.77 L25.15,8.41 L25.45,8.05 L25.76,7.69 L26.08,7.34 L26.42,7.02 L26.77,6.73 L27.14,6.51 L27.53,6.39 L27.94,6.37 L28.36,6.45 L28.79,6.60 L29.22,6.79 L29.64,7.01 L30.05,7.24 L30.46,7.48 L30.85,7.72 L31.24,7.95 L31.63,8.18Z" fill="url(#kg1)"/>
<g clip-path="url(#kc1)"><path d="M32.00,8.40 L32.37,8.60 L32.73,8.79 L33.09,8.97 L33.44,9.12 L33.79,9.26 L34.14,9.38 L34.49,9.48 L34.83,9.57 L35.18,9.63 L35.54,9.67 L35.89,9.69 L36.26,9.69 L36.62,9.67 L37.00,9.63 L37.38,9.58 L37.77,9.51 L38.17,9.43 L38.58,9.34 L39.00,9.23 L39.43,9.12 L39.87,9.01 L40.32,8.89 L40.78,8.77 L41.24,8.67 L41.70,8.57 L42.17,8.51 L42.62,8.48 L43.05,8.52 L43.44,8.65 L43.78,8.88 L44.08,9.19 L44.33,9.57 L44.56,9.97 L44.78,10.40 L44.98,10.83 L45.16,11.26 L45.35,11.68 L45.52,12.10 L45.70,12.51 L45.87,12.90 L46.05,13.29 L46.23,13.65 L46.42,14.00 L46.61,14.34 L46.81,14.66 L47.02,14.96 L47.25,15.25 L47.48,15.52 L47.73,15.77 L47.99,16.01 L48.27,16.24 L48.56,16.45 L48.87,16.65 L49.19,16.84 L49.53,17.03 L49.89,17.20 L50.26,17.37 L50.65,17.53 L51.05,17.70 L51.46,17.86 L51.89,18.02 L52.32,18.19 L52.75,18.37 L53.19,18.55 L53.62,18.75 L54.03,18.97 L54.41,19.22 L54.74,19.50 L54.98,19.83 L55.12,20.22 L55.17,20.65 L55.16,21.10 L55.11,21.56 L55.04,22.03 L54.94,22.50 L54.84,22.96 L54.74,23.41 L54.64,23.85 L54.54,24.28 L54.45,24.71 L54.37,25.12 L54.30,25.52 L54.24,25.92 L54.20,26.30 L54.18,26.68 L54.17,27.04 L54.18,27.41 L54.21,27.76 L54.26,28.11 L54.33,28.46 L54.43,28.81 L54.54,29.15 L54.67,29.50 L54.82,29.84 L54.99,30.19 L55.17,30.54 L55.37,30.90 L55.59,31.26 L55.82,31.63 L56.06,32.00 L56.30,32.38 L56.55,32.77 L56.80,33.17 L57.05,33.58 L57.28,33.99 L57.48,34.41 L57.65,34.83 L57.74,35.25 L57.74,35.66 L57.63,36.06 L57.42,36.44 L57.15,36.80 L56.83,37.14 L56.50,37.48 L56.15,37.80 L55.80,38.11 L55.45,38.41 L55.10,38.71 L54.77,39.01 L54.45,39.29 L54.14,39.58 L53.85,39.87 L53.57,40.15 L53.31,40.44 L53.07,40.73 L52.85,41.02 L52.65,41.32 L52.46,41.63 L52.30,41.94 L52.15,42.27 L52.02,42.60 L51.91,42.94 L51.81,43.30 L51.73,43.67 L51.66,44.05 L51.60,44.44 L51.56,44.85 L51.52,45.27 L51.49,45.70 L51.46,46.14 L51.44,46.59 L51.41,47.06 L51.38,47.52 L51.34,48.00 L51.28,48.47 L51.20,48.93 L51.08,49.37 L50.91,49.76 L50.67,50.09 L50.35,50.35 L49.96,50.53 L49.53,50.66 L49.07,50.76 L48.60,50.83 L48.13,50.88 L47.66,50.93 L47.20,50.97 L46.75,51.01 L46.30,51.05 L45.87,51.10 L45.46,51.15 L45.05,51.21 L44.66,51.27 L44.28,51.35 L43.92,51.45 L43.56,51.55 L43.22,51.68 L42.89,51.82 L42.58,51.97 L42.27,52.15 L41.97,52.34 L41.67,52.55 L41.38,52.79 L41.10,53.03 L40.82,53.30 L40.55,53.59 L40.27,53.89 L39.99,54.21 L39.72,54.54 L39.43,54.88 L39.15,55.23 L38.85,55.59 L38.55,55.95 L38.24,56.31 L37.92,56.66 L37.58,56.98 L37.23,57.27 L36.86,57.49 L36.47,57.61 L36.06,57.63 L35.64,57.55 L35.21,57.40 L34.78,57.21 L34.36,56.99 L33.95,56.76 L33.54,56.52 L33.15,56.28 L32.76,56.05 L32.37,55.82 L32.00,55.60 L31.63,55.40 L31.27,55.21 L30.91,55.03 L30.56,54.88 L30.21,54.74 L29.86,54.62 L29.51,54.52 L29.17,54.43 L28.82,54.37 L28.46,54.33 L28.11,54.31 L27.74,54.31 L27.38,54.33 L27.00,54.37 L26.62,54.42 L26.23,54.49 L25.83,54.57 L25.42,54.66 L25.00,54.77 L24.57,54.88 L24.13,54.99 L23.68,55.11 L23.22,55.23 L22.76,55.33 L22.30,55.43 L21.83,55.49 L21.38,55.52 L20.95,55.48 L20.56,55.35 L20.22,55.12 L19.92,54.81 L19.67,54.43 L19.44,54.03 L19.22,53.60 L19.02,53.17 L18.84,52.74 L18.65,52.32 L18.48,51.90 L18.30,51.49 L18.13,51.10 L17.95,50.71 L17.77,50.35 L17.58,50.00 L17.39,49.66 L17.19,49.34 L16.98,49.04 L16.75,48.75 L16.52,48.48 L16.27,48.23 L16.01,47.99 L15.73,47.76 L15.44,47.55 L15.13,47.35 L14.81,47.16 L14.47,46.97 L14.11,46.80 L13.74,46.63 L13.35,46.47 L12.95,46.30 L12.54,46.14 L12.11,45.98 L11.68,45.81 L11.25,45.63 L10.81,45.45 L10.38,45.25 L9.97,45.03 L9.59,44.78 L9.26,44.50 L9.02,44.17 L8.88,43.78 L8.83,43.35 L8.84,42.90 L8.89,42.44 L8.96,41.97 L9.06,41.50 L9.16,41.04 L9.26,40.59 L9.36,40.15 L9.46,39.72 L9.55,39.29 L9.63,38.88 L9.70,38.48 L9.76,38.08 L9.80,37.70 L9.82,37.32 L9.83,36.96 L9.82,36.59 L9.79,36.24 L9.74,35.89 L9.67,35.54 L9.57,35.19 L9.46,34.85 L9.33,34.50 L9.18,34.16 L9.01,33.81 L8.83,33.46 L8.63,33.10 L8.41,32.74 L8.18,32.37 L7.94,32.00 L7.70,31.62 L7.45,31.23 L7.20,30.83 L6.95,30.42 L6.72,30.01 L6.52,29.59 L6.35,29.17 L6.26,28.75 L6.26,28.34 L6.37,27.94 L6.58,27.56 L6.85,27.20 L7.17,26.86 L7.50,26.52 L7.85,26.20 L8.20,25.89 L8.55,25.59 L8.90,25.29 L9.23,24.99 L9.55,24.71 L9.86,24.42 L10.15,24.13 L10.43,23.85 L10.69,23.56 L10.93,23.27 L11.15,22.98 L11.35,22.68 L11.54,22.37 L11.70,22.06 L11.85,21.73 L11.98,21.40 L12.09,21.06 L12.19,20.70 L12.27,20.33 L12.34,19.95 L12.40,19.56 L12.44,19.15 L12.48,18.73 L12.51,18.30 L12.54,17.86 L12.56,17.41 L12.59,16.94 L12.62,16.48 L12.66,16.00 L12.72,15.53 L12.80,15.07 L12.92,14.63 L13.09,14.24 L13.33,13.91 L13.65,13.65 L14.04,13.47 L14.47,13.34 L14.93,13.24 L15.40,13.17 L15.87,13.12 L16.34,13.07 L16.80,13.03 L17.25,12.99 L17.70,12.95 L18.13,12.90 L18.54,12.85 L18.95,12.79 L19.34,12.73 L19.72,12.65 L20.08,12.55 L20.44,12.45 L20.78,12.32 L21.11,12.18 L21.42,12.03 L21.73,11.85 L22.03,11.66 L22.33,11.45 L22.62,11.21 L22.90,10.97 L23.18,10.70 L23.45,10.41 L23.73,10.11 L24.01,9.79 L24.28,9.46 L24.57,9.12 L24.85,8.77 L25.15,8.41 L25.45,8.05 L25.76,7.69 L26.08,7.34 L26.42,7.02 L26.77,6.73 L27.14,6.51 L27.53,6.39 L27.94,6.37 L28.36,6.45 L28.79,6.60 L29.22,6.79 L29.64,7.01 L30.05,7.24 L30.46,7.48 L30.85,7.72 L31.24,7.95 L31.63,8.18Z" fill="none" stroke="url(#kh1)" stroke-width="4"/><path d="M32.00,8.40 L32.37,8.60 L32.73,8.79 L33.09,8.97 L33.44,9.12 L33.79,9.26 L34.14,9.38 L34.49,9.48 L34.83,9.57 L35.18,9.63 L35.54,9.67 L35.89,9.69 L36.26,9.69 L36.62,9.67 L37.00,9.63 L37.38,9.58 L37.77,9.51 L38.17,9.43 L38.58,9.34 L39.00,9.23 L39.43,9.12 L39.87,9.01 L40.32,8.89 L40.78,8.77 L41.24,8.67 L41.70,8.57 L42.17,8.51 L42.62,8.48 L43.05,8.52 L43.44,8.65 L43.78,8.88 L44.08,9.19 L44.33,9.57 L44.56,9.97 L44.78,10.40 L44.98,10.83 L45.16,11.26 L45.35,11.68 L45.52,12.10 L45.70,12.51 L45.87,12.90 L46.05,13.29 L46.23,13.65 L46.42,14.00 L46.61,14.34 L46.81,14.66 L47.02,14.96 L47.25,15.25 L47.48,15.52 L47.73,15.77 L47.99,16.01 L48.27,16.24 L48.56,16.45 L48.87,16.65 L49.19,16.84 L49.53,17.03 L49.89,17.20 L50.26,17.37 L50.65,17.53 L51.05,17.70 L51.46,17.86 L51.89,18.02 L52.32,18.19 L52.75,18.37 L53.19,18.55 L53.62,18.75 L54.03,18.97 L54.41,19.22 L54.74,19.50 L54.98,19.83 L55.12,20.22 L55.17,20.65 L55.16,21.10 L55.11,21.56 L55.04,22.03 L54.94,22.50 L54.84,22.96 L54.74,23.41 L54.64,23.85 L54.54,24.28 L54.45,24.71 L54.37,25.12 L54.30,25.52 L54.24,25.92 L54.20,26.30 L54.18,26.68 L54.17,27.04 L54.18,27.41 L54.21,27.76 L54.26,28.11 L54.33,28.46 L54.43,28.81 L54.54,29.15 L54.67,29.50 L54.82,29.84 L54.99,30.19 L55.17,30.54 L55.37,30.90 L55.59,31.26 L55.82,31.63 L56.06,32.00 L56.30,32.38 L56.55,32.77 L56.80,33.17 L57.05,33.58 L57.28,33.99 L57.48,34.41 L57.65,34.83 L57.74,35.25 L57.74,35.66 L57.63,36.06 L57.42,36.44 L57.15,36.80 L56.83,37.14 L56.50,37.48 L56.15,37.80 L55.80,38.11 L55.45,38.41 L55.10,38.71 L54.77,39.01 L54.45,39.29 L54.14,39.58 L53.85,39.87 L53.57,40.15 L53.31,40.44 L53.07,40.73 L52.85,41.02 L52.65,41.32 L52.46,41.63 L52.30,41.94 L52.15,42.27 L52.02,42.60 L51.91,42.94 L51.81,43.30 L51.73,43.67 L51.66,44.05 L51.60,44.44 L51.56,44.85 L51.52,45.27 L51.49,45.70 L51.46,46.14 L51.44,46.59 L51.41,47.06 L51.38,47.52 L51.34,48.00 L51.28,48.47 L51.20,48.93 L51.08,49.37 L50.91,49.76 L50.67,50.09 L50.35,50.35 L49.96,50.53 L49.53,50.66 L49.07,50.76 L48.60,50.83 L48.13,50.88 L47.66,50.93 L47.20,50.97 L46.75,51.01 L46.30,51.05 L45.87,51.10 L45.46,51.15 L45.05,51.21 L44.66,51.27 L44.28,51.35 L43.92,51.45 L43.56,51.55 L43.22,51.68 L42.89,51.82 L42.58,51.97 L42.27,52.15 L41.97,52.34 L41.67,52.55 L41.38,52.79 L41.10,53.03 L40.82,53.30 L40.55,53.59 L40.27,53.89 L39.99,54.21 L39.72,54.54 L39.43,54.88 L39.15,55.23 L38.85,55.59 L38.55,55.95 L38.24,56.31 L37.92,56.66 L37.58,56.98 L37.23,57.27 L36.86,57.49 L36.47,57.61 L36.06,57.63 L35.64,57.55 L35.21,57.40 L34.78,57.21 L34.36,56.99 L33.95,56.76 L33.54,56.52 L33.15,56.28 L32.76,56.05 L32.37,55.82 L32.00,55.60 L31.63,55.40 L31.27,55.21 L30.91,55.03 L30.56,54.88 L30.21,54.74 L29.86,54.62 L29.51,54.52 L29.17,54.43 L28.82,54.37 L28.46,54.33 L28.11,54.31 L27.74,54.31 L27.38,54.33 L27.00,54.37 L26.62,54.42 L26.23,54.49 L25.83,54.57 L25.42,54.66 L25.00,54.77 L24.57,54.88 L24.13,54.99 L23.68,55.11 L23.22,55.23 L22.76,55.33 L22.30,55.43 L21.83,55.49 L21.38,55.52 L20.95,55.48 L20.56,55.35 L20.22,55.12 L19.92,54.81 L19.67,54.43 L19.44,54.03 L19.22,53.60 L19.02,53.17 L18.84,52.74 L18.65,52.32 L18.48,51.90 L18.30,51.49 L18.13,51.10 L17.95,50.71 L17.77,50.35 L17.58,50.00 L17.39,49.66 L17.19,49.34 L16.98,49.04 L16.75,48.75 L16.52,48.48 L16.27,48.23 L16.01,47.99 L15.73,47.76 L15.44,47.55 L15.13,47.35 L14.81,47.16 L14.47,46.97 L14.11,46.80 L13.74,46.63 L13.35,46.47 L12.95,46.30 L12.54,46.14 L12.11,45.98 L11.68,45.81 L11.25,45.63 L10.81,45.45 L10.38,45.25 L9.97,45.03 L9.59,44.78 L9.26,44.50 L9.02,44.17 L8.88,43.78 L8.83,43.35 L8.84,42.90 L8.89,42.44 L8.96,41.97 L9.06,41.50 L9.16,41.04 L9.26,40.59 L9.36,40.15 L9.46,39.72 L9.55,39.29 L9.63,38.88 L9.70,38.48 L9.76,38.08 L9.80,37.70 L9.82,37.32 L9.83,36.96 L9.82,36.59 L9.79,36.24 L9.74,35.89 L9.67,35.54 L9.57,35.19 L9.46,34.85 L9.33,34.50 L9.18,34.16 L9.01,33.81 L8.83,33.46 L8.63,33.10 L8.41,32.74 L8.18,32.37 L7.94,32.00 L7.70,31.62 L7.45,31.23 L7.20,30.83 L6.95,30.42 L6.72,30.01 L6.52,29.59 L6.35,29.17 L6.26,28.75 L6.26,28.34 L6.37,27.94 L6.58,27.56 L6.85,27.20 L7.17,26.86 L7.50,26.52 L7.85,26.20 L8.20,25.89 L8.55,25.59 L8.90,25.29 L9.23,24.99 L9.55,24.71 L9.86,24.42 L10.15,24.13 L10.43,23.85 L10.69,23.56 L10.93,23.27 L11.15,22.98 L11.35,22.68 L11.54,22.37 L11.70,22.06 L11.85,21.73 L11.98,21.40 L12.09,21.06 L12.19,20.70 L12.27,20.33 L12.34,19.95 L12.40,19.56 L12.44,19.15 L12.48,18.73 L12.51,18.30 L12.54,17.86 L12.56,17.41 L12.59,16.94 L12.62,16.48 L12.66,16.00 L12.72,15.53 L12.80,15.07 L12.92,14.63 L13.09,14.24 L13.33,13.91 L13.65,13.65 L14.04,13.47 L14.47,13.34 L14.93,13.24 L15.40,13.17 L15.87,13.12 L16.34,13.07 L16.80,13.03 L17.25,12.99 L17.70,12.95 L18.13,12.90 L18.54,12.85 L18.95,12.79 L19.34,12.73 L19.72,12.65 L20.08,12.55 L20.44,12.45 L20.78,12.32 L21.11,12.18 L21.42,12.03 L21.73,11.85 L22.03,11.66 L22.33,11.45 L22.62,11.21 L22.90,10.97 L23.18,10.70 L23.45,10.41 L23.73,10.11 L24.01,9.79 L24.28,9.46 L24.57,9.12 L24.85,8.77 L25.15,8.41 L25.45,8.05 L25.76,7.69 L26.08,7.34 L26.42,7.02 L26.77,6.73 L27.14,6.51 L27.53,6.39 L27.94,6.37 L28.36,6.45 L28.79,6.60 L29.22,6.79 L29.64,7.01 L30.05,7.24 L30.46,7.48 L30.85,7.72 L31.24,7.95 L31.63,8.18Z" fill="none" stroke="url(#kd1)" stroke-width="3"/>
<circle cx="33" cy="33.5" r="19" fill="#500010" opacity="0.75" filter="url(#ke1)"/></g>
</svg>
<div style="left:794.5px;top:268.5px;width:35px;height:35px;border-radius:50%;background:conic-gradient(from 0deg,#b4b4b6 0deg,#e0e0e0 40deg,#d8e2ec 80deg,#88a8d0 130deg,#c4d8ee 175deg,#9cacbe 215deg,#6a7078 268deg,#808286 312deg,#b4b4b6 360deg);box-shadow:inset -1px -1px 0 0.2px rgba(255,255,255,0.7),inset 1px 1px 0 0 rgba(70,70,80,0.6),0 0 0 0.5px rgba(60,0,0,0.5)"></div>
<div style="left:793.5px;top:268.0px;width:4.4px;height:4.4px;border-radius:50%;background:#fff;box-shadow:0 0 0 0.8px #333"></div>
<svg style="left:780px;top:318px" width="64" height="64" viewBox="0 0 64 64"><defs>
<linearGradient id="ko2" x1="0.15" y1="0.1" x2="0.85" y2="0.9"><stop offset="0" stop-color="#dc5a64"/><stop offset="0.35" stop-color="#c43442"/><stop offset="0.58" stop-color="#9c1c32"/><stop offset="0.76" stop-color="#6c1a3a"/><stop offset="0.9" stop-color="#383a84"/><stop offset="1" stop-color="#1a52b4"/></linearGradient>
<radialGradient id="kr2" cx="0.5" cy="0.5" r="0.5"><stop offset="0.62" stop-color="#400008" stop-opacity="0.35"/><stop offset="0.8" stop-color="#400008" stop-opacity="0.05"/><stop offset="0.9" stop-color="#ff9090" stop-opacity="0.06"/><stop offset="1" stop-color="#400008" stop-opacity="0.3"/></radialGradient>
<linearGradient id="kg2" x1="0.2" y1="0.08" x2="0.8" y2="0.92"><stop offset="0" stop-color="#ff7c7c"/><stop offset="0.28" stop-color="#f03c46"/><stop offset="0.5" stop-color="#d41c2c"/><stop offset="0.72" stop-color="#a00e20"/><stop offset="1" stop-color="#4c0616"/></linearGradient>
<linearGradient id="kh2" x1="0.1" y1="0.1" x2="0.7" y2="0.7"><stop offset="0" stop-color="#ffb0b0" stop-opacity="0.9"/><stop offset="0.6" stop-color="#ff9090" stop-opacity="0"/></linearGradient>
<linearGradient id="kd2" x1="0.3" y1="0.3" x2="0.9" y2="0.9"><stop offset="0.4" stop-color="#400010" stop-opacity="0"/><stop offset="1" stop-color="#400010" stop-opacity="0.8"/></linearGradient>
<clipPath id="kc2"><path d="M32.00,8.61 L32.37,8.41 L32.75,8.20 L33.13,7.98 L33.53,7.75 L33.93,7.52 L34.34,7.29 L34.75,7.07 L35.18,6.86 L35.61,6.67 L36.04,6.52 L36.46,6.44 L36.87,6.46 L37.26,6.59 L37.63,6.81 L37.98,7.10 L38.31,7.43 L38.63,7.78 L38.93,8.14 L39.23,8.51 L39.52,8.87 L39.80,9.23 L40.07,9.57 L40.35,9.91 L40.62,10.23 L40.89,10.54 L41.16,10.83 L41.44,11.10 L41.71,11.36 L42.00,11.60 L42.29,11.81 L42.58,12.01 L42.89,12.20 L43.20,12.36 L43.53,12.50 L43.87,12.63 L44.22,12.75 L44.58,12.85 L44.96,12.94 L45.35,13.01 L45.75,13.08 L46.17,13.13 L46.59,13.19 L47.03,13.23 L47.49,13.28 L47.95,13.33 L48.41,13.38 L48.88,13.45 L49.35,13.52 L49.81,13.63 L50.24,13.76 L50.63,13.95 L50.95,14.20 L51.20,14.53 L51.36,14.93 L51.47,15.37 L51.55,15.83 L51.60,16.30 L51.63,16.77 L51.66,17.24 L51.68,17.70 L51.69,18.16 L51.71,18.60 L51.74,19.04 L51.77,19.46 L51.81,19.86 L51.85,20.26 L51.92,20.64 L51.99,21.01 L52.08,21.37 L52.19,21.71 L52.31,22.05 L52.45,22.38 L52.61,22.69 L52.79,23.00 L52.98,23.31 L53.20,23.61 L53.43,23.90 L53.69,24.19 L53.96,24.48 L54.25,24.77 L54.55,25.06 L54.87,25.36 L55.19,25.66 L55.53,25.96 L55.87,26.27 L56.22,26.59 L56.56,26.91 L56.90,27.25 L57.21,27.60 L57.48,27.96 L57.68,28.34 L57.79,28.74 L57.80,29.15 L57.70,29.57 L57.53,29.99 L57.32,30.41 L57.08,30.82 L56.83,31.22 L56.58,31.61 L56.32,32.00 L56.07,32.38 L55.82,32.75 L55.59,33.11 L55.37,33.47 L55.16,33.82 L54.96,34.17 L54.79,34.52 L54.63,34.86 L54.49,35.20 L54.38,35.54 L54.28,35.89 L54.20,36.23 L54.14,36.59 L54.10,36.94 L54.09,37.30 L54.08,37.67 L54.10,38.05 L54.14,38.43 L54.18,38.82 L54.25,39.23 L54.32,39.64 L54.40,40.07 L54.49,40.50 L54.59,40.94 L54.68,41.40 L54.78,41.86 L54.86,42.32 L54.93,42.79 L54.98,43.26 L54.98,43.71 L54.93,44.14 L54.78,44.53 L54.54,44.86 L54.22,45.14 L53.84,45.38 L53.42,45.59 L52.99,45.79 L52.55,45.97 L52.11,46.13 L51.68,46.30 L51.25,46.45 L50.83,46.61 L50.43,46.76 L50.04,46.92 L49.66,47.09 L49.30,47.25 L48.96,47.43 L48.63,47.62 L48.32,47.81 L48.02,48.02 L47.74,48.24 L47.47,48.47 L47.22,48.72 L46.98,48.99 L46.75,49.27 L46.53,49.57 L46.33,49.88 L46.13,50.21 L45.94,50.56 L45.75,50.92 L45.57,51.30 L45.38,51.69 L45.20,52.10 L45.02,52.51 L44.83,52.93 L44.63,53.36 L44.43,53.79 L44.21,54.21 L43.97,54.61 L43.71,54.98 L43.41,55.30 L43.07,55.53 L42.68,55.65 L42.25,55.69 L41.80,55.66 L41.34,55.59 L40.88,55.49 L40.42,55.38 L39.96,55.26 L39.52,55.13 L39.08,55.01 L38.65,54.89 L38.23,54.78 L37.82,54.68 L37.42,54.59 L37.03,54.51 L36.65,54.45 L36.27,54.41 L35.91,54.38 L35.54,54.38 L35.19,54.39 L34.83,54.42 L34.48,54.48 L34.13,54.55 L33.78,54.64 L33.43,54.76 L33.08,54.89 L32.72,55.04 L32.36,55.21 L32.00,55.39 L31.63,55.59 L31.25,55.80 L30.87,56.02 L30.47,56.25 L30.07,56.48 L29.66,56.71 L29.25,56.93 L28.82,57.14 L28.39,57.33 L27.96,57.48 L27.54,57.56 L27.13,57.54 L26.74,57.41 L26.37,57.19 L26.02,56.90 L25.69,56.57 L25.37,56.22 L25.07,55.86 L24.77,55.49 L24.48,55.13 L24.20,54.77 L23.93,54.43 L23.65,54.09 L23.38,53.77 L23.11,53.46 L22.84,53.17 L22.56,52.90 L22.29,52.64 L22.00,52.40 L21.71,52.19 L21.42,51.99 L21.11,51.80 L20.80,51.64 L20.47,51.50 L20.13,51.37 L19.78,51.25 L19.42,51.15 L19.04,51.06 L18.65,50.99 L18.25,50.92 L17.83,50.87 L17.41,50.81 L16.97,50.77 L16.51,50.72 L16.05,50.67 L15.59,50.62 L15.12,50.55 L14.65,50.48 L14.19,50.37 L13.76,50.24 L13.37,50.05 L13.05,49.80 L12.80,49.47 L12.64,49.07 L12.53,48.63 L12.45,48.17 L12.40,47.70 L12.37,47.23 L12.34,46.76 L12.32,46.30 L12.31,45.84 L12.29,45.40 L12.26,44.96 L12.23,44.54 L12.19,44.14 L12.15,43.74 L12.08,43.36 L12.01,42.99 L11.92,42.63 L11.81,42.29 L11.69,41.95 L11.55,41.62 L11.39,41.31 L11.21,41.00 L11.02,40.69 L10.80,40.39 L10.57,40.10 L10.31,39.81 L10.04,39.52 L9.75,39.23 L9.45,38.94 L9.13,38.64 L8.81,38.34 L8.47,38.04 L8.13,37.73 L7.78,37.41 L7.44,37.09 L7.10,36.75 L6.79,36.40 L6.52,36.04 L6.32,35.66 L6.21,35.26 L6.20,34.85 L6.30,34.43 L6.47,34.01 L6.68,33.59 L6.92,33.18 L7.17,32.78 L7.42,32.39 L7.68,32.00 L7.93,31.62 L8.18,31.25 L8.41,30.89 L8.63,30.53 L8.84,30.18 L9.04,29.83 L9.21,29.48 L9.37,29.14 L9.51,28.80 L9.62,28.46 L9.72,28.11 L9.80,27.77 L9.86,27.41 L9.90,27.06 L9.91,26.70 L9.92,26.33 L9.90,25.95 L9.86,25.57 L9.82,25.18 L9.75,24.77 L9.68,24.36 L9.60,23.93 L9.51,23.50 L9.41,23.06 L9.32,22.60 L9.22,22.14 L9.14,21.68 L9.07,21.21 L9.02,20.74 L9.02,20.29 L9.07,19.86 L9.22,19.47 L9.46,19.14 L9.78,18.86 L10.16,18.62 L10.58,18.41 L11.01,18.21 L11.45,18.03 L11.89,17.87 L12.32,17.70 L12.75,17.55 L13.17,17.39 L13.57,17.24 L13.96,17.08 L14.34,16.91 L14.70,16.75 L15.04,16.57 L15.37,16.38 L15.68,16.19 L15.98,15.98 L16.26,15.76 L16.53,15.53 L16.78,15.28 L17.02,15.01 L17.25,14.73 L17.47,14.43 L17.67,14.12 L17.87,13.79 L18.06,13.44 L18.25,13.08 L18.43,12.70 L18.62,12.31 L18.80,11.90 L18.98,11.49 L19.17,11.07 L19.37,10.64 L19.57,10.21 L19.79,9.79 L20.03,9.39 L20.29,9.02 L20.59,8.70 L20.93,8.47 L21.32,8.35 L21.75,8.31 L22.20,8.34 L22.66,8.41 L23.12,8.51 L23.58,8.62 L24.04,8.74 L24.48,8.87 L24.92,8.99 L25.35,9.11 L25.77,9.22 L26.18,9.32 L26.58,9.41 L26.97,9.49 L27.35,9.55 L27.73,9.59 L28.09,9.62 L28.46,9.62 L28.81,9.61 L29.17,9.58 L29.52,9.52 L29.87,9.45 L30.22,9.36 L30.57,9.24 L30.92,9.11 L31.28,8.96 L31.64,8.79Z"/></clipPath>
<filter id="kb2" x="-30%" y="-30%" width="160%" height="160%"><feGaussianBlur stdDeviation="1.8"/></filter>
<filter id="ke2" x="-30%" y="-30%" width="160%" height="160%"><feGaussianBlur stdDeviation="1.1"/></filter>
</defs>
<circle cx="32" cy="32" r="31.7" fill="url(#ko2)"/>
<circle cx="32" cy="32" r="31.7" fill="url(#kr2)"/>
<path d="M32.00,8.61 L32.37,8.41 L32.75,8.20 L33.13,7.98 L33.53,7.75 L33.93,7.52 L34.34,7.29 L34.75,7.07 L35.18,6.86 L35.61,6.67 L36.04,6.52 L36.46,6.44 L36.87,6.46 L37.26,6.59 L37.63,6.81 L37.98,7.10 L38.31,7.43 L38.63,7.78 L38.93,8.14 L39.23,8.51 L39.52,8.87 L39.80,9.23 L40.07,9.57 L40.35,9.91 L40.62,10.23 L40.89,10.54 L41.16,10.83 L41.44,11.10 L41.71,11.36 L42.00,11.60 L42.29,11.81 L42.58,12.01 L42.89,12.20 L43.20,12.36 L43.53,12.50 L43.87,12.63 L44.22,12.75 L44.58,12.85 L44.96,12.94 L45.35,13.01 L45.75,13.08 L46.17,13.13 L46.59,13.19 L47.03,13.23 L47.49,13.28 L47.95,13.33 L48.41,13.38 L48.88,13.45 L49.35,13.52 L49.81,13.63 L50.24,13.76 L50.63,13.95 L50.95,14.20 L51.20,14.53 L51.36,14.93 L51.47,15.37 L51.55,15.83 L51.60,16.30 L51.63,16.77 L51.66,17.24 L51.68,17.70 L51.69,18.16 L51.71,18.60 L51.74,19.04 L51.77,19.46 L51.81,19.86 L51.85,20.26 L51.92,20.64 L51.99,21.01 L52.08,21.37 L52.19,21.71 L52.31,22.05 L52.45,22.38 L52.61,22.69 L52.79,23.00 L52.98,23.31 L53.20,23.61 L53.43,23.90 L53.69,24.19 L53.96,24.48 L54.25,24.77 L54.55,25.06 L54.87,25.36 L55.19,25.66 L55.53,25.96 L55.87,26.27 L56.22,26.59 L56.56,26.91 L56.90,27.25 L57.21,27.60 L57.48,27.96 L57.68,28.34 L57.79,28.74 L57.80,29.15 L57.70,29.57 L57.53,29.99 L57.32,30.41 L57.08,30.82 L56.83,31.22 L56.58,31.61 L56.32,32.00 L56.07,32.38 L55.82,32.75 L55.59,33.11 L55.37,33.47 L55.16,33.82 L54.96,34.17 L54.79,34.52 L54.63,34.86 L54.49,35.20 L54.38,35.54 L54.28,35.89 L54.20,36.23 L54.14,36.59 L54.10,36.94 L54.09,37.30 L54.08,37.67 L54.10,38.05 L54.14,38.43 L54.18,38.82 L54.25,39.23 L54.32,39.64 L54.40,40.07 L54.49,40.50 L54.59,40.94 L54.68,41.40 L54.78,41.86 L54.86,42.32 L54.93,42.79 L54.98,43.26 L54.98,43.71 L54.93,44.14 L54.78,44.53 L54.54,44.86 L54.22,45.14 L53.84,45.38 L53.42,45.59 L52.99,45.79 L52.55,45.97 L52.11,46.13 L51.68,46.30 L51.25,46.45 L50.83,46.61 L50.43,46.76 L50.04,46.92 L49.66,47.09 L49.30,47.25 L48.96,47.43 L48.63,47.62 L48.32,47.81 L48.02,48.02 L47.74,48.24 L47.47,48.47 L47.22,48.72 L46.98,48.99 L46.75,49.27 L46.53,49.57 L46.33,49.88 L46.13,50.21 L45.94,50.56 L45.75,50.92 L45.57,51.30 L45.38,51.69 L45.20,52.10 L45.02,52.51 L44.83,52.93 L44.63,53.36 L44.43,53.79 L44.21,54.21 L43.97,54.61 L43.71,54.98 L43.41,55.30 L43.07,55.53 L42.68,55.65 L42.25,55.69 L41.80,55.66 L41.34,55.59 L40.88,55.49 L40.42,55.38 L39.96,55.26 L39.52,55.13 L39.08,55.01 L38.65,54.89 L38.23,54.78 L37.82,54.68 L37.42,54.59 L37.03,54.51 L36.65,54.45 L36.27,54.41 L35.91,54.38 L35.54,54.38 L35.19,54.39 L34.83,54.42 L34.48,54.48 L34.13,54.55 L33.78,54.64 L33.43,54.76 L33.08,54.89 L32.72,55.04 L32.36,55.21 L32.00,55.39 L31.63,55.59 L31.25,55.80 L30.87,56.02 L30.47,56.25 L30.07,56.48 L29.66,56.71 L29.25,56.93 L28.82,57.14 L28.39,57.33 L27.96,57.48 L27.54,57.56 L27.13,57.54 L26.74,57.41 L26.37,57.19 L26.02,56.90 L25.69,56.57 L25.37,56.22 L25.07,55.86 L24.77,55.49 L24.48,55.13 L24.20,54.77 L23.93,54.43 L23.65,54.09 L23.38,53.77 L23.11,53.46 L22.84,53.17 L22.56,52.90 L22.29,52.64 L22.00,52.40 L21.71,52.19 L21.42,51.99 L21.11,51.80 L20.80,51.64 L20.47,51.50 L20.13,51.37 L19.78,51.25 L19.42,51.15 L19.04,51.06 L18.65,50.99 L18.25,50.92 L17.83,50.87 L17.41,50.81 L16.97,50.77 L16.51,50.72 L16.05,50.67 L15.59,50.62 L15.12,50.55 L14.65,50.48 L14.19,50.37 L13.76,50.24 L13.37,50.05 L13.05,49.80 L12.80,49.47 L12.64,49.07 L12.53,48.63 L12.45,48.17 L12.40,47.70 L12.37,47.23 L12.34,46.76 L12.32,46.30 L12.31,45.84 L12.29,45.40 L12.26,44.96 L12.23,44.54 L12.19,44.14 L12.15,43.74 L12.08,43.36 L12.01,42.99 L11.92,42.63 L11.81,42.29 L11.69,41.95 L11.55,41.62 L11.39,41.31 L11.21,41.00 L11.02,40.69 L10.80,40.39 L10.57,40.10 L10.31,39.81 L10.04,39.52 L9.75,39.23 L9.45,38.94 L9.13,38.64 L8.81,38.34 L8.47,38.04 L8.13,37.73 L7.78,37.41 L7.44,37.09 L7.10,36.75 L6.79,36.40 L6.52,36.04 L6.32,35.66 L6.21,35.26 L6.20,34.85 L6.30,34.43 L6.47,34.01 L6.68,33.59 L6.92,33.18 L7.17,32.78 L7.42,32.39 L7.68,32.00 L7.93,31.62 L8.18,31.25 L8.41,30.89 L8.63,30.53 L8.84,30.18 L9.04,29.83 L9.21,29.48 L9.37,29.14 L9.51,28.80 L9.62,28.46 L9.72,28.11 L9.80,27.77 L9.86,27.41 L9.90,27.06 L9.91,26.70 L9.92,26.33 L9.90,25.95 L9.86,25.57 L9.82,25.18 L9.75,24.77 L9.68,24.36 L9.60,23.93 L9.51,23.50 L9.41,23.06 L9.32,22.60 L9.22,22.14 L9.14,21.68 L9.07,21.21 L9.02,20.74 L9.02,20.29 L9.07,19.86 L9.22,19.47 L9.46,19.14 L9.78,18.86 L10.16,18.62 L10.58,18.41 L11.01,18.21 L11.45,18.03 L11.89,17.87 L12.32,17.70 L12.75,17.55 L13.17,17.39 L13.57,17.24 L13.96,17.08 L14.34,16.91 L14.70,16.75 L15.04,16.57 L15.37,16.38 L15.68,16.19 L15.98,15.98 L16.26,15.76 L16.53,15.53 L16.78,15.28 L17.02,15.01 L17.25,14.73 L17.47,14.43 L17.67,14.12 L17.87,13.79 L18.06,13.44 L18.25,13.08 L18.43,12.70 L18.62,12.31 L18.80,11.90 L18.98,11.49 L19.17,11.07 L19.37,10.64 L19.57,10.21 L19.79,9.79 L20.03,9.39 L20.29,9.02 L20.59,8.70 L20.93,8.47 L21.32,8.35 L21.75,8.31 L22.20,8.34 L22.66,8.41 L23.12,8.51 L23.58,8.62 L24.04,8.74 L24.48,8.87 L24.92,8.99 L25.35,9.11 L25.77,9.22 L26.18,9.32 L26.58,9.41 L26.97,9.49 L27.35,9.55 L27.73,9.59 L28.09,9.62 L28.46,9.62 L28.81,9.61 L29.17,9.58 L29.52,9.52 L29.87,9.45 L30.22,9.36 L30.57,9.24 L30.92,9.11 L31.28,8.96 L31.64,8.79Z" transform="translate(2,2.5)" fill="#200410" opacity="0.85" filter="url(#kb2)"/>
<path d="M32.00,8.61 L32.37,8.41 L32.75,8.20 L33.13,7.98 L33.53,7.75 L33.93,7.52 L34.34,7.29 L34.75,7.07 L35.18,6.86 L35.61,6.67 L36.04,6.52 L36.46,6.44 L36.87,6.46 L37.26,6.59 L37.63,6.81 L37.98,7.10 L38.31,7.43 L38.63,7.78 L38.93,8.14 L39.23,8.51 L39.52,8.87 L39.80,9.23 L40.07,9.57 L40.35,9.91 L40.62,10.23 L40.89,10.54 L41.16,10.83 L41.44,11.10 L41.71,11.36 L42.00,11.60 L42.29,11.81 L42.58,12.01 L42.89,12.20 L43.20,12.36 L43.53,12.50 L43.87,12.63 L44.22,12.75 L44.58,12.85 L44.96,12.94 L45.35,13.01 L45.75,13.08 L46.17,13.13 L46.59,13.19 L47.03,13.23 L47.49,13.28 L47.95,13.33 L48.41,13.38 L48.88,13.45 L49.35,13.52 L49.81,13.63 L50.24,13.76 L50.63,13.95 L50.95,14.20 L51.20,14.53 L51.36,14.93 L51.47,15.37 L51.55,15.83 L51.60,16.30 L51.63,16.77 L51.66,17.24 L51.68,17.70 L51.69,18.16 L51.71,18.60 L51.74,19.04 L51.77,19.46 L51.81,19.86 L51.85,20.26 L51.92,20.64 L51.99,21.01 L52.08,21.37 L52.19,21.71 L52.31,22.05 L52.45,22.38 L52.61,22.69 L52.79,23.00 L52.98,23.31 L53.20,23.61 L53.43,23.90 L53.69,24.19 L53.96,24.48 L54.25,24.77 L54.55,25.06 L54.87,25.36 L55.19,25.66 L55.53,25.96 L55.87,26.27 L56.22,26.59 L56.56,26.91 L56.90,27.25 L57.21,27.60 L57.48,27.96 L57.68,28.34 L57.79,28.74 L57.80,29.15 L57.70,29.57 L57.53,29.99 L57.32,30.41 L57.08,30.82 L56.83,31.22 L56.58,31.61 L56.32,32.00 L56.07,32.38 L55.82,32.75 L55.59,33.11 L55.37,33.47 L55.16,33.82 L54.96,34.17 L54.79,34.52 L54.63,34.86 L54.49,35.20 L54.38,35.54 L54.28,35.89 L54.20,36.23 L54.14,36.59 L54.10,36.94 L54.09,37.30 L54.08,37.67 L54.10,38.05 L54.14,38.43 L54.18,38.82 L54.25,39.23 L54.32,39.64 L54.40,40.07 L54.49,40.50 L54.59,40.94 L54.68,41.40 L54.78,41.86 L54.86,42.32 L54.93,42.79 L54.98,43.26 L54.98,43.71 L54.93,44.14 L54.78,44.53 L54.54,44.86 L54.22,45.14 L53.84,45.38 L53.42,45.59 L52.99,45.79 L52.55,45.97 L52.11,46.13 L51.68,46.30 L51.25,46.45 L50.83,46.61 L50.43,46.76 L50.04,46.92 L49.66,47.09 L49.30,47.25 L48.96,47.43 L48.63,47.62 L48.32,47.81 L48.02,48.02 L47.74,48.24 L47.47,48.47 L47.22,48.72 L46.98,48.99 L46.75,49.27 L46.53,49.57 L46.33,49.88 L46.13,50.21 L45.94,50.56 L45.75,50.92 L45.57,51.30 L45.38,51.69 L45.20,52.10 L45.02,52.51 L44.83,52.93 L44.63,53.36 L44.43,53.79 L44.21,54.21 L43.97,54.61 L43.71,54.98 L43.41,55.30 L43.07,55.53 L42.68,55.65 L42.25,55.69 L41.80,55.66 L41.34,55.59 L40.88,55.49 L40.42,55.38 L39.96,55.26 L39.52,55.13 L39.08,55.01 L38.65,54.89 L38.23,54.78 L37.82,54.68 L37.42,54.59 L37.03,54.51 L36.65,54.45 L36.27,54.41 L35.91,54.38 L35.54,54.38 L35.19,54.39 L34.83,54.42 L34.48,54.48 L34.13,54.55 L33.78,54.64 L33.43,54.76 L33.08,54.89 L32.72,55.04 L32.36,55.21 L32.00,55.39 L31.63,55.59 L31.25,55.80 L30.87,56.02 L30.47,56.25 L30.07,56.48 L29.66,56.71 L29.25,56.93 L28.82,57.14 L28.39,57.33 L27.96,57.48 L27.54,57.56 L27.13,57.54 L26.74,57.41 L26.37,57.19 L26.02,56.90 L25.69,56.57 L25.37,56.22 L25.07,55.86 L24.77,55.49 L24.48,55.13 L24.20,54.77 L23.93,54.43 L23.65,54.09 L23.38,53.77 L23.11,53.46 L22.84,53.17 L22.56,52.90 L22.29,52.64 L22.00,52.40 L21.71,52.19 L21.42,51.99 L21.11,51.80 L20.80,51.64 L20.47,51.50 L20.13,51.37 L19.78,51.25 L19.42,51.15 L19.04,51.06 L18.65,50.99 L18.25,50.92 L17.83,50.87 L17.41,50.81 L16.97,50.77 L16.51,50.72 L16.05,50.67 L15.59,50.62 L15.12,50.55 L14.65,50.48 L14.19,50.37 L13.76,50.24 L13.37,50.05 L13.05,49.80 L12.80,49.47 L12.64,49.07 L12.53,48.63 L12.45,48.17 L12.40,47.70 L12.37,47.23 L12.34,46.76 L12.32,46.30 L12.31,45.84 L12.29,45.40 L12.26,44.96 L12.23,44.54 L12.19,44.14 L12.15,43.74 L12.08,43.36 L12.01,42.99 L11.92,42.63 L11.81,42.29 L11.69,41.95 L11.55,41.62 L11.39,41.31 L11.21,41.00 L11.02,40.69 L10.80,40.39 L10.57,40.10 L10.31,39.81 L10.04,39.52 L9.75,39.23 L9.45,38.94 L9.13,38.64 L8.81,38.34 L8.47,38.04 L8.13,37.73 L7.78,37.41 L7.44,37.09 L7.10,36.75 L6.79,36.40 L6.52,36.04 L6.32,35.66 L6.21,35.26 L6.20,34.85 L6.30,34.43 L6.47,34.01 L6.68,33.59 L6.92,33.18 L7.17,32.78 L7.42,32.39 L7.68,32.00 L7.93,31.62 L8.18,31.25 L8.41,30.89 L8.63,30.53 L8.84,30.18 L9.04,29.83 L9.21,29.48 L9.37,29.14 L9.51,28.80 L9.62,28.46 L9.72,28.11 L9.80,27.77 L9.86,27.41 L9.90,27.06 L9.91,26.70 L9.92,26.33 L9.90,25.95 L9.86,25.57 L9.82,25.18 L9.75,24.77 L9.68,24.36 L9.60,23.93 L9.51,23.50 L9.41,23.06 L9.32,22.60 L9.22,22.14 L9.14,21.68 L9.07,21.21 L9.02,20.74 L9.02,20.29 L9.07,19.86 L9.22,19.47 L9.46,19.14 L9.78,18.86 L10.16,18.62 L10.58,18.41 L11.01,18.21 L11.45,18.03 L11.89,17.87 L12.32,17.70 L12.75,17.55 L13.17,17.39 L13.57,17.24 L13.96,17.08 L14.34,16.91 L14.70,16.75 L15.04,16.57 L15.37,16.38 L15.68,16.19 L15.98,15.98 L16.26,15.76 L16.53,15.53 L16.78,15.28 L17.02,15.01 L17.25,14.73 L17.47,14.43 L17.67,14.12 L17.87,13.79 L18.06,13.44 L18.25,13.08 L18.43,12.70 L18.62,12.31 L18.80,11.90 L18.98,11.49 L19.17,11.07 L19.37,10.64 L19.57,10.21 L19.79,9.79 L20.03,9.39 L20.29,9.02 L20.59,8.70 L20.93,8.47 L21.32,8.35 L21.75,8.31 L22.20,8.34 L22.66,8.41 L23.12,8.51 L23.58,8.62 L24.04,8.74 L24.48,8.87 L24.92,8.99 L25.35,9.11 L25.77,9.22 L26.18,9.32 L26.58,9.41 L26.97,9.49 L27.35,9.55 L27.73,9.59 L28.09,9.62 L28.46,9.62 L28.81,9.61 L29.17,9.58 L29.52,9.52 L29.87,9.45 L30.22,9.36 L30.57,9.24 L30.92,9.11 L31.28,8.96 L31.64,8.79Z" fill="url(#kg2)"/>
<g clip-path="url(#kc2)"><path d="M32.00,8.61 L32.37,8.41 L32.75,8.20 L33.13,7.98 L33.53,7.75 L33.93,7.52 L34.34,7.29 L34.75,7.07 L35.18,6.86 L35.61,6.67 L36.04,6.52 L36.46,6.44 L36.87,6.46 L37.26,6.59 L37.63,6.81 L37.98,7.10 L38.31,7.43 L38.63,7.78 L38.93,8.14 L39.23,8.51 L39.52,8.87 L39.80,9.23 L40.07,9.57 L40.35,9.91 L40.62,10.23 L40.89,10.54 L41.16,10.83 L41.44,11.10 L41.71,11.36 L42.00,11.60 L42.29,11.81 L42.58,12.01 L42.89,12.20 L43.20,12.36 L43.53,12.50 L43.87,12.63 L44.22,12.75 L44.58,12.85 L44.96,12.94 L45.35,13.01 L45.75,13.08 L46.17,13.13 L46.59,13.19 L47.03,13.23 L47.49,13.28 L47.95,13.33 L48.41,13.38 L48.88,13.45 L49.35,13.52 L49.81,13.63 L50.24,13.76 L50.63,13.95 L50.95,14.20 L51.20,14.53 L51.36,14.93 L51.47,15.37 L51.55,15.83 L51.60,16.30 L51.63,16.77 L51.66,17.24 L51.68,17.70 L51.69,18.16 L51.71,18.60 L51.74,19.04 L51.77,19.46 L51.81,19.86 L51.85,20.26 L51.92,20.64 L51.99,21.01 L52.08,21.37 L52.19,21.71 L52.31,22.05 L52.45,22.38 L52.61,22.69 L52.79,23.00 L52.98,23.31 L53.20,23.61 L53.43,23.90 L53.69,24.19 L53.96,24.48 L54.25,24.77 L54.55,25.06 L54.87,25.36 L55.19,25.66 L55.53,25.96 L55.87,26.27 L56.22,26.59 L56.56,26.91 L56.90,27.25 L57.21,27.60 L57.48,27.96 L57.68,28.34 L57.79,28.74 L57.80,29.15 L57.70,29.57 L57.53,29.99 L57.32,30.41 L57.08,30.82 L56.83,31.22 L56.58,31.61 L56.32,32.00 L56.07,32.38 L55.82,32.75 L55.59,33.11 L55.37,33.47 L55.16,33.82 L54.96,34.17 L54.79,34.52 L54.63,34.86 L54.49,35.20 L54.38,35.54 L54.28,35.89 L54.20,36.23 L54.14,36.59 L54.10,36.94 L54.09,37.30 L54.08,37.67 L54.10,38.05 L54.14,38.43 L54.18,38.82 L54.25,39.23 L54.32,39.64 L54.40,40.07 L54.49,40.50 L54.59,40.94 L54.68,41.40 L54.78,41.86 L54.86,42.32 L54.93,42.79 L54.98,43.26 L54.98,43.71 L54.93,44.14 L54.78,44.53 L54.54,44.86 L54.22,45.14 L53.84,45.38 L53.42,45.59 L52.99,45.79 L52.55,45.97 L52.11,46.13 L51.68,46.30 L51.25,46.45 L50.83,46.61 L50.43,46.76 L50.04,46.92 L49.66,47.09 L49.30,47.25 L48.96,47.43 L48.63,47.62 L48.32,47.81 L48.02,48.02 L47.74,48.24 L47.47,48.47 L47.22,48.72 L46.98,48.99 L46.75,49.27 L46.53,49.57 L46.33,49.88 L46.13,50.21 L45.94,50.56 L45.75,50.92 L45.57,51.30 L45.38,51.69 L45.20,52.10 L45.02,52.51 L44.83,52.93 L44.63,53.36 L44.43,53.79 L44.21,54.21 L43.97,54.61 L43.71,54.98 L43.41,55.30 L43.07,55.53 L42.68,55.65 L42.25,55.69 L41.80,55.66 L41.34,55.59 L40.88,55.49 L40.42,55.38 L39.96,55.26 L39.52,55.13 L39.08,55.01 L38.65,54.89 L38.23,54.78 L37.82,54.68 L37.42,54.59 L37.03,54.51 L36.65,54.45 L36.27,54.41 L35.91,54.38 L35.54,54.38 L35.19,54.39 L34.83,54.42 L34.48,54.48 L34.13,54.55 L33.78,54.64 L33.43,54.76 L33.08,54.89 L32.72,55.04 L32.36,55.21 L32.00,55.39 L31.63,55.59 L31.25,55.80 L30.87,56.02 L30.47,56.25 L30.07,56.48 L29.66,56.71 L29.25,56.93 L28.82,57.14 L28.39,57.33 L27.96,57.48 L27.54,57.56 L27.13,57.54 L26.74,57.41 L26.37,57.19 L26.02,56.90 L25.69,56.57 L25.37,56.22 L25.07,55.86 L24.77,55.49 L24.48,55.13 L24.20,54.77 L23.93,54.43 L23.65,54.09 L23.38,53.77 L23.11,53.46 L22.84,53.17 L22.56,52.90 L22.29,52.64 L22.00,52.40 L21.71,52.19 L21.42,51.99 L21.11,51.80 L20.80,51.64 L20.47,51.50 L20.13,51.37 L19.78,51.25 L19.42,51.15 L19.04,51.06 L18.65,50.99 L18.25,50.92 L17.83,50.87 L17.41,50.81 L16.97,50.77 L16.51,50.72 L16.05,50.67 L15.59,50.62 L15.12,50.55 L14.65,50.48 L14.19,50.37 L13.76,50.24 L13.37,50.05 L13.05,49.80 L12.80,49.47 L12.64,49.07 L12.53,48.63 L12.45,48.17 L12.40,47.70 L12.37,47.23 L12.34,46.76 L12.32,46.30 L12.31,45.84 L12.29,45.40 L12.26,44.96 L12.23,44.54 L12.19,44.14 L12.15,43.74 L12.08,43.36 L12.01,42.99 L11.92,42.63 L11.81,42.29 L11.69,41.95 L11.55,41.62 L11.39,41.31 L11.21,41.00 L11.02,40.69 L10.80,40.39 L10.57,40.10 L10.31,39.81 L10.04,39.52 L9.75,39.23 L9.45,38.94 L9.13,38.64 L8.81,38.34 L8.47,38.04 L8.13,37.73 L7.78,37.41 L7.44,37.09 L7.10,36.75 L6.79,36.40 L6.52,36.04 L6.32,35.66 L6.21,35.26 L6.20,34.85 L6.30,34.43 L6.47,34.01 L6.68,33.59 L6.92,33.18 L7.17,32.78 L7.42,32.39 L7.68,32.00 L7.93,31.62 L8.18,31.25 L8.41,30.89 L8.63,30.53 L8.84,30.18 L9.04,29.83 L9.21,29.48 L9.37,29.14 L9.51,28.80 L9.62,28.46 L9.72,28.11 L9.80,27.77 L9.86,27.41 L9.90,27.06 L9.91,26.70 L9.92,26.33 L9.90,25.95 L9.86,25.57 L9.82,25.18 L9.75,24.77 L9.68,24.36 L9.60,23.93 L9.51,23.50 L9.41,23.06 L9.32,22.60 L9.22,22.14 L9.14,21.68 L9.07,21.21 L9.02,20.74 L9.02,20.29 L9.07,19.86 L9.22,19.47 L9.46,19.14 L9.78,18.86 L10.16,18.62 L10.58,18.41 L11.01,18.21 L11.45,18.03 L11.89,17.87 L12.32,17.70 L12.75,17.55 L13.17,17.39 L13.57,17.24 L13.96,17.08 L14.34,16.91 L14.70,16.75 L15.04,16.57 L15.37,16.38 L15.68,16.19 L15.98,15.98 L16.26,15.76 L16.53,15.53 L16.78,15.28 L17.02,15.01 L17.25,14.73 L17.47,14.43 L17.67,14.12 L17.87,13.79 L18.06,13.44 L18.25,13.08 L18.43,12.70 L18.62,12.31 L18.80,11.90 L18.98,11.49 L19.17,11.07 L19.37,10.64 L19.57,10.21 L19.79,9.79 L20.03,9.39 L20.29,9.02 L20.59,8.70 L20.93,8.47 L21.32,8.35 L21.75,8.31 L22.20,8.34 L22.66,8.41 L23.12,8.51 L23.58,8.62 L24.04,8.74 L24.48,8.87 L24.92,8.99 L25.35,9.11 L25.77,9.22 L26.18,9.32 L26.58,9.41 L26.97,9.49 L27.35,9.55 L27.73,9.59 L28.09,9.62 L28.46,9.62 L28.81,9.61 L29.17,9.58 L29.52,9.52 L29.87,9.45 L30.22,9.36 L30.57,9.24 L30.92,9.11 L31.28,8.96 L31.64,8.79Z" fill="none" stroke="url(#kh2)" stroke-width="4"/><path d="M32.00,8.61 L32.37,8.41 L32.75,8.20 L33.13,7.98 L33.53,7.75 L33.93,7.52 L34.34,7.29 L34.75,7.07 L35.18,6.86 L35.61,6.67 L36.04,6.52 L36.46,6.44 L36.87,6.46 L37.26,6.59 L37.63,6.81 L37.98,7.10 L38.31,7.43 L38.63,7.78 L38.93,8.14 L39.23,8.51 L39.52,8.87 L39.80,9.23 L40.07,9.57 L40.35,9.91 L40.62,10.23 L40.89,10.54 L41.16,10.83 L41.44,11.10 L41.71,11.36 L42.00,11.60 L42.29,11.81 L42.58,12.01 L42.89,12.20 L43.20,12.36 L43.53,12.50 L43.87,12.63 L44.22,12.75 L44.58,12.85 L44.96,12.94 L45.35,13.01 L45.75,13.08 L46.17,13.13 L46.59,13.19 L47.03,13.23 L47.49,13.28 L47.95,13.33 L48.41,13.38 L48.88,13.45 L49.35,13.52 L49.81,13.63 L50.24,13.76 L50.63,13.95 L50.95,14.20 L51.20,14.53 L51.36,14.93 L51.47,15.37 L51.55,15.83 L51.60,16.30 L51.63,16.77 L51.66,17.24 L51.68,17.70 L51.69,18.16 L51.71,18.60 L51.74,19.04 L51.77,19.46 L51.81,19.86 L51.85,20.26 L51.92,20.64 L51.99,21.01 L52.08,21.37 L52.19,21.71 L52.31,22.05 L52.45,22.38 L52.61,22.69 L52.79,23.00 L52.98,23.31 L53.20,23.61 L53.43,23.90 L53.69,24.19 L53.96,24.48 L54.25,24.77 L54.55,25.06 L54.87,25.36 L55.19,25.66 L55.53,25.96 L55.87,26.27 L56.22,26.59 L56.56,26.91 L56.90,27.25 L57.21,27.60 L57.48,27.96 L57.68,28.34 L57.79,28.74 L57.80,29.15 L57.70,29.57 L57.53,29.99 L57.32,30.41 L57.08,30.82 L56.83,31.22 L56.58,31.61 L56.32,32.00 L56.07,32.38 L55.82,32.75 L55.59,33.11 L55.37,33.47 L55.16,33.82 L54.96,34.17 L54.79,34.52 L54.63,34.86 L54.49,35.20 L54.38,35.54 L54.28,35.89 L54.20,36.23 L54.14,36.59 L54.10,36.94 L54.09,37.30 L54.08,37.67 L54.10,38.05 L54.14,38.43 L54.18,38.82 L54.25,39.23 L54.32,39.64 L54.40,40.07 L54.49,40.50 L54.59,40.94 L54.68,41.40 L54.78,41.86 L54.86,42.32 L54.93,42.79 L54.98,43.26 L54.98,43.71 L54.93,44.14 L54.78,44.53 L54.54,44.86 L54.22,45.14 L53.84,45.38 L53.42,45.59 L52.99,45.79 L52.55,45.97 L52.11,46.13 L51.68,46.30 L51.25,46.45 L50.83,46.61 L50.43,46.76 L50.04,46.92 L49.66,47.09 L49.30,47.25 L48.96,47.43 L48.63,47.62 L48.32,47.81 L48.02,48.02 L47.74,48.24 L47.47,48.47 L47.22,48.72 L46.98,48.99 L46.75,49.27 L46.53,49.57 L46.33,49.88 L46.13,50.21 L45.94,50.56 L45.75,50.92 L45.57,51.30 L45.38,51.69 L45.20,52.10 L45.02,52.51 L44.83,52.93 L44.63,53.36 L44.43,53.79 L44.21,54.21 L43.97,54.61 L43.71,54.98 L43.41,55.30 L43.07,55.53 L42.68,55.65 L42.25,55.69 L41.80,55.66 L41.34,55.59 L40.88,55.49 L40.42,55.38 L39.96,55.26 L39.52,55.13 L39.08,55.01 L38.65,54.89 L38.23,54.78 L37.82,54.68 L37.42,54.59 L37.03,54.51 L36.65,54.45 L36.27,54.41 L35.91,54.38 L35.54,54.38 L35.19,54.39 L34.83,54.42 L34.48,54.48 L34.13,54.55 L33.78,54.64 L33.43,54.76 L33.08,54.89 L32.72,55.04 L32.36,55.21 L32.00,55.39 L31.63,55.59 L31.25,55.80 L30.87,56.02 L30.47,56.25 L30.07,56.48 L29.66,56.71 L29.25,56.93 L28.82,57.14 L28.39,57.33 L27.96,57.48 L27.54,57.56 L27.13,57.54 L26.74,57.41 L26.37,57.19 L26.02,56.90 L25.69,56.57 L25.37,56.22 L25.07,55.86 L24.77,55.49 L24.48,55.13 L24.20,54.77 L23.93,54.43 L23.65,54.09 L23.38,53.77 L23.11,53.46 L22.84,53.17 L22.56,52.90 L22.29,52.64 L22.00,52.40 L21.71,52.19 L21.42,51.99 L21.11,51.80 L20.80,51.64 L20.47,51.50 L20.13,51.37 L19.78,51.25 L19.42,51.15 L19.04,51.06 L18.65,50.99 L18.25,50.92 L17.83,50.87 L17.41,50.81 L16.97,50.77 L16.51,50.72 L16.05,50.67 L15.59,50.62 L15.12,50.55 L14.65,50.48 L14.19,50.37 L13.76,50.24 L13.37,50.05 L13.05,49.80 L12.80,49.47 L12.64,49.07 L12.53,48.63 L12.45,48.17 L12.40,47.70 L12.37,47.23 L12.34,46.76 L12.32,46.30 L12.31,45.84 L12.29,45.40 L12.26,44.96 L12.23,44.54 L12.19,44.14 L12.15,43.74 L12.08,43.36 L12.01,42.99 L11.92,42.63 L11.81,42.29 L11.69,41.95 L11.55,41.62 L11.39,41.31 L11.21,41.00 L11.02,40.69 L10.80,40.39 L10.57,40.10 L10.31,39.81 L10.04,39.52 L9.75,39.23 L9.45,38.94 L9.13,38.64 L8.81,38.34 L8.47,38.04 L8.13,37.73 L7.78,37.41 L7.44,37.09 L7.10,36.75 L6.79,36.40 L6.52,36.04 L6.32,35.66 L6.21,35.26 L6.20,34.85 L6.30,34.43 L6.47,34.01 L6.68,33.59 L6.92,33.18 L7.17,32.78 L7.42,32.39 L7.68,32.00 L7.93,31.62 L8.18,31.25 L8.41,30.89 L8.63,30.53 L8.84,30.18 L9.04,29.83 L9.21,29.48 L9.37,29.14 L9.51,28.80 L9.62,28.46 L9.72,28.11 L9.80,27.77 L9.86,27.41 L9.90,27.06 L9.91,26.70 L9.92,26.33 L9.90,25.95 L9.86,25.57 L9.82,25.18 L9.75,24.77 L9.68,24.36 L9.60,23.93 L9.51,23.50 L9.41,23.06 L9.32,22.60 L9.22,22.14 L9.14,21.68 L9.07,21.21 L9.02,20.74 L9.02,20.29 L9.07,19.86 L9.22,19.47 L9.46,19.14 L9.78,18.86 L10.16,18.62 L10.58,18.41 L11.01,18.21 L11.45,18.03 L11.89,17.87 L12.32,17.70 L12.75,17.55 L13.17,17.39 L13.57,17.24 L13.96,17.08 L14.34,16.91 L14.70,16.75 L15.04,16.57 L15.37,16.38 L15.68,16.19 L15.98,15.98 L16.26,15.76 L16.53,15.53 L16.78,15.28 L17.02,15.01 L17.25,14.73 L17.47,14.43 L17.67,14.12 L17.87,13.79 L18.06,13.44 L18.25,13.08 L18.43,12.70 L18.62,12.31 L18.80,11.90 L18.98,11.49 L19.17,11.07 L19.37,10.64 L19.57,10.21 L19.79,9.79 L20.03,9.39 L20.29,9.02 L20.59,8.70 L20.93,8.47 L21.32,8.35 L21.75,8.31 L22.20,8.34 L22.66,8.41 L23.12,8.51 L23.58,8.62 L24.04,8.74 L24.48,8.87 L24.92,8.99 L25.35,9.11 L25.77,9.22 L26.18,9.32 L26.58,9.41 L26.97,9.49 L27.35,9.55 L27.73,9.59 L28.09,9.62 L28.46,9.62 L28.81,9.61 L29.17,9.58 L29.52,9.52 L29.87,9.45 L30.22,9.36 L30.57,9.24 L30.92,9.11 L31.28,8.96 L31.64,8.79Z" fill="none" stroke="url(#kd2)" stroke-width="3"/>
<circle cx="33" cy="33.5" r="19" fill="#500010" opacity="0.75" filter="url(#ke2)"/></g>
</svg>
<div style="left:794.5px;top:332.5px;width:35px;height:35px;border-radius:50%;background:conic-gradient(from 0deg,#b4b4b6 0deg,#e0e0e0 40deg,#d8e2ec 80deg,#88a8d0 130deg,#c4d8ee 175deg,#9cacbe 215deg,#6a7078 268deg,#808286 312deg,#b4b4b6 360deg);box-shadow:inset -1px -1px 0 0.2px rgba(255,255,255,0.7),inset 1px 1px 0 0 rgba(70,70,80,0.6),0 0 0 0.5px rgba(60,0,0,0.5)"></div>
<div style="left:825.8px;top:332.8px;width:4.4px;height:4.4px;border-radius:50%;background:#fff;box-shadow:0 0 0 0.8px #333"></div>
<svg style="left:780px;top:382px" width="64" height="64" viewBox="0 0 64 64"><defs>
<linearGradient id="ko3" x1="0.15" y1="0.1" x2="0.85" y2="0.9"><stop offset="0" stop-color="#dc5a64"/><stop offset="0.35" stop-color="#c43442"/><stop offset="0.58" stop-color="#9c1c32"/><stop offset="0.76" stop-color="#6c1a3a"/><stop offset="0.9" stop-color="#383a84"/><stop offset="1" stop-color="#1a52b4"/></linearGradient>
<radialGradient id="kr3" cx="0.5" cy="0.5" r="0.5"><stop offset="0.62" stop-color="#400008" stop-opacity="0.35"/><stop offset="0.8" stop-color="#400008" stop-opacity="0.05"/><stop offset="0.9" stop-color="#ff9090" stop-opacity="0.06"/><stop offset="1" stop-color="#400008" stop-opacity="0.3"/></radialGradient>
<linearGradient id="kg3" x1="0.2" y1="0.08" x2="0.8" y2="0.92"><stop offset="0" stop-color="#ff7c7c"/><stop offset="0.28" stop-color="#f03c46"/><stop offset="0.5" stop-color="#d41c2c"/><stop offset="0.72" stop-color="#a00e20"/><stop offset="1" stop-color="#4c0616"/></linearGradient>
<linearGradient id="kh3" x1="0.1" y1="0.1" x2="0.7" y2="0.7"><stop offset="0" stop-color="#ffb0b0" stop-opacity="0.9"/><stop offset="0.6" stop-color="#ff9090" stop-opacity="0"/></linearGradient>
<linearGradient id="kd3" x1="0.3" y1="0.3" x2="0.9" y2="0.9"><stop offset="0.4" stop-color="#400010" stop-opacity="0"/><stop offset="1" stop-color="#400010" stop-opacity="0.8"/></linearGradient>
<clipPath id="kc3"><path d="M32.00,7.01 L32.39,7.28 L32.77,7.55 L33.14,7.82 L33.50,8.08 L33.86,8.34 L34.21,8.58 L34.56,8.81 L34.90,9.03 L35.24,9.23 L35.58,9.41 L35.91,9.57 L36.25,9.71 L36.59,9.84 L36.93,9.94 L37.28,10.02 L37.63,10.09 L37.98,10.13 L38.35,10.15 L38.72,10.16 L39.10,10.15 L39.49,10.13 L39.89,10.09 L40.30,10.04 L40.72,9.98 L41.15,9.91 L41.59,9.83 L42.04,9.76 L42.50,9.68 L42.97,9.61 L43.44,9.55 L43.91,9.50 L44.37,9.49 L44.82,9.53 L45.22,9.64 L45.58,9.84 L45.88,10.13 L46.13,10.49 L46.34,10.90 L46.52,11.34 L46.69,11.78 L46.85,12.23 L46.99,12.67 L47.14,13.11 L47.28,13.53 L47.41,13.95 L47.56,14.36 L47.70,14.75 L47.85,15.12 L48.01,15.48 L48.17,15.83 L48.35,16.16 L48.54,16.47 L48.74,16.77 L48.96,17.05 L49.19,17.32 L49.43,17.58 L49.70,17.82 L49.97,18.06 L50.27,18.28 L50.58,18.50 L50.91,18.71 L51.26,18.91 L51.62,19.11 L52.00,19.31 L52.39,19.51 L52.79,19.70 L53.20,19.91 L53.62,20.12 L54.04,20.33 L54.45,20.56 L54.86,20.80 L55.24,21.06 L55.58,21.35 L55.84,21.68 L56.01,22.05 L56.08,22.47 L56.07,22.90 L56.00,23.36 L55.90,23.82 L55.77,24.28 L55.63,24.73 L55.49,25.17 L55.35,25.61 L55.21,26.04 L55.08,26.46 L54.96,26.87 L54.84,27.27 L54.74,27.66 L54.66,28.05 L54.59,28.42 L54.54,28.79 L54.51,29.16 L54.50,29.52 L54.50,29.87 L54.53,30.23 L54.58,30.58 L54.65,30.93 L54.74,31.29 L54.85,31.64 L54.97,32.00 L55.12,32.36 L55.28,32.73 L55.45,33.11 L55.64,33.49 L55.84,33.88 L56.05,34.27 L56.26,34.68 L56.47,35.09 L56.69,35.51 L56.89,35.94 L57.08,36.38 L57.23,36.81 L57.33,37.25 L57.35,37.67 L57.27,38.07 L57.09,38.44 L56.82,38.79 L56.50,39.12 L56.14,39.43 L55.77,39.72 L55.39,40.01 L55.02,40.29 L54.65,40.56 L54.28,40.82 L53.93,41.08 L53.59,41.34 L53.26,41.60 L52.95,41.86 L52.66,42.12 L52.38,42.38 L52.12,42.65 L51.88,42.93 L51.66,43.21 L51.46,43.51 L51.27,43.81 L51.10,44.12 L50.95,44.45 L50.81,44.79 L50.69,45.14 L50.58,45.50 L50.49,45.88 L50.40,46.27 L50.32,46.68 L50.25,47.10 L50.18,47.53 L50.12,47.97 L50.05,48.43 L49.98,48.89 L49.91,49.35 L49.82,49.82 L49.71,50.28 L49.58,50.72 L49.41,51.13 L49.18,51.49 L48.88,51.76 L48.51,51.96 L48.09,52.08 L47.63,52.16 L47.17,52.20 L46.69,52.22 L46.22,52.23 L45.75,52.23 L45.29,52.23 L44.84,52.23 L44.40,52.24 L43.97,52.25 L43.56,52.26 L43.15,52.29 L42.76,52.33 L42.38,52.38 L42.02,52.45 L41.66,52.53 L41.31,52.63 L40.98,52.75 L40.65,52.88 L40.33,53.04 L40.01,53.21 L39.71,53.40 L39.40,53.62 L39.10,53.85 L38.80,54.10 L38.50,54.36 L38.20,54.65 L37.89,54.94 L37.58,55.25 L37.27,55.57 L36.95,55.90 L36.62,56.23 L36.29,56.56 L35.94,56.89 L35.59,57.20 L35.22,57.48 L34.84,57.71 L34.44,57.86 L34.04,57.91 L33.63,57.85 L33.21,57.70 L32.80,57.50 L32.40,57.26 L32.00,56.99 L31.61,56.72 L31.23,56.45 L30.86,56.18 L30.50,55.92 L30.14,55.66 L29.79,55.42 L29.44,55.19 L29.10,54.97 L28.76,54.77 L28.42,54.59 L28.09,54.43 L27.75,54.29 L27.41,54.16 L27.07,54.06 L26.72,53.98 L26.37,53.91 L26.02,53.87 L25.65,53.85 L25.28,53.84 L24.90,53.85 L24.51,53.87 L24.11,53.91 L23.70,53.96 L23.28,54.02 L22.85,54.09 L22.41,54.17 L21.96,54.24 L21.50,54.32 L21.03,54.39 L20.56,54.45 L20.09,54.50 L19.63,54.51 L19.18,54.47 L18.78,54.36 L18.42,54.16 L18.12,53.87 L17.87,53.51 L17.66,53.10 L17.48,52.66 L17.31,52.22 L17.15,51.77 L17.01,51.33 L16.86,50.89 L16.72,50.47 L16.59,50.05 L16.44,49.64 L16.30,49.25 L16.15,48.88 L15.99,48.52 L15.83,48.17 L15.65,47.84 L15.46,47.53 L15.26,47.23 L15.04,46.95 L14.81,46.68 L14.57,46.42 L14.30,46.18 L14.03,45.94 L13.73,45.72 L13.42,45.50 L13.09,45.29 L12.74,45.09 L12.38,44.89 L12.00,44.69 L11.61,44.49 L11.21,44.30 L10.80,44.09 L10.38,43.88 L9.96,43.67 L9.55,43.44 L9.14,43.20 L8.76,42.94 L8.42,42.65 L8.16,42.32 L7.99,41.95 L7.92,41.53 L7.93,41.10 L8.00,40.64 L8.10,40.18 L8.23,39.72 L8.37,39.27 L8.51,38.83 L8.65,38.39 L8.79,37.96 L8.92,37.54 L9.04,37.13 L9.16,36.73 L9.26,36.34 L9.34,35.95 L9.41,35.58 L9.46,35.21 L9.49,34.84 L9.50,34.48 L9.50,34.13 L9.47,33.77 L9.42,33.42 L9.35,33.07 L9.26,32.71 L9.15,32.36 L9.03,32.00 L8.88,31.64 L8.72,31.27 L8.55,30.89 L8.36,30.51 L8.16,30.12 L7.95,29.73 L7.74,29.32 L7.53,28.91 L7.31,28.49 L7.11,28.06 L6.92,27.62 L6.77,27.19 L6.67,26.75 L6.65,26.33 L6.73,25.93 L6.91,25.56 L7.18,25.21 L7.50,24.88 L7.86,24.57 L8.23,24.28 L8.61,23.99 L8.98,23.71 L9.35,23.44 L9.72,23.18 L10.07,22.92 L10.41,22.66 L10.74,22.40 L11.05,22.14 L11.34,21.88 L11.62,21.62 L11.88,21.35 L12.12,21.07 L12.34,20.79 L12.54,20.49 L12.73,20.19 L12.90,19.88 L13.05,19.55 L13.19,19.21 L13.31,18.86 L13.42,18.50 L13.51,18.12 L13.60,17.73 L13.68,17.32 L13.75,16.90 L13.82,16.47 L13.88,16.03 L13.95,15.57 L14.02,15.11 L14.09,14.65 L14.18,14.18 L14.29,13.72 L14.42,13.28 L14.59,12.87 L14.82,12.51 L15.12,12.24 L15.49,12.04 L15.91,11.92 L16.37,11.84 L16.83,11.80 L17.31,11.78 L17.78,11.77 L18.25,11.77 L18.71,11.77 L19.16,11.77 L19.60,11.76 L20.03,11.75 L20.44,11.74 L20.85,11.71 L21.24,11.67 L21.62,11.62 L21.98,11.55 L22.34,11.47 L22.69,11.37 L23.02,11.25 L23.35,11.12 L23.67,10.96 L23.99,10.79 L24.29,10.60 L24.60,10.38 L24.90,10.15 L25.20,9.90 L25.50,9.64 L25.80,9.35 L26.11,9.06 L26.42,8.75 L26.73,8.43 L27.05,8.10 L27.38,7.77 L27.71,7.44 L28.06,7.11 L28.41,6.80 L28.78,6.52 L29.16,6.29 L29.56,6.14 L29.96,6.09 L30.37,6.15 L30.79,6.30 L31.20,6.50 L31.60,6.74Z"/></clipPath>
<filter id="kb3" x="-30%" y="-30%" width="160%" height="160%"><feGaussianBlur stdDeviation="1.8"/></filter>
<filter id="ke3" x="-30%" y="-30%" width="160%" height="160%"><feGaussianBlur stdDeviation="1.1"/></filter>
</defs>
<circle cx="32" cy="32" r="31.7" fill="url(#ko3)"/>
<circle cx="32" cy="32" r="31.7" fill="url(#kr3)"/>
<path d="M32.00,7.01 L32.39,7.28 L32.77,7.55 L33.14,7.82 L33.50,8.08 L33.86,8.34 L34.21,8.58 L34.56,8.81 L34.90,9.03 L35.24,9.23 L35.58,9.41 L35.91,9.57 L36.25,9.71 L36.59,9.84 L36.93,9.94 L37.28,10.02 L37.63,10.09 L37.98,10.13 L38.35,10.15 L38.72,10.16 L39.10,10.15 L39.49,10.13 L39.89,10.09 L40.30,10.04 L40.72,9.98 L41.15,9.91 L41.59,9.83 L42.04,9.76 L42.50,9.68 L42.97,9.61 L43.44,9.55 L43.91,9.50 L44.37,9.49 L44.82,9.53 L45.22,9.64 L45.58,9.84 L45.88,10.13 L46.13,10.49 L46.34,10.90 L46.52,11.34 L46.69,11.78 L46.85,12.23 L46.99,12.67 L47.14,13.11 L47.28,13.53 L47.41,13.95 L47.56,14.36 L47.70,14.75 L47.85,15.12 L48.01,15.48 L48.17,15.83 L48.35,16.16 L48.54,16.47 L48.74,16.77 L48.96,17.05 L49.19,17.32 L49.43,17.58 L49.70,17.82 L49.97,18.06 L50.27,18.28 L50.58,18.50 L50.91,18.71 L51.26,18.91 L51.62,19.11 L52.00,19.31 L52.39,19.51 L52.79,19.70 L53.20,19.91 L53.62,20.12 L54.04,20.33 L54.45,20.56 L54.86,20.80 L55.24,21.06 L55.58,21.35 L55.84,21.68 L56.01,22.05 L56.08,22.47 L56.07,22.90 L56.00,23.36 L55.90,23.82 L55.77,24.28 L55.63,24.73 L55.49,25.17 L55.35,25.61 L55.21,26.04 L55.08,26.46 L54.96,26.87 L54.84,27.27 L54.74,27.66 L54.66,28.05 L54.59,28.42 L54.54,28.79 L54.51,29.16 L54.50,29.52 L54.50,29.87 L54.53,30.23 L54.58,30.58 L54.65,30.93 L54.74,31.29 L54.85,31.64 L54.97,32.00 L55.12,32.36 L55.28,32.73 L55.45,33.11 L55.64,33.49 L55.84,33.88 L56.05,34.27 L56.26,34.68 L56.47,35.09 L56.69,35.51 L56.89,35.94 L57.08,36.38 L57.23,36.81 L57.33,37.25 L57.35,37.67 L57.27,38.07 L57.09,38.44 L56.82,38.79 L56.50,39.12 L56.14,39.43 L55.77,39.72 L55.39,40.01 L55.02,40.29 L54.65,40.56 L54.28,40.82 L53.93,41.08 L53.59,41.34 L53.26,41.60 L52.95,41.86 L52.66,42.12 L52.38,42.38 L52.12,42.65 L51.88,42.93 L51.66,43.21 L51.46,43.51 L51.27,43.81 L51.10,44.12 L50.95,44.45 L50.81,44.79 L50.69,45.14 L50.58,45.50 L50.49,45.88 L50.40,46.27 L50.32,46.68 L50.25,47.10 L50.18,47.53 L50.12,47.97 L50.05,48.43 L49.98,48.89 L49.91,49.35 L49.82,49.82 L49.71,50.28 L49.58,50.72 L49.41,51.13 L49.18,51.49 L48.88,51.76 L48.51,51.96 L48.09,52.08 L47.63,52.16 L47.17,52.20 L46.69,52.22 L46.22,52.23 L45.75,52.23 L45.29,52.23 L44.84,52.23 L44.40,52.24 L43.97,52.25 L43.56,52.26 L43.15,52.29 L42.76,52.33 L42.38,52.38 L42.02,52.45 L41.66,52.53 L41.31,52.63 L40.98,52.75 L40.65,52.88 L40.33,53.04 L40.01,53.21 L39.71,53.40 L39.40,53.62 L39.10,53.85 L38.80,54.10 L38.50,54.36 L38.20,54.65 L37.89,54.94 L37.58,55.25 L37.27,55.57 L36.95,55.90 L36.62,56.23 L36.29,56.56 L35.94,56.89 L35.59,57.20 L35.22,57.48 L34.84,57.71 L34.44,57.86 L34.04,57.91 L33.63,57.85 L33.21,57.70 L32.80,57.50 L32.40,57.26 L32.00,56.99 L31.61,56.72 L31.23,56.45 L30.86,56.18 L30.50,55.92 L30.14,55.66 L29.79,55.42 L29.44,55.19 L29.10,54.97 L28.76,54.77 L28.42,54.59 L28.09,54.43 L27.75,54.29 L27.41,54.16 L27.07,54.06 L26.72,53.98 L26.37,53.91 L26.02,53.87 L25.65,53.85 L25.28,53.84 L24.90,53.85 L24.51,53.87 L24.11,53.91 L23.70,53.96 L23.28,54.02 L22.85,54.09 L22.41,54.17 L21.96,54.24 L21.50,54.32 L21.03,54.39 L20.56,54.45 L20.09,54.50 L19.63,54.51 L19.18,54.47 L18.78,54.36 L18.42,54.16 L18.12,53.87 L17.87,53.51 L17.66,53.10 L17.48,52.66 L17.31,52.22 L17.15,51.77 L17.01,51.33 L16.86,50.89 L16.72,50.47 L16.59,50.05 L16.44,49.64 L16.30,49.25 L16.15,48.88 L15.99,48.52 L15.83,48.17 L15.65,47.84 L15.46,47.53 L15.26,47.23 L15.04,46.95 L14.81,46.68 L14.57,46.42 L14.30,46.18 L14.03,45.94 L13.73,45.72 L13.42,45.50 L13.09,45.29 L12.74,45.09 L12.38,44.89 L12.00,44.69 L11.61,44.49 L11.21,44.30 L10.80,44.09 L10.38,43.88 L9.96,43.67 L9.55,43.44 L9.14,43.20 L8.76,42.94 L8.42,42.65 L8.16,42.32 L7.99,41.95 L7.92,41.53 L7.93,41.10 L8.00,40.64 L8.10,40.18 L8.23,39.72 L8.37,39.27 L8.51,38.83 L8.65,38.39 L8.79,37.96 L8.92,37.54 L9.04,37.13 L9.16,36.73 L9.26,36.34 L9.34,35.95 L9.41,35.58 L9.46,35.21 L9.49,34.84 L9.50,34.48 L9.50,34.13 L9.47,33.77 L9.42,33.42 L9.35,33.07 L9.26,32.71 L9.15,32.36 L9.03,32.00 L8.88,31.64 L8.72,31.27 L8.55,30.89 L8.36,30.51 L8.16,30.12 L7.95,29.73 L7.74,29.32 L7.53,28.91 L7.31,28.49 L7.11,28.06 L6.92,27.62 L6.77,27.19 L6.67,26.75 L6.65,26.33 L6.73,25.93 L6.91,25.56 L7.18,25.21 L7.50,24.88 L7.86,24.57 L8.23,24.28 L8.61,23.99 L8.98,23.71 L9.35,23.44 L9.72,23.18 L10.07,22.92 L10.41,22.66 L10.74,22.40 L11.05,22.14 L11.34,21.88 L11.62,21.62 L11.88,21.35 L12.12,21.07 L12.34,20.79 L12.54,20.49 L12.73,20.19 L12.90,19.88 L13.05,19.55 L13.19,19.21 L13.31,18.86 L13.42,18.50 L13.51,18.12 L13.60,17.73 L13.68,17.32 L13.75,16.90 L13.82,16.47 L13.88,16.03 L13.95,15.57 L14.02,15.11 L14.09,14.65 L14.18,14.18 L14.29,13.72 L14.42,13.28 L14.59,12.87 L14.82,12.51 L15.12,12.24 L15.49,12.04 L15.91,11.92 L16.37,11.84 L16.83,11.80 L17.31,11.78 L17.78,11.77 L18.25,11.77 L18.71,11.77 L19.16,11.77 L19.60,11.76 L20.03,11.75 L20.44,11.74 L20.85,11.71 L21.24,11.67 L21.62,11.62 L21.98,11.55 L22.34,11.47 L22.69,11.37 L23.02,11.25 L23.35,11.12 L23.67,10.96 L23.99,10.79 L24.29,10.60 L24.60,10.38 L24.90,10.15 L25.20,9.90 L25.50,9.64 L25.80,9.35 L26.11,9.06 L26.42,8.75 L26.73,8.43 L27.05,8.10 L27.38,7.77 L27.71,7.44 L28.06,7.11 L28.41,6.80 L28.78,6.52 L29.16,6.29 L29.56,6.14 L29.96,6.09 L30.37,6.15 L30.79,6.30 L31.20,6.50 L31.60,6.74Z" transform="translate(2,2.5)" fill="#200410" opacity="0.85" filter="url(#kb3)"/>
<path d="M32.00,7.01 L32.39,7.28 L32.77,7.55 L33.14,7.82 L33.50,8.08 L33.86,8.34 L34.21,8.58 L34.56,8.81 L34.90,9.03 L35.24,9.23 L35.58,9.41 L35.91,9.57 L36.25,9.71 L36.59,9.84 L36.93,9.94 L37.28,10.02 L37.63,10.09 L37.98,10.13 L38.35,10.15 L38.72,10.16 L39.10,10.15 L39.49,10.13 L39.89,10.09 L40.30,10.04 L40.72,9.98 L41.15,9.91 L41.59,9.83 L42.04,9.76 L42.50,9.68 L42.97,9.61 L43.44,9.55 L43.91,9.50 L44.37,9.49 L44.82,9.53 L45.22,9.64 L45.58,9.84 L45.88,10.13 L46.13,10.49 L46.34,10.90 L46.52,11.34 L46.69,11.78 L46.85,12.23 L46.99,12.67 L47.14,13.11 L47.28,13.53 L47.41,13.95 L47.56,14.36 L47.70,14.75 L47.85,15.12 L48.01,15.48 L48.17,15.83 L48.35,16.16 L48.54,16.47 L48.74,16.77 L48.96,17.05 L49.19,17.32 L49.43,17.58 L49.70,17.82 L49.97,18.06 L50.27,18.28 L50.58,18.50 L50.91,18.71 L51.26,18.91 L51.62,19.11 L52.00,19.31 L52.39,19.51 L52.79,19.70 L53.20,19.91 L53.62,20.12 L54.04,20.33 L54.45,20.56 L54.86,20.80 L55.24,21.06 L55.58,21.35 L55.84,21.68 L56.01,22.05 L56.08,22.47 L56.07,22.90 L56.00,23.36 L55.90,23.82 L55.77,24.28 L55.63,24.73 L55.49,25.17 L55.35,25.61 L55.21,26.04 L55.08,26.46 L54.96,26.87 L54.84,27.27 L54.74,27.66 L54.66,28.05 L54.59,28.42 L54.54,28.79 L54.51,29.16 L54.50,29.52 L54.50,29.87 L54.53,30.23 L54.58,30.58 L54.65,30.93 L54.74,31.29 L54.85,31.64 L54.97,32.00 L55.12,32.36 L55.28,32.73 L55.45,33.11 L55.64,33.49 L55.84,33.88 L56.05,34.27 L56.26,34.68 L56.47,35.09 L56.69,35.51 L56.89,35.94 L57.08,36.38 L57.23,36.81 L57.33,37.25 L57.35,37.67 L57.27,38.07 L57.09,38.44 L56.82,38.79 L56.50,39.12 L56.14,39.43 L55.77,39.72 L55.39,40.01 L55.02,40.29 L54.65,40.56 L54.28,40.82 L53.93,41.08 L53.59,41.34 L53.26,41.60 L52.95,41.86 L52.66,42.12 L52.38,42.38 L52.12,42.65 L51.88,42.93 L51.66,43.21 L51.46,43.51 L51.27,43.81 L51.10,44.12 L50.95,44.45 L50.81,44.79 L50.69,45.14 L50.58,45.50 L50.49,45.88 L50.40,46.27 L50.32,46.68 L50.25,47.10 L50.18,47.53 L50.12,47.97 L50.05,48.43 L49.98,48.89 L49.91,49.35 L49.82,49.82 L49.71,50.28 L49.58,50.72 L49.41,51.13 L49.18,51.49 L48.88,51.76 L48.51,51.96 L48.09,52.08 L47.63,52.16 L47.17,52.20 L46.69,52.22 L46.22,52.23 L45.75,52.23 L45.29,52.23 L44.84,52.23 L44.40,52.24 L43.97,52.25 L43.56,52.26 L43.15,52.29 L42.76,52.33 L42.38,52.38 L42.02,52.45 L41.66,52.53 L41.31,52.63 L40.98,52.75 L40.65,52.88 L40.33,53.04 L40.01,53.21 L39.71,53.40 L39.40,53.62 L39.10,53.85 L38.80,54.10 L38.50,54.36 L38.20,54.65 L37.89,54.94 L37.58,55.25 L37.27,55.57 L36.95,55.90 L36.62,56.23 L36.29,56.56 L35.94,56.89 L35.59,57.20 L35.22,57.48 L34.84,57.71 L34.44,57.86 L34.04,57.91 L33.63,57.85 L33.21,57.70 L32.80,57.50 L32.40,57.26 L32.00,56.99 L31.61,56.72 L31.23,56.45 L30.86,56.18 L30.50,55.92 L30.14,55.66 L29.79,55.42 L29.44,55.19 L29.10,54.97 L28.76,54.77 L28.42,54.59 L28.09,54.43 L27.75,54.29 L27.41,54.16 L27.07,54.06 L26.72,53.98 L26.37,53.91 L26.02,53.87 L25.65,53.85 L25.28,53.84 L24.90,53.85 L24.51,53.87 L24.11,53.91 L23.70,53.96 L23.28,54.02 L22.85,54.09 L22.41,54.17 L21.96,54.24 L21.50,54.32 L21.03,54.39 L20.56,54.45 L20.09,54.50 L19.63,54.51 L19.18,54.47 L18.78,54.36 L18.42,54.16 L18.12,53.87 L17.87,53.51 L17.66,53.10 L17.48,52.66 L17.31,52.22 L17.15,51.77 L17.01,51.33 L16.86,50.89 L16.72,50.47 L16.59,50.05 L16.44,49.64 L16.30,49.25 L16.15,48.88 L15.99,48.52 L15.83,48.17 L15.65,47.84 L15.46,47.53 L15.26,47.23 L15.04,46.95 L14.81,46.68 L14.57,46.42 L14.30,46.18 L14.03,45.94 L13.73,45.72 L13.42,45.50 L13.09,45.29 L12.74,45.09 L12.38,44.89 L12.00,44.69 L11.61,44.49 L11.21,44.30 L10.80,44.09 L10.38,43.88 L9.96,43.67 L9.55,43.44 L9.14,43.20 L8.76,42.94 L8.42,42.65 L8.16,42.32 L7.99,41.95 L7.92,41.53 L7.93,41.10 L8.00,40.64 L8.10,40.18 L8.23,39.72 L8.37,39.27 L8.51,38.83 L8.65,38.39 L8.79,37.96 L8.92,37.54 L9.04,37.13 L9.16,36.73 L9.26,36.34 L9.34,35.95 L9.41,35.58 L9.46,35.21 L9.49,34.84 L9.50,34.48 L9.50,34.13 L9.47,33.77 L9.42,33.42 L9.35,33.07 L9.26,32.71 L9.15,32.36 L9.03,32.00 L8.88,31.64 L8.72,31.27 L8.55,30.89 L8.36,30.51 L8.16,30.12 L7.95,29.73 L7.74,29.32 L7.53,28.91 L7.31,28.49 L7.11,28.06 L6.92,27.62 L6.77,27.19 L6.67,26.75 L6.65,26.33 L6.73,25.93 L6.91,25.56 L7.18,25.21 L7.50,24.88 L7.86,24.57 L8.23,24.28 L8.61,23.99 L8.98,23.71 L9.35,23.44 L9.72,23.18 L10.07,22.92 L10.41,22.66 L10.74,22.40 L11.05,22.14 L11.34,21.88 L11.62,21.62 L11.88,21.35 L12.12,21.07 L12.34,20.79 L12.54,20.49 L12.73,20.19 L12.90,19.88 L13.05,19.55 L13.19,19.21 L13.31,18.86 L13.42,18.50 L13.51,18.12 L13.60,17.73 L13.68,17.32 L13.75,16.90 L13.82,16.47 L13.88,16.03 L13.95,15.57 L14.02,15.11 L14.09,14.65 L14.18,14.18 L14.29,13.72 L14.42,13.28 L14.59,12.87 L14.82,12.51 L15.12,12.24 L15.49,12.04 L15.91,11.92 L16.37,11.84 L16.83,11.80 L17.31,11.78 L17.78,11.77 L18.25,11.77 L18.71,11.77 L19.16,11.77 L19.60,11.76 L20.03,11.75 L20.44,11.74 L20.85,11.71 L21.24,11.67 L21.62,11.62 L21.98,11.55 L22.34,11.47 L22.69,11.37 L23.02,11.25 L23.35,11.12 L23.67,10.96 L23.99,10.79 L24.29,10.60 L24.60,10.38 L24.90,10.15 L25.20,9.90 L25.50,9.64 L25.80,9.35 L26.11,9.06 L26.42,8.75 L26.73,8.43 L27.05,8.10 L27.38,7.77 L27.71,7.44 L28.06,7.11 L28.41,6.80 L28.78,6.52 L29.16,6.29 L29.56,6.14 L29.96,6.09 L30.37,6.15 L30.79,6.30 L31.20,6.50 L31.60,6.74Z" fill="url(#kg3)"/>
<g clip-path="url(#kc3)"><path d="M32.00,7.01 L32.39,7.28 L32.77,7.55 L33.14,7.82 L33.50,8.08 L33.86,8.34 L34.21,8.58 L34.56,8.81 L34.90,9.03 L35.24,9.23 L35.58,9.41 L35.91,9.57 L36.25,9.71 L36.59,9.84 L36.93,9.94 L37.28,10.02 L37.63,10.09 L37.98,10.13 L38.35,10.15 L38.72,10.16 L39.10,10.15 L39.49,10.13 L39.89,10.09 L40.30,10.04 L40.72,9.98 L41.15,9.91 L41.59,9.83 L42.04,9.76 L42.50,9.68 L42.97,9.61 L43.44,9.55 L43.91,9.50 L44.37,9.49 L44.82,9.53 L45.22,9.64 L45.58,9.84 L45.88,10.13 L46.13,10.49 L46.34,10.90 L46.52,11.34 L46.69,11.78 L46.85,12.23 L46.99,12.67 L47.14,13.11 L47.28,13.53 L47.41,13.95 L47.56,14.36 L47.70,14.75 L47.85,15.12 L48.01,15.48 L48.17,15.83 L48.35,16.16 L48.54,16.47 L48.74,16.77 L48.96,17.05 L49.19,17.32 L49.43,17.58 L49.70,17.82 L49.97,18.06 L50.27,18.28 L50.58,18.50 L50.91,18.71 L51.26,18.91 L51.62,19.11 L52.00,19.31 L52.39,19.51 L52.79,19.70 L53.20,19.91 L53.62,20.12 L54.04,20.33 L54.45,20.56 L54.86,20.80 L55.24,21.06 L55.58,21.35 L55.84,21.68 L56.01,22.05 L56.08,22.47 L56.07,22.90 L56.00,23.36 L55.90,23.82 L55.77,24.28 L55.63,24.73 L55.49,25.17 L55.35,25.61 L55.21,26.04 L55.08,26.46 L54.96,26.87 L54.84,27.27 L54.74,27.66 L54.66,28.05 L54.59,28.42 L54.54,28.79 L54.51,29.16 L54.50,29.52 L54.50,29.87 L54.53,30.23 L54.58,30.58 L54.65,30.93 L54.74,31.29 L54.85,31.64 L54.97,32.00 L55.12,32.36 L55.28,32.73 L55.45,33.11 L55.64,33.49 L55.84,33.88 L56.05,34.27 L56.26,34.68 L56.47,35.09 L56.69,35.51 L56.89,35.94 L57.08,36.38 L57.23,36.81 L57.33,37.25 L57.35,37.67 L57.27,38.07 L57.09,38.44 L56.82,38.79 L56.50,39.12 L56.14,39.43 L55.77,39.72 L55.39,40.01 L55.02,40.29 L54.65,40.56 L54.28,40.82 L53.93,41.08 L53.59,41.34 L53.26,41.60 L52.95,41.86 L52.66,42.12 L52.38,42.38 L52.12,42.65 L51.88,42.93 L51.66,43.21 L51.46,43.51 L51.27,43.81 L51.10,44.12 L50.95,44.45 L50.81,44.79 L50.69,45.14 L50.58,45.50 L50.49,45.88 L50.40,46.27 L50.32,46.68 L50.25,47.10 L50.18,47.53 L50.12,47.97 L50.05,48.43 L49.98,48.89 L49.91,49.35 L49.82,49.82 L49.71,50.28 L49.58,50.72 L49.41,51.13 L49.18,51.49 L48.88,51.76 L48.51,51.96 L48.09,52.08 L47.63,52.16 L47.17,52.20 L46.69,52.22 L46.22,52.23 L45.75,52.23 L45.29,52.23 L44.84,52.23 L44.40,52.24 L43.97,52.25 L43.56,52.26 L43.15,52.29 L42.76,52.33 L42.38,52.38 L42.02,52.45 L41.66,52.53 L41.31,52.63 L40.98,52.75 L40.65,52.88 L40.33,53.04 L40.01,53.21 L39.71,53.40 L39.40,53.62 L39.10,53.85 L38.80,54.10 L38.50,54.36 L38.20,54.65 L37.89,54.94 L37.58,55.25 L37.27,55.57 L36.95,55.90 L36.62,56.23 L36.29,56.56 L35.94,56.89 L35.59,57.20 L35.22,57.48 L34.84,57.71 L34.44,57.86 L34.04,57.91 L33.63,57.85 L33.21,57.70 L32.80,57.50 L32.40,57.26 L32.00,56.99 L31.61,56.72 L31.23,56.45 L30.86,56.18 L30.50,55.92 L30.14,55.66 L29.79,55.42 L29.44,55.19 L29.10,54.97 L28.76,54.77 L28.42,54.59 L28.09,54.43 L27.75,54.29 L27.41,54.16 L27.07,54.06 L26.72,53.98 L26.37,53.91 L26.02,53.87 L25.65,53.85 L25.28,53.84 L24.90,53.85 L24.51,53.87 L24.11,53.91 L23.70,53.96 L23.28,54.02 L22.85,54.09 L22.41,54.17 L21.96,54.24 L21.50,54.32 L21.03,54.39 L20.56,54.45 L20.09,54.50 L19.63,54.51 L19.18,54.47 L18.78,54.36 L18.42,54.16 L18.12,53.87 L17.87,53.51 L17.66,53.10 L17.48,52.66 L17.31,52.22 L17.15,51.77 L17.01,51.33 L16.86,50.89 L16.72,50.47 L16.59,50.05 L16.44,49.64 L16.30,49.25 L16.15,48.88 L15.99,48.52 L15.83,48.17 L15.65,47.84 L15.46,47.53 L15.26,47.23 L15.04,46.95 L14.81,46.68 L14.57,46.42 L14.30,46.18 L14.03,45.94 L13.73,45.72 L13.42,45.50 L13.09,45.29 L12.74,45.09 L12.38,44.89 L12.00,44.69 L11.61,44.49 L11.21,44.30 L10.80,44.09 L10.38,43.88 L9.96,43.67 L9.55,43.44 L9.14,43.20 L8.76,42.94 L8.42,42.65 L8.16,42.32 L7.99,41.95 L7.92,41.53 L7.93,41.10 L8.00,40.64 L8.10,40.18 L8.23,39.72 L8.37,39.27 L8.51,38.83 L8.65,38.39 L8.79,37.96 L8.92,37.54 L9.04,37.13 L9.16,36.73 L9.26,36.34 L9.34,35.95 L9.41,35.58 L9.46,35.21 L9.49,34.84 L9.50,34.48 L9.50,34.13 L9.47,33.77 L9.42,33.42 L9.35,33.07 L9.26,32.71 L9.15,32.36 L9.03,32.00 L8.88,31.64 L8.72,31.27 L8.55,30.89 L8.36,30.51 L8.16,30.12 L7.95,29.73 L7.74,29.32 L7.53,28.91 L7.31,28.49 L7.11,28.06 L6.92,27.62 L6.77,27.19 L6.67,26.75 L6.65,26.33 L6.73,25.93 L6.91,25.56 L7.18,25.21 L7.50,24.88 L7.86,24.57 L8.23,24.28 L8.61,23.99 L8.98,23.71 L9.35,23.44 L9.72,23.18 L10.07,22.92 L10.41,22.66 L10.74,22.40 L11.05,22.14 L11.34,21.88 L11.62,21.62 L11.88,21.35 L12.12,21.07 L12.34,20.79 L12.54,20.49 L12.73,20.19 L12.90,19.88 L13.05,19.55 L13.19,19.21 L13.31,18.86 L13.42,18.50 L13.51,18.12 L13.60,17.73 L13.68,17.32 L13.75,16.90 L13.82,16.47 L13.88,16.03 L13.95,15.57 L14.02,15.11 L14.09,14.65 L14.18,14.18 L14.29,13.72 L14.42,13.28 L14.59,12.87 L14.82,12.51 L15.12,12.24 L15.49,12.04 L15.91,11.92 L16.37,11.84 L16.83,11.80 L17.31,11.78 L17.78,11.77 L18.25,11.77 L18.71,11.77 L19.16,11.77 L19.60,11.76 L20.03,11.75 L20.44,11.74 L20.85,11.71 L21.24,11.67 L21.62,11.62 L21.98,11.55 L22.34,11.47 L22.69,11.37 L23.02,11.25 L23.35,11.12 L23.67,10.96 L23.99,10.79 L24.29,10.60 L24.60,10.38 L24.90,10.15 L25.20,9.90 L25.50,9.64 L25.80,9.35 L26.11,9.06 L26.42,8.75 L26.73,8.43 L27.05,8.10 L27.38,7.77 L27.71,7.44 L28.06,7.11 L28.41,6.80 L28.78,6.52 L29.16,6.29 L29.56,6.14 L29.96,6.09 L30.37,6.15 L30.79,6.30 L31.20,6.50 L31.60,6.74Z" fill="none" stroke="url(#kh3)" stroke-width="4"/><path d="M32.00,7.01 L32.39,7.28 L32.77,7.55 L33.14,7.82 L33.50,8.08 L33.86,8.34 L34.21,8.58 L34.56,8.81 L34.90,9.03 L35.24,9.23 L35.58,9.41 L35.91,9.57 L36.25,9.71 L36.59,9.84 L36.93,9.94 L37.28,10.02 L37.63,10.09 L37.98,10.13 L38.35,10.15 L38.72,10.16 L39.10,10.15 L39.49,10.13 L39.89,10.09 L40.30,10.04 L40.72,9.98 L41.15,9.91 L41.59,9.83 L42.04,9.76 L42.50,9.68 L42.97,9.61 L43.44,9.55 L43.91,9.50 L44.37,9.49 L44.82,9.53 L45.22,9.64 L45.58,9.84 L45.88,10.13 L46.13,10.49 L46.34,10.90 L46.52,11.34 L46.69,11.78 L46.85,12.23 L46.99,12.67 L47.14,13.11 L47.28,13.53 L47.41,13.95 L47.56,14.36 L47.70,14.75 L47.85,15.12 L48.01,15.48 L48.17,15.83 L48.35,16.16 L48.54,16.47 L48.74,16.77 L48.96,17.05 L49.19,17.32 L49.43,17.58 L49.70,17.82 L49.97,18.06 L50.27,18.28 L50.58,18.50 L50.91,18.71 L51.26,18.91 L51.62,19.11 L52.00,19.31 L52.39,19.51 L52.79,19.70 L53.20,19.91 L53.62,20.12 L54.04,20.33 L54.45,20.56 L54.86,20.80 L55.24,21.06 L55.58,21.35 L55.84,21.68 L56.01,22.05 L56.08,22.47 L56.07,22.90 L56.00,23.36 L55.90,23.82 L55.77,24.28 L55.63,24.73 L55.49,25.17 L55.35,25.61 L55.21,26.04 L55.08,26.46 L54.96,26.87 L54.84,27.27 L54.74,27.66 L54.66,28.05 L54.59,28.42 L54.54,28.79 L54.51,29.16 L54.50,29.52 L54.50,29.87 L54.53,30.23 L54.58,30.58 L54.65,30.93 L54.74,31.29 L54.85,31.64 L54.97,32.00 L55.12,32.36 L55.28,32.73 L55.45,33.11 L55.64,33.49 L55.84,33.88 L56.05,34.27 L56.26,34.68 L56.47,35.09 L56.69,35.51 L56.89,35.94 L57.08,36.38 L57.23,36.81 L57.33,37.25 L57.35,37.67 L57.27,38.07 L57.09,38.44 L56.82,38.79 L56.50,39.12 L56.14,39.43 L55.77,39.72 L55.39,40.01 L55.02,40.29 L54.65,40.56 L54.28,40.82 L53.93,41.08 L53.59,41.34 L53.26,41.60 L52.95,41.86 L52.66,42.12 L52.38,42.38 L52.12,42.65 L51.88,42.93 L51.66,43.21 L51.46,43.51 L51.27,43.81 L51.10,44.12 L50.95,44.45 L50.81,44.79 L50.69,45.14 L50.58,45.50 L50.49,45.88 L50.40,46.27 L50.32,46.68 L50.25,47.10 L50.18,47.53 L50.12,47.97 L50.05,48.43 L49.98,48.89 L49.91,49.35 L49.82,49.82 L49.71,50.28 L49.58,50.72 L49.41,51.13 L49.18,51.49 L48.88,51.76 L48.51,51.96 L48.09,52.08 L47.63,52.16 L47.17,52.20 L46.69,52.22 L46.22,52.23 L45.75,52.23 L45.29,52.23 L44.84,52.23 L44.40,52.24 L43.97,52.25 L43.56,52.26 L43.15,52.29 L42.76,52.33 L42.38,52.38 L42.02,52.45 L41.66,52.53 L41.31,52.63 L40.98,52.75 L40.65,52.88 L40.33,53.04 L40.01,53.21 L39.71,53.40 L39.40,53.62 L39.10,53.85 L38.80,54.10 L38.50,54.36 L38.20,54.65 L37.89,54.94 L37.58,55.25 L37.27,55.57 L36.95,55.90 L36.62,56.23 L36.29,56.56 L35.94,56.89 L35.59,57.20 L35.22,57.48 L34.84,57.71 L34.44,57.86 L34.04,57.91 L33.63,57.85 L33.21,57.70 L32.80,57.50 L32.40,57.26 L32.00,56.99 L31.61,56.72 L31.23,56.45 L30.86,56.18 L30.50,55.92 L30.14,55.66 L29.79,55.42 L29.44,55.19 L29.10,54.97 L28.76,54.77 L28.42,54.59 L28.09,54.43 L27.75,54.29 L27.41,54.16 L27.07,54.06 L26.72,53.98 L26.37,53.91 L26.02,53.87 L25.65,53.85 L25.28,53.84 L24.90,53.85 L24.51,53.87 L24.11,53.91 L23.70,53.96 L23.28,54.02 L22.85,54.09 L22.41,54.17 L21.96,54.24 L21.50,54.32 L21.03,54.39 L20.56,54.45 L20.09,54.50 L19.63,54.51 L19.18,54.47 L18.78,54.36 L18.42,54.16 L18.12,53.87 L17.87,53.51 L17.66,53.10 L17.48,52.66 L17.31,52.22 L17.15,51.77 L17.01,51.33 L16.86,50.89 L16.72,50.47 L16.59,50.05 L16.44,49.64 L16.30,49.25 L16.15,48.88 L15.99,48.52 L15.83,48.17 L15.65,47.84 L15.46,47.53 L15.26,47.23 L15.04,46.95 L14.81,46.68 L14.57,46.42 L14.30,46.18 L14.03,45.94 L13.73,45.72 L13.42,45.50 L13.09,45.29 L12.74,45.09 L12.38,44.89 L12.00,44.69 L11.61,44.49 L11.21,44.30 L10.80,44.09 L10.38,43.88 L9.96,43.67 L9.55,43.44 L9.14,43.20 L8.76,42.94 L8.42,42.65 L8.16,42.32 L7.99,41.95 L7.92,41.53 L7.93,41.10 L8.00,40.64 L8.10,40.18 L8.23,39.72 L8.37,39.27 L8.51,38.83 L8.65,38.39 L8.79,37.96 L8.92,37.54 L9.04,37.13 L9.16,36.73 L9.26,36.34 L9.34,35.95 L9.41,35.58 L9.46,35.21 L9.49,34.84 L9.50,34.48 L9.50,34.13 L9.47,33.77 L9.42,33.42 L9.35,33.07 L9.26,32.71 L9.15,32.36 L9.03,32.00 L8.88,31.64 L8.72,31.27 L8.55,30.89 L8.36,30.51 L8.16,30.12 L7.95,29.73 L7.74,29.32 L7.53,28.91 L7.31,28.49 L7.11,28.06 L6.92,27.62 L6.77,27.19 L6.67,26.75 L6.65,26.33 L6.73,25.93 L6.91,25.56 L7.18,25.21 L7.50,24.88 L7.86,24.57 L8.23,24.28 L8.61,23.99 L8.98,23.71 L9.35,23.44 L9.72,23.18 L10.07,22.92 L10.41,22.66 L10.74,22.40 L11.05,22.14 L11.34,21.88 L11.62,21.62 L11.88,21.35 L12.12,21.07 L12.34,20.79 L12.54,20.49 L12.73,20.19 L12.90,19.88 L13.05,19.55 L13.19,19.21 L13.31,18.86 L13.42,18.50 L13.51,18.12 L13.60,17.73 L13.68,17.32 L13.75,16.90 L13.82,16.47 L13.88,16.03 L13.95,15.57 L14.02,15.11 L14.09,14.65 L14.18,14.18 L14.29,13.72 L14.42,13.28 L14.59,12.87 L14.82,12.51 L15.12,12.24 L15.49,12.04 L15.91,11.92 L16.37,11.84 L16.83,11.80 L17.31,11.78 L17.78,11.77 L18.25,11.77 L18.71,11.77 L19.16,11.77 L19.60,11.76 L20.03,11.75 L20.44,11.74 L20.85,11.71 L21.24,11.67 L21.62,11.62 L21.98,11.55 L22.34,11.47 L22.69,11.37 L23.02,11.25 L23.35,11.12 L23.67,10.96 L23.99,10.79 L24.29,10.60 L24.60,10.38 L24.90,10.15 L25.20,9.90 L25.50,9.64 L25.80,9.35 L26.11,9.06 L26.42,8.75 L26.73,8.43 L27.05,8.10 L27.38,7.77 L27.71,7.44 L28.06,7.11 L28.41,6.80 L28.78,6.52 L29.16,6.29 L29.56,6.14 L29.96,6.09 L30.37,6.15 L30.79,6.30 L31.20,6.50 L31.60,6.74Z" fill="none" stroke="url(#kd3)" stroke-width="3"/>
<circle cx="33" cy="33.5" r="19" fill="#500010" opacity="0.75" filter="url(#ke3)"/></g>
</svg>
<div style="left:794.5px;top:396.5px;width:35px;height:35px;border-radius:50%;background:conic-gradient(from 0deg,#b4b4b6 0deg,#e0e0e0 40deg,#d8e2ec 80deg,#88a8d0 130deg,#c4d8ee 175deg,#9cacbe 215deg,#6a7078 268deg,#808286 312deg,#b4b4b6 360deg);box-shadow:inset -1px -1px 0 0.2px rgba(255,255,255,0.7),inset 1px 1px 0 0 rgba(70,70,80,0.6),0 0 0 0.5px rgba(60,0,0,0.5)"></div>
<div style="left:824.5px;top:428.8px;width:4.4px;height:4.4px;border-radius:50%;background:#fff;box-shadow:0 0 0 0.8px #333"></div>
<div class="t" style="left:2.5px;top:528.5px;font-size:11px;letter-spacing:0px">Load Done [C:¥Users¥gaito¥Documents¥g200kg¥Knobs¥MiniMoog Main_Red.knob]</div>
</body></html>
